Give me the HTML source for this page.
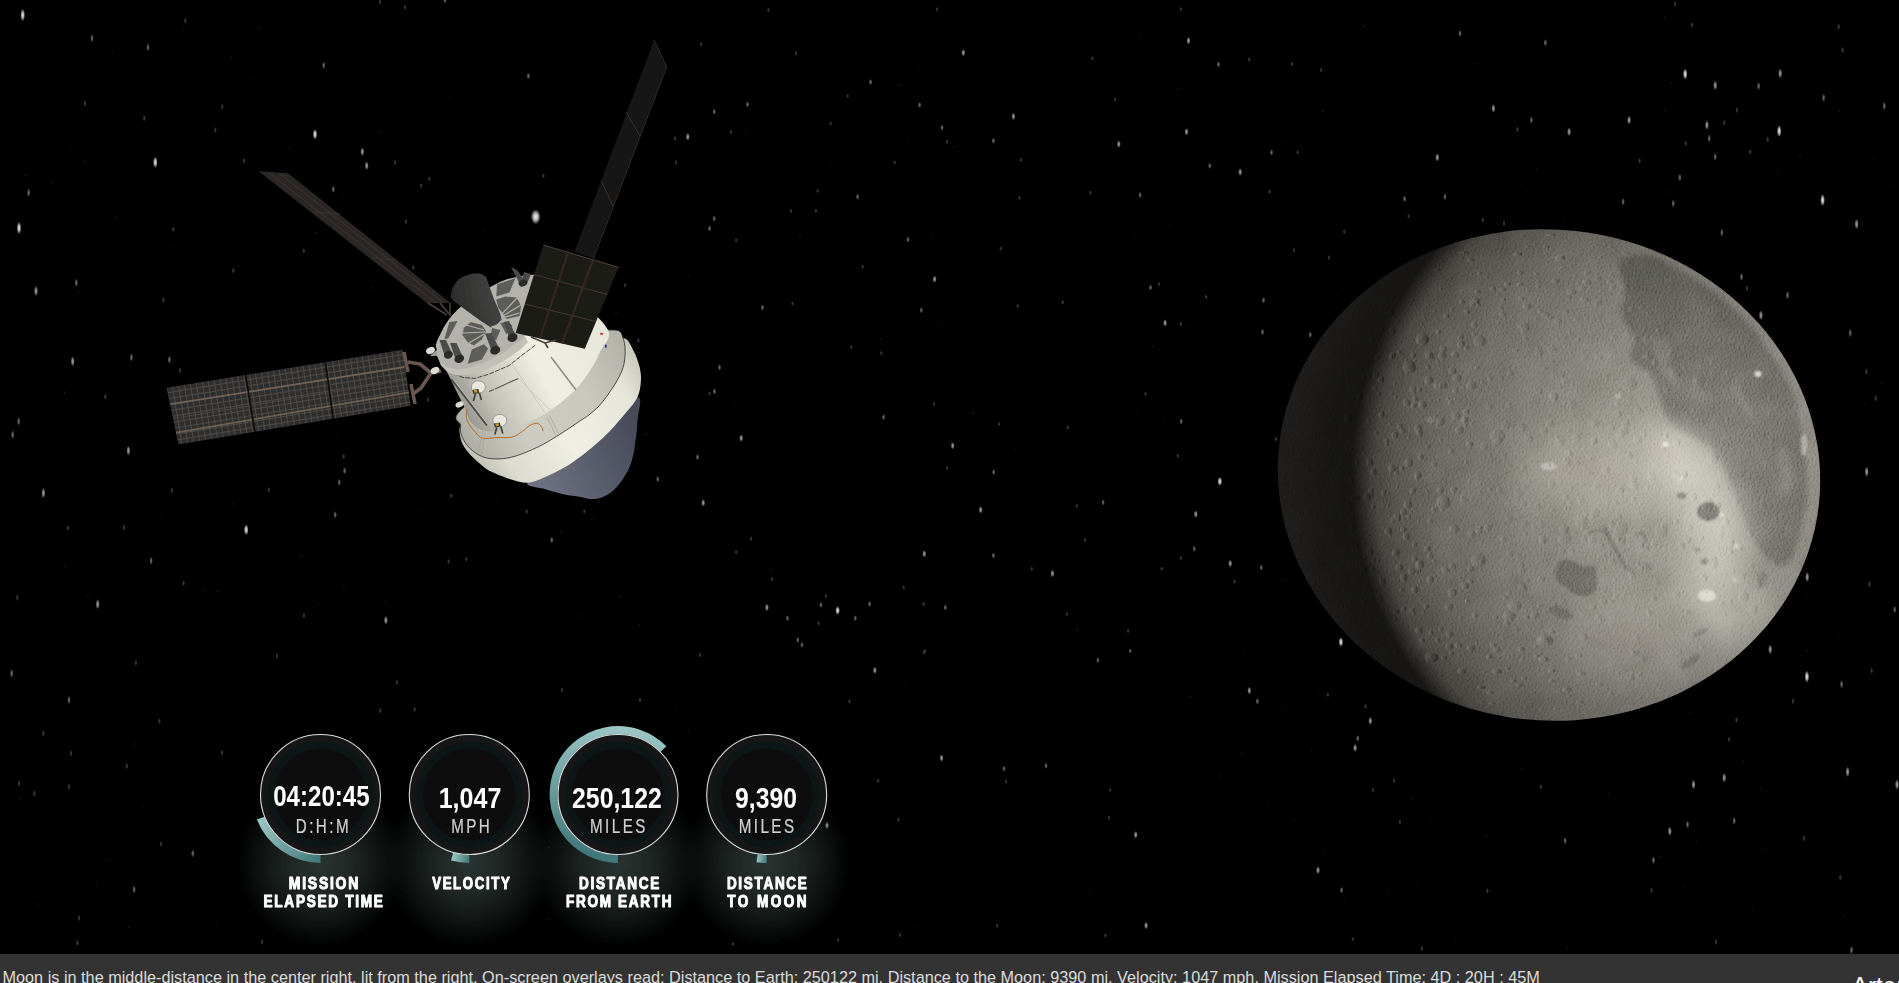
<!DOCTYPE html>
<html lang="en">
<head>
<meta charset="utf-8">
<title>Artemis Real-time Orbit Website</title>
<style>
html,body{margin:0;padding:0;background:#000;overflow:hidden;}
body{width:1899px;height:983px;position:relative;font-family:"Liberation Sans",Arial,sans-serif;}
#scene{position:absolute;left:0;top:0;width:1899px;height:983px;display:block;}
#bar{position:absolute;left:0;top:954px;width:1899px;height:29px;background:#333333;overflow:hidden;}
#desc{position:absolute;left:2.5px;top:14.2px;margin:0;white-space:nowrap;font-size:16.26px;line-height:18px;color:#dcdcdc;}
#title{position:absolute;left:1851.7px;top:17.6px;margin:0;white-space:nowrap;font-size:24.4px;line-height:28px;color:#fff;font-weight:normal;}
.gv{font-family:"Liberation Sans",Arial,sans-serif;font-weight:bold;fill:#fff;}
.gu{font-family:"Liberation Sans",Arial,sans-serif;fill:#d0d0d0;stroke:#d0d0d0;stroke-width:0.25px;}
.gl{font-family:"Liberation Sans",Arial,sans-serif;font-weight:bold;fill:#fff;}
</style>
</head>
<body>
<svg id="scene" width="1899" height="983" viewBox="0 0 1899 983">
<defs>
<radialGradient id="glow" cx="0.5" cy="0.5" r="0.5">
<stop offset="0" stop-color="#3a4844" stop-opacity="0.8"/>
<stop offset="0.35" stop-color="#3a4844" stop-opacity="0.6"/>
<stop offset="0.5" stop-color="#3a4844" stop-opacity="0.47"/>
<stop offset="0.77" stop-color="#3a4844" stop-opacity="0.22"/>
<stop offset="0.92" stop-color="#3a4844" stop-opacity="0.06"/>
<stop offset="1" stop-color="#3a4844" stop-opacity="0"/>
</radialGradient>
<radialGradient id="disc" cx="0.5" cy="0.5" r="0.5">
<stop offset="0" stop-color="#0a0c0c"/>
<stop offset="0.7" stop-color="#0c0f0f"/>
<stop offset="1" stop-color="#151a1a"/>
</radialGradient>
<linearGradient id="arcg" x1="0" y1="1" x2="0" y2="0">
<stop offset="0" stop-color="#3f7477"/>
<stop offset="1" stop-color="#8fc0bf"/>
</linearGradient>
</defs>
<rect width="1899" height="983" fill="#000"/>
<defs><radialGradient id="sg"><stop offset="0" stop-color="#fff" stop-opacity="1"/><stop offset="0.45" stop-color="#fff" stop-opacity="0.75"/><stop offset="1" stop-color="#fff" stop-opacity="0"/></radialGradient></defs>
<g fill="url(#sg)">
<ellipse cx="22.7" cy="15.0" rx="2.38" ry="6.41" opacity="0.9"/>
<ellipse cx="92.0" cy="38.3" rx="1.80" ry="4.40" opacity="0.42"/>
<ellipse cx="148.0" cy="47.3" rx="1.80" ry="4.25" opacity="0.42"/>
<ellipse cx="323.7" cy="65.3" rx="1.80" ry="3.85" opacity="0.42"/>
<ellipse cx="85.0" cy="103.3" rx="1.61" ry="3.61" opacity="0.24"/>
<ellipse cx="144.3" cy="118.3" rx="1.61" ry="3.48" opacity="0.24"/>
<ellipse cx="222.3" cy="106.7" rx="1.61" ry="3.33" opacity="0.24"/>
<ellipse cx="215.3" cy="130.0" rx="1.61" ry="3.34" opacity="0.24"/>
<ellipse cx="315.0" cy="134.3" rx="2.38" ry="5.39" opacity="0.9"/>
<ellipse cx="362.3" cy="151.7" rx="2.09" ry="4.46" opacity="0.62"/>
<ellipse cx="366.7" cy="165.7" rx="2.09" ry="4.45" opacity="0.62"/>
<ellipse cx="155.3" cy="162.3" rx="2.38" ry="5.90" opacity="0.9"/>
<ellipse cx="244.0" cy="160.7" rx="1.61" ry="3.29" opacity="0.24"/>
<ellipse cx="333.3" cy="189.3" rx="1.80" ry="3.83" opacity="0.42"/>
<ellipse cx="28.7" cy="192.7" rx="1.80" ry="4.58" opacity="0.42"/>
<ellipse cx="19.0" cy="228.0" rx="2.38" ry="6.42" opacity="0.9"/>
<ellipse cx="36.0" cy="291.0" rx="2.09" ry="5.39" opacity="0.62"/>
<ellipse cx="76.3" cy="282.7" rx="1.80" ry="4.44" opacity="0.42"/>
<ellipse cx="421.3" cy="185.7" rx="1.61" ry="3.00" opacity="0.24"/>
<ellipse cx="429.3" cy="179.0" rx="1.61" ry="2.99" opacity="0.24"/>
<ellipse cx="395.0" cy="162.3" rx="1.61" ry="3.04" opacity="0.24"/>
<ellipse cx="406.0" cy="221.7" rx="1.61" ry="3.02" opacity="0.24"/>
<ellipse cx="303.7" cy="251.0" rx="1.61" ry="3.18" opacity="0.24"/>
<ellipse cx="173.3" cy="229.3" rx="1.61" ry="3.42" opacity="0.24"/>
<ellipse cx="413.3" cy="267.7" rx="1.61" ry="3.01" opacity="0.24"/>
<ellipse cx="380.0" cy="1.7" rx="1.61" ry="3.06" opacity="0.24"/>
<ellipse cx="405.0" cy="7.3" rx="1.61" ry="3.02" opacity="0.24"/>
<ellipse cx="445.0" cy="0.0" rx="1.80" ry="3.63" opacity="0.42"/>
<ellipse cx="185.3" cy="20.7" rx="1.61" ry="3.40" opacity="0.24"/>
<ellipse cx="233.3" cy="270.7" rx="1.61" ry="3.31" opacity="0.24"/>
<ellipse cx="163.3" cy="300.0" rx="1.61" ry="3.44" opacity="0.24"/>
<ellipse cx="528.4" cy="76.0" rx="1.80" ry="3.50" opacity="0.42"/>
<ellipse cx="687.8" cy="136.8" rx="2.09" ry="3.93" opacity="0.62"/>
<ellipse cx="714.2" cy="111.7" rx="1.80" ry="3.31" opacity="0.42"/>
<ellipse cx="747.5" cy="104.4" rx="1.80" ry="3.28" opacity="0.42"/>
<ellipse cx="730.8" cy="131.8" rx="1.61" ry="2.70" opacity="0.24"/>
<ellipse cx="675.1" cy="138.4" rx="1.61" ry="2.73" opacity="0.24"/>
<ellipse cx="676.1" cy="162.4" rx="1.61" ry="2.73" opacity="0.24"/>
<ellipse cx="714.2" cy="218.5" rx="1.80" ry="3.31" opacity="0.42"/>
<ellipse cx="709.5" cy="228.5" rx="1.80" ry="3.31" opacity="0.42"/>
<ellipse cx="870.6" cy="82.0" rx="1.80" ry="3.23" opacity="0.42"/>
<ellipse cx="847.6" cy="96.0" rx="1.61" ry="2.65" opacity="0.24"/>
<ellipse cx="919.6" cy="105.0" rx="1.80" ry="3.22" opacity="0.42"/>
<ellipse cx="942.0" cy="127.7" rx="1.80" ry="3.22" opacity="0.42"/>
<ellipse cx="947.0" cy="141.7" rx="1.61" ry="2.63" opacity="0.24"/>
<ellipse cx="830.6" cy="123.4" rx="1.61" ry="2.65" opacity="0.24"/>
<ellipse cx="894.6" cy="162.4" rx="1.61" ry="2.64" opacity="0.24"/>
<ellipse cx="857.6" cy="196.8" rx="1.80" ry="3.23" opacity="0.42"/>
<ellipse cx="817.6" cy="190.8" rx="1.61" ry="2.66" opacity="0.24"/>
<ellipse cx="790.9" cy="210.8" rx="1.61" ry="2.67" opacity="0.24"/>
<ellipse cx="815.9" cy="210.8" rx="1.61" ry="2.66" opacity="0.24"/>
<ellipse cx="908.0" cy="239.5" rx="1.80" ry="3.22" opacity="0.42"/>
<ellipse cx="934.6" cy="279.2" rx="2.09" ry="3.80" opacity="0.62"/>
<ellipse cx="862.6" cy="266.8" rx="1.61" ry="2.64" opacity="0.24"/>
<ellipse cx="762.5" cy="307.5" rx="1.80" ry="3.27" opacity="0.42"/>
<ellipse cx="921.3" cy="310.2" rx="1.80" ry="3.22" opacity="0.42"/>
<ellipse cx="792.5" cy="303.5" rx="1.61" ry="2.67" opacity="0.24"/>
<ellipse cx="543.4" cy="175.8" rx="1.61" ry="2.85" opacity="0.24"/>
<ellipse cx="768.5" cy="10.0" rx="1.61" ry="2.68" opacity="0.24"/>
<ellipse cx="701.2" cy="44.4" rx="1.61" ry="2.71" opacity="0.24"/>
<ellipse cx="795.9" cy="53.4" rx="1.61" ry="2.66" opacity="0.24"/>
<ellipse cx="937.0" cy="9.3" rx="1.61" ry="2.63" opacity="0.24"/>
<ellipse cx="625.1" cy="285.2" rx="1.61" ry="2.77" opacity="0.24"/>
<ellipse cx="736.2" cy="240.2" rx="1.61" ry="2.69" opacity="0.24"/>
<ellipse cx="963.3" cy="52.7" rx="2.09" ry="3.80" opacity="0.62"/>
<ellipse cx="1188.5" cy="40.7" rx="2.09" ry="3.91" opacity="0.62"/>
<ellipse cx="1218.5" cy="64.4" rx="1.80" ry="3.33" opacity="0.42"/>
<ellipse cx="1249.2" cy="59.4" rx="1.61" ry="2.75" opacity="0.24"/>
<ellipse cx="1291.9" cy="64.0" rx="1.61" ry="2.79" opacity="0.24"/>
<ellipse cx="1321.2" cy="70.0" rx="1.61" ry="2.81" opacity="0.24"/>
<ellipse cx="1013.4" cy="116.4" rx="2.09" ry="3.81" opacity="0.62"/>
<ellipse cx="993.4" cy="140.8" rx="1.80" ry="3.22" opacity="0.42"/>
<ellipse cx="1021.0" cy="160.1" rx="1.61" ry="2.64" opacity="0.24"/>
<ellipse cx="1118.8" cy="144.1" rx="2.09" ry="3.86" opacity="0.62"/>
<ellipse cx="1186.5" cy="131.8" rx="2.09" ry="3.91" opacity="0.62"/>
<ellipse cx="1209.8" cy="165.8" rx="1.80" ry="3.33" opacity="0.42"/>
<ellipse cx="1240.2" cy="172.1" rx="2.09" ry="3.96" opacity="0.62"/>
<ellipse cx="1271.5" cy="152.4" rx="1.80" ry="3.38" opacity="0.42"/>
<ellipse cx="1297.6" cy="152.4" rx="1.61" ry="2.79" opacity="0.24"/>
<ellipse cx="1090.4" cy="192.8" rx="1.61" ry="2.66" opacity="0.24"/>
<ellipse cx="1140.1" cy="195.1" rx="1.80" ry="3.28" opacity="0.42"/>
<ellipse cx="1019.4" cy="197.8" rx="1.61" ry="2.64" opacity="0.24"/>
<ellipse cx="1269.5" cy="191.8" rx="1.61" ry="2.77" opacity="0.24"/>
<ellipse cx="1404.6" cy="198.8" rx="1.80" ry="3.55" opacity="0.42"/>
<ellipse cx="1408.6" cy="216.1" rx="1.61" ry="2.91" opacity="0.24"/>
<ellipse cx="1344.3" cy="231.8" rx="1.61" ry="2.84" opacity="0.24"/>
<ellipse cx="1293.9" cy="250.2" rx="1.61" ry="2.79" opacity="0.24"/>
<ellipse cx="1328.9" cy="257.5" rx="1.61" ry="2.82" opacity="0.24"/>
<ellipse cx="1000.7" cy="248.5" rx="1.61" ry="2.64" opacity="0.24"/>
<ellipse cx="1150.5" cy="287.5" rx="1.80" ry="3.28" opacity="0.42"/>
<ellipse cx="1159.1" cy="284.2" rx="1.61" ry="2.69" opacity="0.24"/>
<ellipse cx="1263.5" cy="300.2" rx="1.80" ry="3.38" opacity="0.42"/>
<ellipse cx="1017.7" cy="305.9" rx="1.61" ry="2.64" opacity="0.24"/>
<ellipse cx="1062.7" cy="302.2" rx="1.61" ry="2.65" opacity="0.24"/>
<ellipse cx="1165.1" cy="322.9" rx="2.09" ry="3.89" opacity="0.62"/>
<ellipse cx="1180.8" cy="324.2" rx="1.61" ry="2.70" opacity="0.24"/>
<ellipse cx="1206.2" cy="296.9" rx="1.61" ry="2.72" opacity="0.24"/>
<ellipse cx="1092.4" cy="58.4" rx="1.61" ry="2.66" opacity="0.24"/>
<ellipse cx="1115.1" cy="99.4" rx="1.61" ry="2.67" opacity="0.24"/>
<ellipse cx="1180.8" cy="9.3" rx="1.61" ry="2.70" opacity="0.24"/>
<ellipse cx="1460.0" cy="33.4" rx="1.80" ry="3.63" opacity="0.42"/>
<ellipse cx="1545.4" cy="42.7" rx="1.80" ry="3.79" opacity="0.42"/>
<ellipse cx="1493.4" cy="108.4" rx="2.09" ry="4.36" opacity="0.62"/>
<ellipse cx="1531.4" cy="120.1" rx="1.80" ry="3.76" opacity="0.42"/>
<ellipse cx="1569.1" cy="131.8" rx="2.09" ry="4.53" opacity="0.62"/>
<ellipse cx="1629.1" cy="120.1" rx="2.09" ry="4.68" opacity="0.62"/>
<ellipse cx="1437.3" cy="157.4" rx="2.09" ry="4.25" opacity="0.62"/>
<ellipse cx="1445.0" cy="196.8" rx="1.80" ry="3.61" opacity="0.42"/>
<ellipse cx="1623.1" cy="201.8" rx="1.80" ry="3.94" opacity="0.42"/>
<ellipse cx="1673.2" cy="203.5" rx="1.80" ry="4.06" opacity="0.42"/>
<ellipse cx="1679.8" cy="177.5" rx="1.80" ry="4.07" opacity="0.42"/>
<ellipse cx="1685.2" cy="74.0" rx="2.38" ry="5.69" opacity="0.9"/>
<ellipse cx="1715.2" cy="85.4" rx="2.09" ry="4.91" opacity="0.62"/>
<ellipse cx="1758.6" cy="86.1" rx="1.80" ry="4.27" opacity="0.42"/>
<ellipse cx="1780.2" cy="73.4" rx="2.09" ry="5.11" opacity="0.62"/>
<ellipse cx="1779.2" cy="131.1" rx="2.38" ry="6.02" opacity="0.9"/>
<ellipse cx="1706.9" cy="125.1" rx="2.09" ry="4.89" opacity="0.62"/>
<ellipse cx="1709.2" cy="138.4" rx="1.80" ry="4.14" opacity="0.42"/>
<ellipse cx="1715.2" cy="156.8" rx="1.80" ry="4.16" opacity="0.42"/>
<ellipse cx="1685.8" cy="143.4" rx="1.61" ry="3.34" opacity="0.24"/>
<ellipse cx="1750.2" cy="151.8" rx="1.61" ry="3.47" opacity="0.24"/>
<ellipse cx="1767.6" cy="139.4" rx="1.61" ry="3.51" opacity="0.24"/>
<ellipse cx="1823.6" cy="97.7" rx="1.80" ry="4.44" opacity="0.42"/>
<ellipse cx="1884.3" cy="106.1" rx="1.80" ry="4.62" opacity="0.42"/>
<ellipse cx="1822.6" cy="200.1" rx="2.38" ry="6.19" opacity="0.9"/>
<ellipse cx="1856.6" cy="224.1" rx="2.09" ry="5.36" opacity="0.62"/>
<ellipse cx="1721.9" cy="232.5" rx="1.80" ry="4.17" opacity="0.42"/>
<ellipse cx="1741.5" cy="276.9" rx="1.80" ry="4.22" opacity="0.42"/>
<ellipse cx="1787.6" cy="295.2" rx="1.80" ry="4.34" opacity="0.42"/>
<ellipse cx="1760.9" cy="315.2" rx="2.09" ry="5.05" opacity="0.62"/>
<ellipse cx="1674.8" cy="4.0" rx="1.61" ry="3.32" opacity="0.24"/>
<ellipse cx="1691.8" cy="25.0" rx="1.61" ry="3.35" opacity="0.24"/>
<ellipse cx="1838.6" cy="26.7" rx="1.61" ry="3.67" opacity="0.24"/>
<ellipse cx="1842.6" cy="50.0" rx="1.61" ry="3.68" opacity="0.24"/>
<ellipse cx="1736.9" cy="110.1" rx="1.61" ry="3.45" opacity="0.24"/>
<ellipse cx="1724.2" cy="122.7" rx="1.61" ry="3.42" opacity="0.24"/>
<ellipse cx="1639.5" cy="160.8" rx="1.61" ry="3.26" opacity="0.24"/>
<ellipse cx="1517.4" cy="129.4" rx="1.61" ry="3.06" opacity="0.24"/>
<ellipse cx="1504.0" cy="223.5" rx="1.61" ry="3.04" opacity="0.24"/>
<ellipse cx="1482.7" cy="220.1" rx="1.61" ry="3.00" opacity="0.24"/>
<ellipse cx="1746.9" cy="288.5" rx="1.61" ry="3.47" opacity="0.24"/>
<ellipse cx="72.7" cy="361.4" rx="2.09" ry="5.26" opacity="0.62"/>
<ellipse cx="131.4" cy="357.4" rx="1.80" ry="4.29" opacity="0.42"/>
<ellipse cx="169.4" cy="359.7" rx="1.80" ry="4.20" opacity="0.42"/>
<ellipse cx="180.1" cy="370.4" rx="1.61" ry="3.41" opacity="0.24"/>
<ellipse cx="105.4" cy="396.7" rx="1.61" ry="3.57" opacity="0.24"/>
<ellipse cx="18.7" cy="421.4" rx="1.80" ry="4.61" opacity="0.42"/>
<ellipse cx="12.7" cy="434.7" rx="1.80" ry="4.63" opacity="0.42"/>
<ellipse cx="128.4" cy="450.7" rx="2.09" ry="5.08" opacity="0.62"/>
<ellipse cx="43.4" cy="493.1" rx="2.09" ry="5.36" opacity="0.62"/>
<ellipse cx="246.2" cy="529.8" rx="2.38" ry="5.59" opacity="0.9"/>
<ellipse cx="343.6" cy="456.4" rx="1.61" ry="3.12" opacity="0.24"/>
<ellipse cx="344.6" cy="470.8" rx="1.80" ry="3.81" opacity="0.42"/>
<ellipse cx="339.2" cy="482.4" rx="1.80" ry="3.82" opacity="0.42"/>
<ellipse cx="335.2" cy="514.8" rx="1.80" ry="3.82" opacity="0.42"/>
<ellipse cx="171.8" cy="490.4" rx="1.61" ry="3.43" opacity="0.24"/>
<ellipse cx="151.1" cy="560.8" rx="1.80" ry="4.24" opacity="0.42"/>
<ellipse cx="97.7" cy="604.2" rx="2.09" ry="5.18" opacity="0.62"/>
<ellipse cx="183.5" cy="583.2" rx="1.61" ry="3.40" opacity="0.24"/>
<ellipse cx="385.9" cy="620.2" rx="2.09" ry="4.41" opacity="0.62"/>
<ellipse cx="448.6" cy="561.5" rx="1.61" ry="2.96" opacity="0.24"/>
<ellipse cx="466.3" cy="559.1" rx="1.61" ry="2.94" opacity="0.24"/>
<ellipse cx="451.3" cy="495.8" rx="1.61" ry="2.96" opacity="0.24"/>
<ellipse cx="427.9" cy="399.7" rx="1.61" ry="2.99" opacity="0.24"/>
<ellipse cx="67.7" cy="528.1" rx="1.61" ry="3.65" opacity="0.24"/>
<ellipse cx="17.3" cy="597.5" rx="1.61" ry="3.77" opacity="0.24"/>
<ellipse cx="303.9" cy="615.5" rx="1.61" ry="3.18" opacity="0.24"/>
<ellipse cx="268.8" cy="489.8" rx="1.61" ry="3.24" opacity="0.24"/>
<ellipse cx="124.1" cy="527.5" rx="1.61" ry="3.53" opacity="0.24"/>
<ellipse cx="638.4" cy="340.7" rx="1.61" ry="2.76" opacity="0.24"/>
<ellipse cx="719.5" cy="367.4" rx="1.80" ry="3.30" opacity="0.42"/>
<ellipse cx="714.5" cy="391.4" rx="1.80" ry="3.31" opacity="0.42"/>
<ellipse cx="709.5" cy="393.4" rx="1.61" ry="2.71" opacity="0.24"/>
<ellipse cx="741.2" cy="438.1" rx="2.09" ry="3.89" opacity="0.62"/>
<ellipse cx="697.5" cy="457.1" rx="1.80" ry="3.32" opacity="0.42"/>
<ellipse cx="657.8" cy="479.1" rx="1.80" ry="3.35" opacity="0.42"/>
<ellipse cx="703.2" cy="502.8" rx="2.09" ry="3.92" opacity="0.62"/>
<ellipse cx="551.7" cy="540.1" rx="1.80" ry="3.47" opacity="0.42"/>
<ellipse cx="526.7" cy="511.5" rx="1.61" ry="2.87" opacity="0.24"/>
<ellipse cx="584.4" cy="511.5" rx="1.61" ry="2.81" opacity="0.24"/>
<ellipse cx="736.2" cy="552.1" rx="1.61" ry="2.69" opacity="0.24"/>
<ellipse cx="751.2" cy="538.8" rx="1.61" ry="2.68" opacity="0.24"/>
<ellipse cx="851.3" cy="347.3" rx="1.61" ry="2.65" opacity="0.24"/>
<ellipse cx="881.3" cy="353.0" rx="1.61" ry="2.64" opacity="0.24"/>
<ellipse cx="883.6" cy="417.1" rx="1.80" ry="3.22" opacity="0.42"/>
<ellipse cx="934.0" cy="403.7" rx="1.61" ry="2.63" opacity="0.24"/>
<ellipse cx="924.3" cy="553.8" rx="2.09" ry="3.80" opacity="0.62"/>
<ellipse cx="766.9" cy="607.5" rx="2.09" ry="3.87" opacity="0.62"/>
<ellipse cx="787.5" cy="618.2" rx="1.80" ry="3.26" opacity="0.42"/>
<ellipse cx="837.6" cy="610.5" rx="2.38" ry="4.51" opacity="0.9"/>
<ellipse cx="820.9" cy="604.9" rx="1.80" ry="3.24" opacity="0.42"/>
<ellipse cx="869.6" cy="603.9" rx="1.80" ry="3.23" opacity="0.42"/>
<ellipse cx="855.3" cy="618.2" rx="1.80" ry="3.23" opacity="0.42"/>
<ellipse cx="818.6" cy="623.2" rx="1.61" ry="2.66" opacity="0.24"/>
<ellipse cx="797.9" cy="639.9" rx="1.80" ry="3.25" opacity="0.42"/>
<ellipse cx="801.9" cy="644.9" rx="1.80" ry="3.25" opacity="0.42"/>
<ellipse cx="945.3" cy="607.5" rx="1.80" ry="3.22" opacity="0.42"/>
<ellipse cx="923.6" cy="604.2" rx="1.61" ry="2.63" opacity="0.24"/>
<ellipse cx="903.6" cy="587.5" rx="1.61" ry="2.64" opacity="0.24"/>
<ellipse cx="771.9" cy="579.2" rx="1.61" ry="2.67" opacity="0.24"/>
<ellipse cx="825.9" cy="595.9" rx="1.61" ry="2.65" opacity="0.24"/>
<ellipse cx="947.0" cy="468.1" rx="1.61" ry="2.63" opacity="0.24"/>
<ellipse cx="925.3" cy="650.9" rx="1.61" ry="2.63" opacity="0.24"/>
<ellipse cx="952.7" cy="445.7" rx="2.09" ry="3.80" opacity="0.62"/>
<ellipse cx="993.7" cy="472.1" rx="1.80" ry="3.22" opacity="0.42"/>
<ellipse cx="980.7" cy="509.8" rx="2.09" ry="3.80" opacity="0.62"/>
<ellipse cx="993.4" cy="555.5" rx="1.80" ry="3.22" opacity="0.42"/>
<ellipse cx="1052.4" cy="573.5" rx="2.09" ry="3.82" opacity="0.62"/>
<ellipse cx="1076.8" cy="505.8" rx="1.61" ry="2.65" opacity="0.24"/>
<ellipse cx="1103.1" cy="502.4" rx="1.80" ry="3.26" opacity="0.42"/>
<ellipse cx="1145.5" cy="394.0" rx="1.61" ry="2.68" opacity="0.24"/>
<ellipse cx="1181.2" cy="421.4" rx="1.80" ry="3.30" opacity="0.42"/>
<ellipse cx="1177.8" cy="455.7" rx="1.61" ry="2.70" opacity="0.24"/>
<ellipse cx="1219.8" cy="481.4" rx="2.38" ry="4.65" opacity="0.9"/>
<ellipse cx="1195.8" cy="514.1" rx="2.09" ry="3.92" opacity="0.62"/>
<ellipse cx="1194.2" cy="548.8" rx="1.80" ry="3.31" opacity="0.42"/>
<ellipse cx="1180.8" cy="558.1" rx="1.61" ry="2.70" opacity="0.24"/>
<ellipse cx="1230.2" cy="563.5" rx="2.09" ry="3.95" opacity="0.62"/>
<ellipse cx="1261.2" cy="567.5" rx="1.80" ry="3.37" opacity="0.42"/>
<ellipse cx="1234.5" cy="581.5" rx="1.61" ry="2.74" opacity="0.24"/>
<ellipse cx="1161.8" cy="568.8" rx="1.61" ry="2.69" opacity="0.24"/>
<ellipse cx="1262.5" cy="332.0" rx="1.80" ry="3.37" opacity="0.42"/>
<ellipse cx="1310.2" cy="334.7" rx="1.80" ry="3.43" opacity="0.42"/>
<ellipse cx="1275.9" cy="439.1" rx="1.61" ry="2.77" opacity="0.24"/>
<ellipse cx="1340.9" cy="642.0" rx="2.38" ry="4.83" opacity="0.9"/>
<ellipse cx="1128.1" cy="630.9" rx="1.61" ry="2.67" opacity="0.24"/>
<ellipse cx="1130.1" cy="650.9" rx="1.61" ry="2.68" opacity="0.24"/>
<ellipse cx="1066.7" cy="614.2" rx="1.61" ry="2.65" opacity="0.24"/>
<ellipse cx="1031.7" cy="568.8" rx="1.61" ry="2.64" opacity="0.24"/>
<ellipse cx="999.0" cy="424.1" rx="1.61" ry="2.64" opacity="0.24"/>
<ellipse cx="1067.7" cy="427.4" rx="1.61" ry="2.65" opacity="0.24"/>
<ellipse cx="1085.1" cy="539.8" rx="1.61" ry="2.66" opacity="0.24"/>
<ellipse cx="1770.2" cy="649.4" rx="2.09" ry="5.08" opacity="0.62"/>
<ellipse cx="1806.9" cy="676.7" rx="2.38" ry="6.13" opacity="0.9"/>
<ellipse cx="1841.6" cy="684.4" rx="1.80" ry="4.49" opacity="0.42"/>
<ellipse cx="1871.6" cy="670.7" rx="1.61" ry="3.75" opacity="0.24"/>
<ellipse cx="1736.5" cy="720.1" rx="1.61" ry="3.44" opacity="0.24"/>
<ellipse cx="1729.2" cy="739.4" rx="1.61" ry="3.43" opacity="0.24"/>
<ellipse cx="1724.2" cy="777.8" rx="2.09" ry="4.94" opacity="0.62"/>
<ellipse cx="1693.5" cy="784.5" rx="2.09" ry="4.85" opacity="0.62"/>
<ellipse cx="1847.6" cy="771.8" rx="2.09" ry="5.33" opacity="0.62"/>
<ellipse cx="1897.0" cy="784.5" rx="2.09" ry="5.50" opacity="0.62"/>
<ellipse cx="1734.2" cy="820.8" rx="1.80" ry="4.20" opacity="0.42"/>
<ellipse cx="1687.5" cy="824.5" rx="1.80" ry="4.09" opacity="0.42"/>
<ellipse cx="1669.8" cy="831.2" rx="2.09" ry="4.78" opacity="0.62"/>
<ellipse cx="1565.1" cy="840.8" rx="1.80" ry="3.82" opacity="0.42"/>
<ellipse cx="1653.5" cy="860.2" rx="1.80" ry="4.01" opacity="0.42"/>
<ellipse cx="1651.5" cy="890.2" rx="1.61" ry="3.28" opacity="0.24"/>
<ellipse cx="1487.4" cy="890.9" rx="1.61" ry="3.01" opacity="0.24"/>
<ellipse cx="1540.7" cy="786.8" rx="1.61" ry="3.09" opacity="0.24"/>
<ellipse cx="1804.2" cy="838.5" rx="1.61" ry="3.59" opacity="0.24"/>
<ellipse cx="1840.3" cy="877.5" rx="1.61" ry="3.67" opacity="0.24"/>
<ellipse cx="1793.2" cy="701.1" rx="1.61" ry="3.57" opacity="0.24"/>
<ellipse cx="1895.0" cy="609.3" rx="1.61" ry="3.80" opacity="0.24"/>
<ellipse cx="11.7" cy="673.4" rx="1.80" ry="4.63" opacity="0.42"/>
<ellipse cx="135.8" cy="662.7" rx="1.61" ry="3.50" opacity="0.24"/>
<ellipse cx="69.0" cy="700.0" rx="1.80" ry="4.46" opacity="0.42"/>
<ellipse cx="276.9" cy="656.0" rx="1.61" ry="3.23" opacity="0.24"/>
<ellipse cx="396.9" cy="682.4" rx="1.61" ry="3.03" opacity="0.24"/>
<ellipse cx="159.4" cy="721.1" rx="1.61" ry="3.45" opacity="0.24"/>
<ellipse cx="43.4" cy="733.4" rx="1.61" ry="3.71" opacity="0.24"/>
<ellipse cx="71.0" cy="753.4" rx="1.61" ry="3.65" opacity="0.24"/>
<ellipse cx="222.1" cy="752.7" rx="1.61" ry="3.33" opacity="0.24"/>
<ellipse cx="126.8" cy="766.1" rx="1.61" ry="3.52" opacity="0.24"/>
<ellipse cx="69.0" cy="786.8" rx="1.61" ry="3.65" opacity="0.24"/>
<ellipse cx="34.4" cy="793.4" rx="1.61" ry="3.73" opacity="0.24"/>
<ellipse cx="19.0" cy="783.4" rx="1.61" ry="3.77" opacity="0.24"/>
<ellipse cx="161.1" cy="844.1" rx="1.61" ry="3.45" opacity="0.24"/>
<ellipse cx="192.8" cy="853.5" rx="1.80" ry="4.14" opacity="0.42"/>
<ellipse cx="134.1" cy="889.5" rx="1.80" ry="4.29" opacity="0.42"/>
<ellipse cx="79.1" cy="917.9" rx="1.61" ry="3.63" opacity="0.24"/>
<ellipse cx="77.4" cy="942.9" rx="1.61" ry="3.63" opacity="0.24"/>
<ellipse cx="414.6" cy="709.4" rx="1.61" ry="3.01" opacity="0.24"/>
<ellipse cx="380.3" cy="710.7" rx="1.61" ry="3.06" opacity="0.24"/>
<ellipse cx="874.8" cy="670.3" rx="2.09" ry="3.81" opacity="0.62"/>
<ellipse cx="941.6" cy="758.0" rx="2.09" ry="3.80" opacity="0.62"/>
<ellipse cx="1003.9" cy="768.7" rx="1.80" ry="3.22" opacity="0.42"/>
<ellipse cx="1005.9" cy="781.6" rx="1.61" ry="2.64" opacity="0.24"/>
<ellipse cx="1046.0" cy="765.7" rx="1.80" ry="3.23" opacity="0.42"/>
<ellipse cx="1097.9" cy="660.2" rx="1.80" ry="3.25" opacity="0.42"/>
<ellipse cx="1130.3" cy="651.1" rx="1.61" ry="2.68" opacity="0.24"/>
<ellipse cx="1135.7" cy="834.8" rx="2.09" ry="3.87" opacity="0.62"/>
<ellipse cx="1146.1" cy="925.5" rx="2.09" ry="3.88" opacity="0.62"/>
<ellipse cx="1110.1" cy="790.0" rx="1.61" ry="2.67" opacity="0.24"/>
<ellipse cx="1109.1" cy="817.6" rx="1.61" ry="2.67" opacity="0.24"/>
<ellipse cx="1249.3" cy="690.6" rx="2.09" ry="3.97" opacity="0.62"/>
<ellipse cx="1257.4" cy="701.3" rx="1.80" ry="3.37" opacity="0.42"/>
<ellipse cx="1370.3" cy="720.9" rx="2.09" ry="4.14" opacity="0.62"/>
<ellipse cx="1355.1" cy="747.9" rx="2.09" ry="4.11" opacity="0.62"/>
<ellipse cx="1357.8" cy="738.4" rx="1.80" ry="3.48" opacity="0.42"/>
<ellipse cx="1327.8" cy="694.6" rx="1.61" ry="2.82" opacity="0.24"/>
<ellipse cx="1365.6" cy="706.4" rx="1.61" ry="2.86" opacity="0.24"/>
<ellipse cx="1318.0" cy="870.2" rx="2.09" ry="4.06" opacity="0.62"/>
<ellipse cx="1341.6" cy="890.1" rx="1.80" ry="3.46" opacity="0.42"/>
<ellipse cx="1399.9" cy="822.0" rx="1.61" ry="2.90" opacity="0.24"/>
<ellipse cx="1394.2" cy="780.5" rx="1.61" ry="2.89" opacity="0.24"/>
<ellipse cx="1373.0" cy="790.0" rx="1.61" ry="2.87" opacity="0.24"/>
<ellipse cx="827.0" cy="825.4" rx="2.09" ry="3.83" opacity="0.62"/>
<ellipse cx="898.4" cy="819.6" rx="1.61" ry="2.64" opacity="0.24"/>
<ellipse cx="878.2" cy="780.9" rx="1.61" ry="2.64" opacity="0.24"/>
<ellipse cx="900.1" cy="934.9" rx="1.61" ry="2.64" opacity="0.24"/>
<ellipse cx="997.2" cy="925.8" rx="1.61" ry="2.64" opacity="0.24"/>
<ellipse cx="1105.4" cy="935.6" rx="1.61" ry="2.66" opacity="0.24"/>
<ellipse cx="1352.7" cy="939.0" rx="1.61" ry="2.85" opacity="0.24"/>
<ellipse cx="849.5" cy="701.3" rx="1.61" ry="2.65" opacity="0.24"/>
<ellipse cx="923.7" cy="652.5" rx="1.61" ry="2.63" opacity="0.24"/>
<ellipse cx="1421.8" cy="948.4" rx="1.61" ry="2.92" opacity="0.24"/>
<ellipse cx="1850.2" cy="333.0" rx="1.80" ry="4.52" opacity="0.42"/>
<ellipse cx="1866.7" cy="471.8" rx="2.09" ry="5.40" opacity="0.62"/>
<ellipse cx="1807.2" cy="577.0" rx="2.09" ry="5.20" opacity="0.62"/>
<ellipse cx="1869.4" cy="584.2" rx="1.61" ry="3.74" opacity="0.24"/>
<ellipse cx="1875.7" cy="398.4" rx="1.61" ry="3.76" opacity="0.24"/>
<ellipse cx="1866.3" cy="371.5" rx="1.61" ry="3.73" opacity="0.24"/>
<ellipse cx="1894.5" cy="609.8" rx="1.61" ry="3.80" opacity="0.24"/>
<ellipse cx="262.0" cy="942.0" rx="1.61" ry="3.25" opacity="0.24"/>
<ellipse cx="640.0" cy="700.0" rx="1.61" ry="2.76" opacity="0.24"/>
<ellipse cx="700.0" cy="655.0" rx="1.61" ry="2.71" opacity="0.24"/>
<ellipse cx="562.0" cy="690.0" rx="1.61" ry="2.83" opacity="0.24"/>
<ellipse cx="516.0" cy="812.0" rx="1.61" ry="2.88" opacity="0.24"/>
<ellipse cx="608.0" cy="740.0" rx="1.61" ry="2.79" opacity="0.24"/>
<ellipse cx="838.0" cy="940.0" rx="1.61" ry="2.65" opacity="0.24"/>
<ellipse cx="1851.5" cy="950.0" rx="1.80" ry="4.52" opacity="0.42"/>
<ellipse cx="1716.0" cy="942.0" rx="1.61" ry="3.40" opacity="0.24"/>
<ellipse cx="733.0" cy="944.0" rx="1.61" ry="2.69" opacity="0.24"/>
<ellipse cx="448.3" cy="98.2" rx="1.1" ry="1.7" opacity="0.07"/>
<ellipse cx="294.3" cy="63.3" rx="1.1" ry="1.7" opacity="0.07"/>
<ellipse cx="1743.2" cy="762.0" rx="1.1" ry="1.7" opacity="0.10"/>
<ellipse cx="421.4" cy="510.9" rx="1.1" ry="1.7" opacity="0.07"/>
<ellipse cx="327.9" cy="101.1" rx="1.1" ry="1.7" opacity="0.06"/>
<ellipse cx="1761.3" cy="789.1" rx="1.1" ry="1.7" opacity="0.10"/>
<ellipse cx="1520.1" cy="184.2" rx="1.1" ry="1.7" opacity="0.07"/>
<ellipse cx="1190.6" cy="696.8" rx="1.1" ry="1.7" opacity="0.10"/>
<ellipse cx="1671.2" cy="82.6" rx="1.1" ry="1.7" opacity="0.09"/>
<ellipse cx="1275.6" cy="481.7" rx="1.1" ry="1.7" opacity="0.06"/>
<ellipse cx="899.3" cy="85.1" rx="1.1" ry="1.7" opacity="0.11"/>
<ellipse cx="1643.6" cy="521.4" rx="1.1" ry="1.7" opacity="0.07"/>
<ellipse cx="1725.9" cy="544.9" rx="1.1" ry="1.7" opacity="0.10"/>
<ellipse cx="1610.4" cy="484.0" rx="1.1" ry="1.7" opacity="0.07"/>
<ellipse cx="1137.3" cy="410.4" rx="1.1" ry="1.7" opacity="0.06"/>
<ellipse cx="579.4" cy="773.6" rx="1.1" ry="1.7" opacity="0.05"/>
<ellipse cx="88.0" cy="596.3" rx="1.1" ry="1.7" opacity="0.07"/>
<ellipse cx="1015.2" cy="448.6" rx="1.1" ry="1.7" opacity="0.07"/>
<ellipse cx="1893.8" cy="186.2" rx="1.1" ry="1.7" opacity="0.07"/>
<ellipse cx="384.9" cy="602.3" rx="1.1" ry="1.7" opacity="0.07"/>
<ellipse cx="675.7" cy="711.1" rx="1.1" ry="1.7" opacity="0.07"/>
<ellipse cx="1060.6" cy="860.9" rx="1.1" ry="1.7" opacity="0.06"/>
<ellipse cx="117.0" cy="217.9" rx="1.1" ry="1.7" opacity="0.10"/>
<ellipse cx="1168.7" cy="226.0" rx="1.1" ry="1.7" opacity="0.07"/>
<ellipse cx="337.1" cy="437.0" rx="1.1" ry="1.7" opacity="0.05"/>
<ellipse cx="1324.2" cy="852.9" rx="1.1" ry="1.7" opacity="0.11"/>
<ellipse cx="1395.5" cy="913.8" rx="1.1" ry="1.7" opacity="0.05"/>
<ellipse cx="548.8" cy="919.6" rx="1.1" ry="1.7" opacity="0.10"/>
<ellipse cx="779.4" cy="898.0" rx="1.1" ry="1.7" opacity="0.09"/>
<ellipse cx="1553.2" cy="279.3" rx="1.1" ry="1.7" opacity="0.06"/>
<ellipse cx="843.4" cy="129.9" rx="1.1" ry="1.7" opacity="0.07"/>
<ellipse cx="1826.5" cy="315.4" rx="1.1" ry="1.7" opacity="0.05"/>
<ellipse cx="85.1" cy="161.4" rx="1.1" ry="1.7" opacity="0.10"/>
<ellipse cx="688.8" cy="276.4" rx="1.1" ry="1.7" opacity="0.06"/>
<ellipse cx="1864.3" cy="403.6" rx="1.1" ry="1.7" opacity="0.06"/>
<ellipse cx="112.7" cy="52.6" rx="1.1" ry="1.7" opacity="0.06"/>
<ellipse cx="1285.3" cy="142.5" rx="1.1" ry="1.7" opacity="0.05"/>
<ellipse cx="931.8" cy="237.1" rx="1.1" ry="1.7" opacity="0.11"/>
<ellipse cx="232.2" cy="503.8" rx="1.1" ry="1.7" opacity="0.10"/>
<ellipse cx="777.3" cy="940.2" rx="1.1" ry="1.7" opacity="0.08"/>
<ellipse cx="459.3" cy="390.9" rx="1.1" ry="1.7" opacity="0.05"/>
<ellipse cx="799.9" cy="236.7" rx="1.1" ry="1.7" opacity="0.10"/>
<ellipse cx="1578.2" cy="474.6" rx="1.1" ry="1.7" opacity="0.05"/>
<ellipse cx="483.1" cy="230.8" rx="1.1" ry="1.7" opacity="0.06"/>
<ellipse cx="439.6" cy="828.0" rx="1.1" ry="1.7" opacity="0.06"/>
<ellipse cx="97.4" cy="883.5" rx="1.1" ry="1.7" opacity="0.08"/>
<ellipse cx="1881.1" cy="383.6" rx="1.1" ry="1.7" opacity="0.10"/>
<ellipse cx="1241.9" cy="752.9" rx="1.1" ry="1.7" opacity="0.09"/>
<ellipse cx="938.7" cy="88.4" rx="1.1" ry="1.7" opacity="0.06"/>
<ellipse cx="1659.4" cy="856.6" rx="1.1" ry="1.7" opacity="0.11"/>
<ellipse cx="639.2" cy="625.4" rx="1.1" ry="1.7" opacity="0.10"/>
<ellipse cx="1220.1" cy="775.7" rx="1.1" ry="1.7" opacity="0.08"/>
<ellipse cx="1243.3" cy="653.0" rx="1.1" ry="1.7" opacity="0.07"/>
<ellipse cx="1752.4" cy="910.4" rx="1.1" ry="1.7" opacity="0.05"/>
<ellipse cx="1844.1" cy="915.6" rx="1.1" ry="1.7" opacity="0.09"/>
<ellipse cx="84.6" cy="855.8" rx="1.1" ry="1.7" opacity="0.06"/>
<ellipse cx="1839.2" cy="635.2" rx="1.1" ry="1.7" opacity="0.05"/>
<ellipse cx="317.6" cy="604.7" rx="1.1" ry="1.7" opacity="0.08"/>
<ellipse cx="1417.6" cy="883.0" rx="1.1" ry="1.7" opacity="0.06"/>
<ellipse cx="6.2" cy="878.1" rx="1.1" ry="1.7" opacity="0.05"/>
<ellipse cx="1664.3" cy="110.3" rx="1.1" ry="1.7" opacity="0.10"/>
<ellipse cx="1486.9" cy="835.7" rx="1.1" ry="1.7" opacity="0.08"/>
<ellipse cx="1668.7" cy="192.0" rx="1.1" ry="1.7" opacity="0.09"/>
<ellipse cx="627.9" cy="848.9" rx="1.1" ry="1.7" opacity="0.10"/>
<ellipse cx="895.4" cy="501.1" rx="1.1" ry="1.7" opacity="0.05"/>
<ellipse cx="64.9" cy="566.0" rx="1.1" ry="1.7" opacity="0.08"/>
<ellipse cx="1642.1" cy="578.9" rx="1.1" ry="1.7" opacity="0.06"/>
<ellipse cx="688.5" cy="730.7" rx="1.1" ry="1.7" opacity="0.08"/>
<ellipse cx="20.0" cy="797.5" rx="1.1" ry="1.7" opacity="0.10"/>
<ellipse cx="161.7" cy="517.3" rx="1.1" ry="1.7" opacity="0.07"/>
<ellipse cx="1495.2" cy="296.2" rx="1.1" ry="1.7" opacity="0.06"/>
<ellipse cx="924.2" cy="919.9" rx="1.1" ry="1.7" opacity="0.06"/>
<ellipse cx="217.3" cy="591.2" rx="1.1" ry="1.7" opacity="0.10"/>
<ellipse cx="973.2" cy="413.1" rx="1.1" ry="1.7" opacity="0.10"/>
<ellipse cx="1474.7" cy="63.7" rx="1.1" ry="1.7" opacity="0.10"/>
<ellipse cx="371.9" cy="287.8" rx="1.1" ry="1.7" opacity="0.10"/>
<ellipse cx="802.3" cy="760.0" rx="1.1" ry="1.7" opacity="0.06"/>
<ellipse cx="1660.3" cy="167.9" rx="1.1" ry="1.7" opacity="0.06"/>
<ellipse cx="938.6" cy="322.3" rx="1.1" ry="1.7" opacity="0.08"/>
<ellipse cx="1716.8" cy="676.4" rx="1.1" ry="1.7" opacity="0.05"/>
<ellipse cx="592.1" cy="518.8" rx="1.1" ry="1.7" opacity="0.08"/>
<ellipse cx="1358.9" cy="461.0" rx="1.1" ry="1.7" opacity="0.05"/>
<ellipse cx="466.1" cy="806.9" rx="1.1" ry="1.7" opacity="0.07"/>
<ellipse cx="1455.9" cy="938.5" rx="1.1" ry="1.7" opacity="0.09"/>
<ellipse cx="1285.1" cy="580.3" rx="1.1" ry="1.7" opacity="0.07"/>
<ellipse cx="1733.4" cy="444.6" rx="1.1" ry="1.7" opacity="0.10"/>
<ellipse cx="580.4" cy="825.9" rx="1.1" ry="1.7" opacity="0.10"/>
<ellipse cx="1164.1" cy="420.8" rx="1.1" ry="1.7" opacity="0.06"/>
<ellipse cx="1464.2" cy="344.8" rx="1.1" ry="1.7" opacity="0.09"/>
<ellipse cx="253.1" cy="78.6" rx="1.1" ry="1.7" opacity="0.06"/>
<ellipse cx="1536.3" cy="169.1" rx="1.1" ry="1.7" opacity="0.10"/>
<ellipse cx="706.4" cy="548.3" rx="1.1" ry="1.7" opacity="0.07"/>
<ellipse cx="1179.0" cy="89.0" rx="1.1" ry="1.7" opacity="0.07"/>
<ellipse cx="1777.8" cy="171.1" rx="1.1" ry="1.7" opacity="0.09"/>
<ellipse cx="620.4" cy="286.2" rx="1.1" ry="1.7" opacity="0.05"/>
<ellipse cx="38.2" cy="903.8" rx="1.1" ry="1.7" opacity="0.10"/>
<ellipse cx="1521.3" cy="768.5" rx="1.1" ry="1.7" opacity="0.11"/>
<ellipse cx="300.9" cy="556.1" rx="1.1" ry="1.7" opacity="0.08"/>
<ellipse cx="1089.8" cy="892.9" rx="1.1" ry="1.7" opacity="0.10"/>
<ellipse cx="1839.1" cy="111.2" rx="1.1" ry="1.7" opacity="0.09"/>
<ellipse cx="1282.6" cy="709.4" rx="1.1" ry="1.7" opacity="0.09"/>
<ellipse cx="1578.6" cy="288.3" rx="1.1" ry="1.7" opacity="0.11"/>
<ellipse cx="771.2" cy="570.3" rx="1.1" ry="1.7" opacity="0.10"/>
<ellipse cx="1336.1" cy="294.8" rx="1.1" ry="1.7" opacity="0.06"/>
<ellipse cx="620.2" cy="596.7" rx="1.1" ry="1.7" opacity="0.11"/>
<ellipse cx="1707.2" cy="381.0" rx="1.1" ry="1.7" opacity="0.07"/>
<ellipse cx="1552.4" cy="270.2" rx="1.1" ry="1.7" opacity="0.07"/>
<ellipse cx="25.0" cy="175.1" rx="1.1" ry="1.7" opacity="0.08"/>
<ellipse cx="1316.6" cy="585.3" rx="1.1" ry="1.7" opacity="0.07"/>
<ellipse cx="1806.1" cy="593.3" rx="1.1" ry="1.7" opacity="0.06"/>
<ellipse cx="128.6" cy="927.0" rx="1.1" ry="1.7" opacity="0.11"/>
<ellipse cx="1747.0" cy="574.8" rx="1.1" ry="1.7" opacity="0.07"/>
<ellipse cx="173.5" cy="245.5" rx="1.1" ry="1.7" opacity="0.06"/>
<ellipse cx="1762.7" cy="849.7" rx="1.1" ry="1.7" opacity="0.10"/>
<ellipse cx="282.4" cy="226.9" rx="1.1" ry="1.7" opacity="0.07"/>
<ellipse cx="1800.1" cy="155.5" rx="1.1" ry="1.7" opacity="0.10"/>
<ellipse cx="1292.6" cy="520.9" rx="1.1" ry="1.7" opacity="0.11"/>
<ellipse cx="498.2" cy="499.2" rx="1.1" ry="1.7" opacity="0.06"/>
<ellipse cx="183.8" cy="30.2" rx="1.1" ry="1.7" opacity="0.07"/>
<ellipse cx="231.2" cy="58.3" rx="1.1" ry="1.7" opacity="0.11"/>
<ellipse cx="548.9" cy="847.5" rx="1.1" ry="1.7" opacity="0.09"/>
<ellipse cx="1388.8" cy="623.7" rx="1.1" ry="1.7" opacity="0.11"/>
<ellipse cx="1668.2" cy="684.9" rx="1.1" ry="1.7" opacity="0.08"/>
<ellipse cx="1317.5" cy="689.0" rx="1.1" ry="1.7" opacity="0.08"/>
<ellipse cx="954.3" cy="146.8" rx="1.1" ry="1.7" opacity="0.10"/>
<ellipse cx="919.5" cy="64.5" rx="1.1" ry="1.7" opacity="0.06"/>
<ellipse cx="1661.2" cy="243.8" rx="1.1" ry="1.7" opacity="0.07"/>
<ellipse cx="1295.4" cy="820.2" rx="1.1" ry="1.7" opacity="0.07"/>
<ellipse cx="734.5" cy="402.8" rx="1.1" ry="1.7" opacity="0.05"/>
<ellipse cx="1664.8" cy="18.1" rx="1.1" ry="1.7" opacity="0.11"/>
<ellipse cx="289.6" cy="149.2" rx="1.1" ry="1.7" opacity="0.10"/>
<ellipse cx="1563.6" cy="220.9" rx="1.1" ry="1.7" opacity="0.08"/>
<ellipse cx="905.3" cy="684.1" rx="1.1" ry="1.7" opacity="0.06"/>
<ellipse cx="1567.6" cy="948.6" rx="1.1" ry="1.7" opacity="0.09"/>
<ellipse cx="1749.4" cy="892.1" rx="1.1" ry="1.7" opacity="0.07"/>
<ellipse cx="1609.4" cy="793.7" rx="1.1" ry="1.7" opacity="0.09"/>
<ellipse cx="203.5" cy="589.5" rx="1.1" ry="1.7" opacity="0.10"/>
<ellipse cx="579.5" cy="615.8" rx="1.1" ry="1.7" opacity="0.10"/>
<ellipse cx="1139.6" cy="35.4" rx="1.1" ry="1.7" opacity="0.09"/>
<ellipse cx="485.5" cy="816.8" rx="1.1" ry="1.7" opacity="0.09"/>
<ellipse cx="583.7" cy="852.7" rx="1.1" ry="1.7" opacity="0.09"/>
<ellipse cx="644.0" cy="794.1" rx="1.1" ry="1.7" opacity="0.10"/>
<ellipse cx="1696.2" cy="840.9" rx="1.1" ry="1.7" opacity="0.09"/>
<ellipse cx="1326.9" cy="575.7" rx="1.1" ry="1.7" opacity="0.08"/>
<ellipse cx="1875.2" cy="336.1" rx="1.1" ry="1.7" opacity="0.05"/>
<ellipse cx="1355.0" cy="474.2" rx="1.1" ry="1.7" opacity="0.08"/>
<ellipse cx="1135.4" cy="237.9" rx="1.1" ry="1.7" opacity="0.06"/>
<ellipse cx="135.5" cy="744.1" rx="1.1" ry="1.7" opacity="0.10"/>
<ellipse cx="1323.1" cy="111.2" rx="1.1" ry="1.7" opacity="0.11"/>
<ellipse cx="1569.9" cy="484.9" rx="1.1" ry="1.7" opacity="0.05"/>
<ellipse cx="1602.5" cy="593.4" rx="1.1" ry="1.7" opacity="0.09"/>
<ellipse cx="34.7" cy="697.8" rx="1.1" ry="1.7" opacity="0.05"/>
<ellipse cx="907.9" cy="137.9" rx="1.1" ry="1.7" opacity="0.07"/>
<ellipse cx="1690.4" cy="712.5" rx="1.1" ry="1.7" opacity="0.10"/>
<ellipse cx="566.1" cy="369.8" rx="1.1" ry="1.7" opacity="0.09"/>
<ellipse cx="64.6" cy="392.5" rx="1.1" ry="1.7" opacity="0.11"/>
<ellipse cx="1431.9" cy="821.3" rx="1.1" ry="1.7" opacity="0.07"/>
<ellipse cx="1311.7" cy="751.0" rx="1.1" ry="1.7" opacity="0.09"/>
<ellipse cx="830.6" cy="166.5" rx="1.1" ry="1.7" opacity="0.05"/>
<ellipse cx="1684.4" cy="887.1" rx="1.1" ry="1.7" opacity="0.07"/>
<ellipse cx="1435.2" cy="387.6" rx="1.1" ry="1.7" opacity="0.09"/>
<ellipse cx="1598.8" cy="305.8" rx="1.1" ry="1.7" opacity="0.09"/>
<ellipse cx="486.1" cy="486.6" rx="1.1" ry="1.7" opacity="0.05"/>
<ellipse cx="500.5" cy="273.4" rx="1.1" ry="1.7" opacity="0.10"/>
<ellipse cx="251.4" cy="721.9" rx="1.1" ry="1.7" opacity="0.06"/>
<ellipse cx="1873.1" cy="158.0" rx="1.1" ry="1.7" opacity="0.06"/>
<ellipse cx="401.8" cy="888.3" rx="1.1" ry="1.7" opacity="0.09"/>
<ellipse cx="1691.2" cy="475.3" rx="1.1" ry="1.7" opacity="0.06"/>
<ellipse cx="646.6" cy="433.8" rx="1.1" ry="1.7" opacity="0.11"/>
<ellipse cx="316.1" cy="232.4" rx="1.1" ry="1.7" opacity="0.10"/>
<ellipse cx="216.5" cy="924.8" rx="1.1" ry="1.7" opacity="0.07"/>
<ellipse cx="1077.2" cy="628.9" rx="1.1" ry="1.7" opacity="0.10"/>
<ellipse cx="143.8" cy="806.1" rx="1.1" ry="1.7" opacity="0.06"/>
<ellipse cx="1364.0" cy="25.9" rx="1.1" ry="1.7" opacity="0.10"/>
<ellipse cx="343.9" cy="196.3" rx="1.1" ry="1.7" opacity="0.05"/>
<ellipse cx="616.1" cy="312.4" rx="1.1" ry="1.7" opacity="0.11"/>
<ellipse cx="1152.3" cy="346.8" rx="1.1" ry="1.7" opacity="0.11"/>
<ellipse cx="326.4" cy="204.7" rx="1.1" ry="1.7" opacity="0.11"/>
<ellipse cx="1806.8" cy="651.3" rx="1.1" ry="1.7" opacity="0.11"/>
<ellipse cx="109.2" cy="860.2" rx="1.1" ry="1.7" opacity="0.09"/>
<ellipse cx="1268.7" cy="802.7" rx="1.1" ry="1.7" opacity="0.06"/>
<ellipse cx="379.0" cy="131.2" rx="1.1" ry="1.7" opacity="0.08"/>
<ellipse cx="1037.2" cy="514.7" rx="1.1" ry="1.7" opacity="0.07"/>
<ellipse cx="1412.3" cy="798.2" rx="1.1" ry="1.7" opacity="0.10"/>
<ellipse cx="71.9" cy="145.6" rx="1.1" ry="1.7" opacity="0.06"/>
<ellipse cx="452.5" cy="546.3" rx="1.1" ry="1.7" opacity="0.06"/>
<ellipse cx="1186.2" cy="327.6" rx="1.1" ry="1.7" opacity="0.07"/>
<ellipse cx="1344.6" cy="899.0" rx="1.1" ry="1.7" opacity="0.06"/>
<ellipse cx="661.3" cy="934.4" rx="1.1" ry="1.7" opacity="0.06"/>
<ellipse cx="51.2" cy="182.0" rx="1.1" ry="1.7" opacity="0.10"/>
<ellipse cx="1388.7" cy="893.4" rx="1.1" ry="1.7" opacity="0.08"/>
<ellipse cx="78.5" cy="291.5" rx="1.1" ry="1.7" opacity="0.09"/>
<ellipse cx="746.0" cy="132.9" rx="1.1" ry="1.7" opacity="0.07"/>
<ellipse cx="880.7" cy="338.8" rx="1.1" ry="1.7" opacity="0.08"/>
<ellipse cx="258.8" cy="28.3" rx="1.1" ry="1.7" opacity="0.10"/>
<ellipse cx="1390.5" cy="398.3" rx="1.1" ry="1.7" opacity="0.06"/>
<ellipse cx="561.2" cy="531.5" rx="1.1" ry="1.7" opacity="0.10"/>
<ellipse cx="914.6" cy="927.0" rx="1.1" ry="1.7" opacity="0.08"/>
<ellipse cx="343.9" cy="585.5" rx="1.1" ry="1.7" opacity="0.09"/>
<ellipse cx="1137.9" cy="689.9" rx="1.1" ry="1.7" opacity="0.05"/>
<ellipse cx="535.7" cy="216.8" rx="5" ry="7.6" opacity="0.95"/>
</g>
<defs>
<clipPath id="moonclip"><ellipse cx="1549" cy="475" rx="271.5" ry="245.5" transform="rotate(6.3 1549 475)"/></clipPath>
<filter id="mb3" x="-20%" y="-20%" width="140%" height="140%"><feGaussianBlur stdDeviation="2.6"/></filter>
<filter id="mb8" x="-30%" y="-30%" width="160%" height="160%"><feGaussianBlur stdDeviation="8"/></filter>
<filter id="mb16" x="-40%" y="-40%" width="180%" height="180%"><feGaussianBlur stdDeviation="14"/></filter>
<filter id="mb2" x="-20%" y="-20%" width="140%" height="140%"><feGaussianBlur stdDeviation="1.3"/></filter>
<filter id="moontex" x="0" y="0" width="100%" height="100%" color-interpolation-filters="sRGB">
<feTurbulence type="fractalNoise" baseFrequency="0.55" numOctaves="3" seed="11" result="n"/>
<feDiffuseLighting in="n" surfaceScale="1.9" diffuseConstant="0.59" lighting-color="#ffffff" result="l"><feDistantLight azimuth="15" elevation="58"/></feDiffuseLighting>
<feColorMatrix in="l" type="matrix" values="0.33 0.33 0.33 0 0  0.33 0.33 0.33 0 0  0.33 0.33 0.33 0 0  0 0 0 1 0"/>
</filter>
<filter id="moonblotch" x="0" y="0" width="100%" height="100%" color-interpolation-filters="sRGB">
<feTurbulence type="fractalNoise" baseFrequency="0.035" numOctaves="3" seed="5"/>
<feColorMatrix type="matrix" values="0.4 0.4 0.4 0 -0.1  0.4 0.4 0.4 0 -0.1  0.4 0.4 0.4 0 -0.1  0 0 0 0 1"/>
</filter>
<radialGradient id="moonshade" gradientUnits="userSpaceOnUse" cx="1700" cy="475" r="440">
<stop offset="0" stop-color="#000" stop-opacity="0"/>
<stop offset="0.114" stop-color="#000" stop-opacity="0"/>
<stop offset="0.341" stop-color="#000" stop-opacity="0.08"/>
<stop offset="0.591" stop-color="#000" stop-opacity="0.24"/>
<stop offset="0.682" stop-color="#000" stop-opacity="0.35"/>
<stop offset="0.739" stop-color="#000" stop-opacity="0.48"/>
<stop offset="0.791" stop-color="#000" stop-opacity="0.84"/>
<stop offset="0.84" stop-color="#000" stop-opacity="0.835"/>
<stop offset="0.93" stop-color="#000" stop-opacity="0.79"/>
<stop offset="1" stop-color="#000" stop-opacity="0.77"/>
</radialGradient>
<radialGradient id="moonlight" gradientUnits="userSpaceOnUse" cx="1670" cy="490" r="300">
<stop offset="0" stop-color="#fffdf0" stop-opacity="0.24"/>
<stop offset="0.5" stop-color="#fffdf0" stop-opacity="0.12"/>
<stop offset="1" stop-color="#fffdf0" stop-opacity="0"/>
</radialGradient>
</defs>
<g clip-path="url(#moonclip)">
<rect x="1270" y="220" width="560" height="510" fill="#8c8980"/>
<g filter="url(#mb3)"><path d="M1619.7 262.0C1616.1 268.2 1624.8 283.7 1625.2 292.4C1625.7 301.1 1621.0 306.6 1622.4 314.4C1623.8 322.2 1632.0 331.8 1633.4 339.1C1634.8 346.4 1628.0 352.4 1630.7 358.4C1633.5 364.3 1644.9 367.5 1649.9 374.8C1654.9 382.1 1657.2 394.1 1660.9 402.3C1664.6 410.6 1666.4 418.4 1671.9 424.3C1677.4 430.2 1687.1 434.1 1693.8 438.0C1700.5 441.9 1707.0 442.9 1712.0 448.0C1717.0 453.1 1720.4 461.3 1724.0 468.8C1727.6 476.3 1730.5 485.1 1733.8 493.2C1737.1 501.3 1740.7 510.3 1743.6 517.6C1746.5 524.9 1747.3 530.7 1751.0 537.2C1754.7 543.7 1760.7 551.8 1765.6 556.7C1770.5 561.6 1775.8 566.2 1780.2 566.5C1784.6 566.8 1788.5 565.0 1792.1 558.4C1795.7 551.9 1799.4 537.9 1801.9 527.4C1804.3 516.8 1805.9 506.0 1806.7 495.3C1807.4 484.5 1807.4 473.6 1806.5 462.8C1805.6 452.0 1803.2 441.4 1801.2 430.6C1799.3 419.7 1798.5 408.4 1794.9 397.8C1791.3 387.3 1785.6 377.2 1779.8 367.4C1774.0 357.6 1767.2 348.3 1760.3 339.1C1753.3 329.9 1746.3 320.4 1738.0 312.1C1729.7 303.8 1720.2 296.3 1710.5 289.3C1700.8 282.4 1690.5 275.9 1679.8 270.2C1669.2 264.5 1656.6 256.5 1646.6 255.1C1636.6 253.8 1623.3 255.8 1619.7 262.0Z" fill="#656460" opacity="0.88"/></g>
<g filter="url(#mb3)" fill="#a09e96" opacity="0.3"><path d="M1652 340q10 -8 18 4q6 14 -4 22q10 6 16 20q-8 4 -14 -6q-12 -10 -16 -40z"/><ellipse cx="1700" cy="395" rx="10" ry="5" transform="rotate(40 1700 395)"/><ellipse cx="1742" cy="400" rx="22" ry="4" transform="rotate(62 1742 400)"/><ellipse cx="1785" cy="470" rx="7" ry="24" transform="rotate(-8 1785 470)"/></g>
<g filter="url(#mb16)" fill="#dad8cc">
<path d="M1640 420L1690 432L1722 470L1742 520L1748 560L1730 610L1700 625L1680 590L1690 540L1670 480Z" opacity="0.66"/>
<ellipse cx="1600" cy="470" rx="90" ry="45" opacity="0.25"/>
<ellipse cx="1640" cy="640" rx="90" ry="50" opacity="0.2"/>
<ellipse cx="1745" cy="620" rx="40" ry="25" transform="rotate(-40 1745 620)" opacity="0.45"/>
</g>
<g filter="url(#mb2)" fill="#61605c">
<path d="M1555.0 570.0C1555.7 566.3 1558.7 561.3 1562.0 560.0C1565.3 558.7 1571.5 560.8 1575.0 562.0C1578.5 563.2 1579.8 566.3 1583.0 567.0C1586.2 567.7 1591.7 564.2 1594.0 566.0C1596.3 567.8 1596.8 573.8 1597.0 578.0C1597.2 582.2 1597.0 588.0 1595.0 591.0C1593.0 594.0 1588.5 595.5 1585.0 596.0C1581.5 596.5 1577.2 595.5 1574.0 594.0C1570.8 592.5 1568.7 589.0 1566.0 587.0C1563.3 585.0 1559.8 584.8 1558.0 582.0C1556.2 579.2 1554.3 573.7 1555.0 570.0Z" opacity="0.8"/>
<ellipse cx="1708.2" cy="511.5" rx="11" ry="9.5" opacity="0.92"/>
<ellipse cx="1681.4" cy="495.7" rx="5" ry="3" opacity="0.8"/>
<path d="M1604.5 527.4C1605.2 529.2 1607.0 533.9 1609.0 538.0C1611.0 542.1 1614.5 547.8 1616.7 551.8C1618.9 555.8 1620.0 558.8 1622.0 562.0C1624.0 565.2 1627.8 569.8 1628.9 571.3" fill="none" stroke="#61605c" stroke-width="3.2" opacity="0.75"/>
<path d="M1590.0 532.0C1591.3 531.7 1595.3 529.7 1598.0 530.0C1600.7 530.3 1604.7 533.3 1606.0 534.0" fill="none" stroke="#61605c" stroke-width="2" opacity="0.55"/>
<path d="M1636.0 536.0C1637.0 535.5 1640.3 532.3 1642.0 533.0C1643.7 533.7 1645.8 537.8 1646.0 540.0C1646.2 542.2 1642.5 544.5 1643.0 546.0C1643.5 547.5 1648.0 548.5 1649.0 549.0" fill="none" stroke="#61605c" stroke-width="2.2" opacity="0.75"/>
<ellipse cx="1648.4" cy="566.5" rx="2" ry="4.5" transform="rotate(-20 1648.4 566.5)" opacity="0.6"/>
<ellipse cx="1704.6" cy="561.6" rx="3.6" ry="3" opacity="0.65"/><ellipse cx="1697.2" cy="549.4" rx="3" ry="2" opacity="0.5"/>
<ellipse cx="1560.5" cy="612.8" rx="13" ry="5" transform="rotate(20 1560.5 612.8)" opacity="0.45"/>
<ellipse cx="1700" cy="633" rx="8" ry="3" transform="rotate(-30 1700 633)" opacity="0.4"/><ellipse cx="1690" cy="662" rx="12" ry="4" transform="rotate(-35 1690 662)" opacity="0.45"/>
<ellipse cx="1762" cy="580" rx="5" ry="9" transform="rotate(15 1762 580)" opacity="0.4"/>
</g>
<g filter="url(#mb2)" fill="#f4f2e8">
<ellipse cx="1707" cy="595.7" rx="9" ry="6" opacity="0.8"/>
<ellipse cx="1548.3" cy="466.4" rx="8" ry="4" opacity="0.45"/>
<ellipse cx="1758" cy="374" rx="3.5" ry="3" opacity="0.9"/>
<ellipse cx="1804" cy="445" rx="3.5" ry="11" opacity="0.45"/>
<ellipse cx="1665.5" cy="444.4" rx="3" ry="2.6" opacity="0.8"/>
<ellipse cx="1680" cy="478" rx="2.5" ry="2" opacity="0.7"/>
<ellipse cx="1722" cy="515" rx="2.2" ry="2" opacity="0.7"/>
<ellipse cx="1618" cy="396" rx="3" ry="2.5" opacity="0.4"/>
<ellipse cx="1737" cy="546" rx="3" ry="2.5" opacity="0.6"/>
<ellipse cx="1735" cy="580" rx="2" ry="2" opacity="0.6"/>
<ellipse cx="1430" cy="420" rx="4" ry="3" opacity="0.3"/>
</g>
<defs><linearGradient id="cr" x1="0" y1="0.5" x2="1" y2="0.5"><stop offset="0" stop-color="#fff" stop-opacity="0.55"/><stop offset="0.35" stop-color="#fff" stop-opacity="0.08"/><stop offset="0.6" stop-color="#000" stop-opacity="0.10"/><stop offset="1" stop-color="#000" stop-opacity="0.6"/></linearGradient></defs>
<g fill="url(#cr)" stroke="#d8d6cb" stroke-opacity="0.22" stroke-width="0.5">
<ellipse cx="1367.7" cy="568.4" rx="1.20" ry="1.48" opacity="0.70"/>
<ellipse cx="1395.5" cy="619.0" rx="2.07" ry="2.13" opacity="0.88"/>
<ellipse cx="1552.8" cy="345.1" rx="0.80" ry="0.68" opacity="0.31"/>
<ellipse cx="1596.4" cy="263.1" rx="2.56" ry="1.39" opacity="0.47"/>
<ellipse cx="1478.4" cy="305.2" rx="2.74" ry="2.20" opacity="0.64"/>
<ellipse cx="1749.0" cy="344.6" rx="1.37" ry="1.86" opacity="0.28"/>
<ellipse cx="1764.3" cy="600.4" rx="1.17" ry="1.78" opacity="0.28"/>
<ellipse cx="1500.8" cy="408.7" rx="1.07" ry="1.06" opacity="0.37"/>
<ellipse cx="1547.8" cy="470.8" rx="1.40" ry="1.40" opacity="0.28"/>
<ellipse cx="1398.8" cy="528.6" rx="1.16" ry="1.33" opacity="0.75"/>
<ellipse cx="1466.6" cy="522.8" rx="0.83" ry="0.85" opacity="0.48"/>
<ellipse cx="1700.7" cy="413.4" rx="1.65" ry="1.89" opacity="0.28"/>
<ellipse cx="1412.5" cy="660.1" rx="0.52" ry="0.42" opacity="0.70"/>
<ellipse cx="1716.1" cy="609.8" rx="0.80" ry="0.87" opacity="0.28"/>
<ellipse cx="1435.7" cy="435.4" rx="0.73" ry="0.78" opacity="0.60"/>
<ellipse cx="1461.9" cy="671.4" rx="4.10" ry="2.78" opacity="0.76"/>
<ellipse cx="1538.6" cy="353.1" rx="4.73" ry="4.16" opacity="0.34"/>
<ellipse cx="1393.4" cy="641.4" rx="1.80" ry="1.72" opacity="0.70"/>
<ellipse cx="1605.1" cy="438.6" rx="1.48" ry="1.50" opacity="0.28"/>
<ellipse cx="1445.5" cy="491.9" rx="0.79" ry="0.85" opacity="0.55"/>
<ellipse cx="1601.0" cy="545.8" rx="3.34" ry="3.30" opacity="0.28"/>
<ellipse cx="1417.9" cy="428.6" rx="4.14" ry="4.56" opacity="0.67"/>
<ellipse cx="1521.1" cy="298.3" rx="3.46" ry="2.52" opacity="0.53"/>
<ellipse cx="1346.8" cy="494.0" rx="0.60" ry="0.87" opacity="0.70"/>
<ellipse cx="1397.5" cy="310.7" rx="0.54" ry="0.52" opacity="0.70"/>
<ellipse cx="1664.2" cy="499.6" rx="0.72" ry="0.78" opacity="0.28"/>
<ellipse cx="1753.4" cy="609.9" rx="3.83" ry="5.20" opacity="0.28"/>
<ellipse cx="1373.4" cy="579.1" rx="0.57" ry="0.68" opacity="0.70"/>
<ellipse cx="1448.6" cy="249.6" rx="0.67" ry="0.29" opacity="0.88"/>
<ellipse cx="1768.0" cy="374.2" rx="0.57" ry="0.94" opacity="0.28"/>
<ellipse cx="1658.5" cy="487.7" rx="1.32" ry="1.43" opacity="0.28"/>
<ellipse cx="1471.2" cy="385.5" rx="4.91" ry="4.85" opacity="0.51"/>
<ellipse cx="1721.0" cy="602.9" rx="0.73" ry="0.83" opacity="0.28"/>
<ellipse cx="1518.8" cy="483.6" rx="0.98" ry="0.98" opacity="0.28"/>
<ellipse cx="1514.1" cy="350.6" rx="2.11" ry="1.89" opacity="0.42"/>
<ellipse cx="1671.7" cy="453.3" rx="0.74" ry="0.82" opacity="0.28"/>
<ellipse cx="1542.8" cy="539.9" rx="4.83" ry="4.68" opacity="0.28"/>
<ellipse cx="1539.0" cy="471.0" rx="2.28" ry="2.28" opacity="0.28"/>
<ellipse cx="1702.1" cy="537.4" rx="2.09" ry="2.39" opacity="0.28"/>
<ellipse cx="1745.2" cy="572.9" rx="1.27" ry="1.67" opacity="0.28"/>
<ellipse cx="1776.7" cy="418.9" rx="0.84" ry="1.47" opacity="0.28"/>
<ellipse cx="1448.1" cy="382.4" rx="0.88" ry="0.89" opacity="0.60"/>
<ellipse cx="1579.0" cy="268.1" rx="0.82" ry="0.47" opacity="0.49"/>
<ellipse cx="1681.8" cy="456.5" rx="0.70" ry="0.79" opacity="0.28"/>
<ellipse cx="1660.9" cy="330.3" rx="0.74" ry="0.69" opacity="0.28"/>
<ellipse cx="1648.8" cy="357.3" rx="4.05" ry="3.94" opacity="0.28"/>
<ellipse cx="1416.3" cy="644.9" rx="0.57" ry="0.50" opacity="0.85"/>
<ellipse cx="1386.7" cy="523.2" rx="0.67" ry="0.80" opacity="0.80"/>
<ellipse cx="1372.8" cy="418.2" rx="0.63" ry="0.78" opacity="0.86"/>
<ellipse cx="1550.7" cy="248.3" rx="1.64" ry="0.64" opacity="0.61"/>
<ellipse cx="1574.2" cy="275.5" rx="0.84" ry="0.51" opacity="0.47"/>
<ellipse cx="1764.6" cy="411.1" rx="0.45" ry="0.70" opacity="0.28"/>
<ellipse cx="1566.0" cy="253.2" rx="0.78" ry="0.35" opacity="0.56"/>
<ellipse cx="1578.2" cy="339.8" rx="2.87" ry="2.47" opacity="0.28"/>
<ellipse cx="1684.3" cy="602.6" rx="0.64" ry="0.65" opacity="0.28"/>
<ellipse cx="1721.5" cy="527.4" rx="1.29" ry="1.58" opacity="0.28"/>
<ellipse cx="1619.1" cy="667.0" rx="0.68" ry="0.48" opacity="0.36"/>
<ellipse cx="1556.4" cy="562.6" rx="0.81" ry="0.76" opacity="0.28"/>
<ellipse cx="1547.3" cy="563.9" rx="1.88" ry="1.75" opacity="0.28"/>
<ellipse cx="1571.0" cy="429.9" rx="2.09" ry="2.07" opacity="0.28"/>
<ellipse cx="1563.4" cy="267.5" rx="3.11" ry="1.71" opacity="0.52"/>
<ellipse cx="1372.7" cy="578.1" rx="0.82" ry="0.99" opacity="0.70"/>
<ellipse cx="1740.9" cy="625.9" rx="2.08" ry="2.51" opacity="0.28"/>
<ellipse cx="1396.2" cy="611.6" rx="2.84" ry="2.97" opacity="0.86"/>
<ellipse cx="1490.2" cy="692.4" rx="3.79" ry="1.90" opacity="0.74"/>
<ellipse cx="1611.8" cy="527.7" rx="2.48" ry="2.49" opacity="0.28"/>
<ellipse cx="1569.7" cy="662.8" rx="0.79" ry="0.53" opacity="0.44"/>
<ellipse cx="1579.8" cy="610.6" rx="2.36" ry="2.04" opacity="0.28"/>
<ellipse cx="1475.1" cy="269.7" rx="0.84" ry="0.53" opacity="0.75"/>
<ellipse cx="1571.7" cy="630.0" rx="0.91" ry="0.73" opacity="0.33"/>
<ellipse cx="1640.0" cy="332.7" rx="0.69" ry="0.62" opacity="0.28"/>
<ellipse cx="1562.5" cy="669.4" rx="1.24" ry="0.78" opacity="0.48"/>
<ellipse cx="1408.6" cy="437.7" rx="1.54" ry="1.74" opacity="0.70"/>
<ellipse cx="1686.8" cy="549.2" rx="0.70" ry="0.77" opacity="0.28"/>
<ellipse cx="1483.7" cy="469.9" rx="0.83" ry="0.85" opacity="0.39"/>
<ellipse cx="1527.6" cy="246.5" rx="2.98" ry="1.16" opacity="0.67"/>
<ellipse cx="1714.7" cy="591.4" rx="1.69" ry="1.90" opacity="0.28"/>
<ellipse cx="1483.0" cy="422.7" rx="0.77" ry="0.77" opacity="0.42"/>
<ellipse cx="1594.3" cy="512.6" rx="5.26" ry="5.28" opacity="0.28"/>
<ellipse cx="1401.6" cy="590.2" rx="2.32" ry="2.48" opacity="0.81"/>
<ellipse cx="1529.1" cy="420.6" rx="1.73" ry="1.70" opacity="0.28"/>
<ellipse cx="1655.0" cy="654.7" rx="1.99" ry="1.60" opacity="0.28"/>
<ellipse cx="1414.2" cy="613.7" rx="2.18" ry="2.16" opacity="0.80"/>
<ellipse cx="1445.5" cy="540.8" rx="0.73" ry="0.76" opacity="0.58"/>
<ellipse cx="1422.1" cy="564.7" rx="0.73" ry="0.77" opacity="0.70"/>
<ellipse cx="1390.6" cy="473.8" rx="1.83" ry="2.25" opacity="0.77"/>
<ellipse cx="1651.4" cy="393.9" rx="1.66" ry="1.70" opacity="0.28"/>
<ellipse cx="1503.0" cy="289.6" rx="3.46" ry="2.46" opacity="0.61"/>
<ellipse cx="1601.5" cy="447.3" rx="1.21" ry="1.22" opacity="0.28"/>
<ellipse cx="1481.4" cy="542.0" rx="1.69" ry="1.69" opacity="0.44"/>
<ellipse cx="1466.4" cy="600.4" rx="1.59" ry="1.49" opacity="0.59"/>
<ellipse cx="1557.5" cy="339.0" rx="2.83" ry="2.38" opacity="0.32"/>
<ellipse cx="1627.9" cy="452.8" rx="0.79" ry="0.82" opacity="0.28"/>
<ellipse cx="1595.2" cy="271.7" rx="1.08" ry="0.65" opacity="0.44"/>
<ellipse cx="1498.4" cy="603.3" rx="0.77" ry="0.69" opacity="0.48"/>
<ellipse cx="1571.1" cy="270.8" rx="0.80" ry="0.46" opacity="0.49"/>
<ellipse cx="1591.7" cy="631.5" rx="1.22" ry="1.00" opacity="0.29"/>
<ellipse cx="1451.1" cy="678.4" rx="0.70" ry="0.44" opacity="0.81"/>
<ellipse cx="1593.3" cy="318.6" rx="4.05" ry="3.30" opacity="0.29"/>
<ellipse cx="1669.5" cy="490.1" rx="0.72" ry="0.80" opacity="0.28"/>
<ellipse cx="1639.2" cy="551.7" rx="0.91" ry="0.92" opacity="0.28"/>
<ellipse cx="1709.4" cy="599.7" rx="0.58" ry="0.63" opacity="0.28"/>
<ellipse cx="1481.6" cy="654.7" rx="0.91" ry="0.69" opacity="0.66"/>
<ellipse cx="1619.5" cy="462.0" rx="1.38" ry="1.42" opacity="0.28"/>
<ellipse cx="1385.9" cy="472.3" rx="0.70" ry="0.88" opacity="0.78"/>
<ellipse cx="1509.5" cy="327.5" rx="0.76" ry="0.64" opacity="0.49"/>
<ellipse cx="1522.9" cy="591.3" rx="1.29" ry="1.16" opacity="0.38"/>
<ellipse cx="1430.4" cy="521.4" rx="2.89" ry="3.11" opacity="0.62"/>
<ellipse cx="1539.2" cy="390.6" rx="3.88" ry="3.67" opacity="0.28"/>
<ellipse cx="1357.3" cy="563.2" rx="1.73" ry="2.26" opacity="0.70"/>
<ellipse cx="1456.2" cy="415.9" rx="4.66" ry="4.80" opacity="0.53"/>
<ellipse cx="1493.1" cy="537.0" rx="0.82" ry="0.82" opacity="0.39"/>
<ellipse cx="1710.0" cy="530.4" rx="1.96" ry="2.30" opacity="0.28"/>
<ellipse cx="1549.6" cy="574.2" rx="1.28" ry="1.17" opacity="0.28"/>
<ellipse cx="1634.3" cy="440.8" rx="1.83" ry="1.90" opacity="0.28"/>
<ellipse cx="1348.4" cy="419.1" rx="4.16" ry="5.75" opacity="0.70"/>
<ellipse cx="1525.2" cy="604.6" rx="0.78" ry="0.68" opacity="0.40"/>
<ellipse cx="1665.3" cy="432.4" rx="0.88" ry="0.95" opacity="0.28"/>
<ellipse cx="1618.1" cy="382.8" rx="2.03" ry="1.99" opacity="0.28"/>
<ellipse cx="1621.9" cy="631.7" rx="0.76" ry="0.65" opacity="0.28"/>
<ellipse cx="1368.8" cy="399.2" rx="0.59" ry="0.72" opacity="0.70"/>
<ellipse cx="1714.9" cy="314.4" rx="0.88" ry="0.90" opacity="0.28"/>
<ellipse cx="1738.7" cy="534.8" rx="0.56" ry="0.73" opacity="0.28"/>
<ellipse cx="1445.8" cy="353.4" rx="0.71" ry="0.69" opacity="0.66"/>
<ellipse cx="1708.6" cy="649.6" rx="1.50" ry="1.41" opacity="0.28"/>
<ellipse cx="1410.8" cy="387.0" rx="0.72" ry="0.78" opacity="0.74"/>
<ellipse cx="1368.8" cy="499.0" rx="0.60" ry="0.78" opacity="0.86"/>
<ellipse cx="1446.4" cy="298.7" rx="1.42" ry="1.16" opacity="0.76"/>
<ellipse cx="1494.7" cy="445.8" rx="2.47" ry="2.50" opacity="0.36"/>
<ellipse cx="1440.3" cy="604.7" rx="0.69" ry="0.67" opacity="0.69"/>
<ellipse cx="1501.6" cy="383.2" rx="0.81" ry="0.78" opacity="0.40"/>
<ellipse cx="1570.3" cy="286.1" rx="1.29" ry="0.85" opacity="0.44"/>
<ellipse cx="1408.7" cy="397.0" rx="0.72" ry="0.78" opacity="0.73"/>
<ellipse cx="1636.0" cy="461.8" rx="2.56" ry="2.68" opacity="0.28"/>
<ellipse cx="1449.6" cy="532.0" rx="2.28" ry="2.37" opacity="0.56"/>
<ellipse cx="1687.4" cy="540.3" rx="3.66" ry="4.03" opacity="0.28"/>
<ellipse cx="1565.3" cy="674.4" rx="0.77" ry="0.47" opacity="0.49"/>
<ellipse cx="1422.4" cy="598.1" rx="0.84" ry="0.84" opacity="0.74"/>
<ellipse cx="1413.2" cy="355.5" rx="2.86" ry="2.95" opacity="0.77"/>
<ellipse cx="1620.0" cy="285.9" rx="0.74" ry="0.52" opacity="0.35"/>
<ellipse cx="1388.6" cy="493.6" rx="1.72" ry="2.10" opacity="0.78"/>
<ellipse cx="1579.5" cy="706.3" rx="2.54" ry="0.92" opacity="0.57"/>
<ellipse cx="1512.0" cy="435.5" rx="2.03" ry="2.03" opacity="0.30"/>
<ellipse cx="1420.0" cy="569.7" rx="0.88" ry="0.93" opacity="0.71"/>
<ellipse cx="1436.8" cy="414.4" rx="0.73" ry="0.77" opacity="0.61"/>
<ellipse cx="1620.5" cy="650.8" rx="1.05" ry="0.82" opacity="0.30"/>
<ellipse cx="1475.1" cy="413.1" rx="0.87" ry="0.88" opacity="0.46"/>
<ellipse cx="1379.0" cy="393.7" rx="2.16" ry="2.56" opacity="0.85"/>
<ellipse cx="1493.9" cy="632.8" rx="1.04" ry="0.85" opacity="0.57"/>
<ellipse cx="1521.6" cy="427.6" rx="4.79" ry="4.75" opacity="0.28"/>
<ellipse cx="1643.6" cy="329.6" rx="1.08" ry="0.98" opacity="0.28"/>
<ellipse cx="1633.2" cy="499.2" rx="2.76" ry="2.87" opacity="0.28"/>
<ellipse cx="1451.6" cy="278.9" rx="0.78" ry="0.55" opacity="0.79"/>
<ellipse cx="1721.9" cy="603.7" rx="2.53" ry="2.86" opacity="0.28"/>
<ellipse cx="1501.8" cy="546.0" rx="0.77" ry="0.76" opacity="0.37"/>
<ellipse cx="1663.1" cy="359.5" rx="0.97" ry="0.97" opacity="0.28"/>
<ellipse cx="1710.5" cy="438.9" rx="2.21" ry="2.66" opacity="0.28"/>
<ellipse cx="1701.0" cy="416.0" rx="0.74" ry="0.85" opacity="0.28"/>
<ellipse cx="1475.0" cy="616.8" rx="2.30" ry="2.04" opacity="0.59"/>
<ellipse cx="1520.8" cy="702.1" rx="0.74" ry="0.29" opacity="0.69"/>
<ellipse cx="1639.4" cy="675.5" rx="3.64" ry="2.45" opacity="0.37"/>
<ellipse cx="1457.2" cy="340.9" rx="0.74" ry="0.69" opacity="0.64"/>
<ellipse cx="1353.9" cy="498.0" rx="3.02" ry="4.23" opacity="0.70"/>
<ellipse cx="1620.0" cy="489.7" rx="4.72" ry="4.86" opacity="0.28"/>
<ellipse cx="1545.0" cy="673.5" rx="2.53" ry="1.50" opacity="0.54"/>
<ellipse cx="1504.3" cy="340.7" rx="0.81" ry="0.71" opacity="0.48"/>
<ellipse cx="1369.5" cy="588.2" rx="0.52" ry="0.62" opacity="0.70"/>
<ellipse cx="1603.2" cy="590.9" rx="1.38" ry="1.29" opacity="0.28"/>
<ellipse cx="1431.0" cy="274.8" rx="1.07" ry="0.74" opacity="0.87"/>
<ellipse cx="1652.0" cy="639.2" rx="0.68" ry="0.59" opacity="0.28"/>
<ellipse cx="1486.3" cy="398.8" rx="0.92" ry="0.91" opacity="0.44"/>
<ellipse cx="1571.4" cy="291.9" rx="4.73" ry="3.27" opacity="0.42"/>
<ellipse cx="1598.5" cy="384.0" rx="2.11" ry="2.03" opacity="0.28"/>
<ellipse cx="1682.8" cy="379.9" rx="1.88" ry="2.00" opacity="0.28"/>
<ellipse cx="1603.0" cy="312.2" rx="0.73" ry="0.59" opacity="0.29"/>
<ellipse cx="1739.5" cy="420.2" rx="0.89" ry="1.19" opacity="0.28"/>
<ellipse cx="1419.0" cy="570.5" rx="2.30" ry="2.43" opacity="0.72"/>
<ellipse cx="1466.7" cy="462.4" rx="2.68" ry="2.79" opacity="0.46"/>
<ellipse cx="1542.2" cy="540.7" rx="3.45" ry="3.33" opacity="0.28"/>
<ellipse cx="1639.9" cy="335.8" rx="0.70" ry="0.64" opacity="0.28"/>
<ellipse cx="1630.4" cy="544.0" rx="4.33" ry="4.38" opacity="0.28"/>
<ellipse cx="1566.5" cy="465.2" rx="0.84" ry="0.85" opacity="0.28"/>
<ellipse cx="1635.8" cy="339.0" rx="3.74" ry="3.43" opacity="0.28"/>
<ellipse cx="1505.8" cy="698.9" rx="0.77" ry="0.34" opacity="0.71"/>
<ellipse cx="1390.8" cy="632.2" rx="0.52" ry="0.52" opacity="0.70"/>
<ellipse cx="1463.4" cy="499.6" rx="3.53" ry="3.68" opacity="0.48"/>
<ellipse cx="1565.6" cy="541.9" rx="1.50" ry="1.45" opacity="0.28"/>
<ellipse cx="1629.4" cy="383.8" rx="7.74" ry="7.65" opacity="0.28"/>
<ellipse cx="1590.4" cy="622.4" rx="0.76" ry="0.64" opacity="0.28"/>
<ellipse cx="1524.6" cy="487.3" rx="3.24" ry="3.25" opacity="0.28"/>
<ellipse cx="1515.0" cy="546.6" rx="0.79" ry="0.77" opacity="0.32"/>
<ellipse cx="1559.5" cy="249.9" rx="1.15" ry="0.47" opacity="0.59"/>
<ellipse cx="1534.0" cy="560.4" rx="0.79" ry="0.75" opacity="0.28"/>
<ellipse cx="1673.9" cy="398.4" rx="0.69" ry="0.74" opacity="0.28"/>
<ellipse cx="1515.5" cy="571.0" rx="1.16" ry="1.09" opacity="0.36"/>
<ellipse cx="1556.6" cy="708.7" rx="3.01" ry="0.96" opacity="0.62"/>
<ellipse cx="1544.7" cy="528.9" rx="0.96" ry="0.94" opacity="0.28"/>
<ellipse cx="1759.3" cy="626.2" rx="0.99" ry="1.46" opacity="0.28"/>
<ellipse cx="1535.4" cy="711.5" rx="0.77" ry="0.21" opacity="0.68"/>
<ellipse cx="1588.7" cy="631.7" rx="1.22" ry="1.00" opacity="0.30"/>
<ellipse cx="1481.3" cy="562.1" rx="2.74" ry="2.69" opacity="0.47"/>
<ellipse cx="1656.1" cy="683.9" rx="0.57" ry="0.35" opacity="0.38"/>
<ellipse cx="1494.2" cy="535.0" rx="0.77" ry="0.77" opacity="0.39"/>
<ellipse cx="1544.8" cy="530.3" rx="0.80" ry="0.78" opacity="0.28"/>
<ellipse cx="1702.6" cy="646.5" rx="3.37" ry="3.15" opacity="0.28"/>
<ellipse cx="1628.9" cy="398.7" rx="2.59" ry="2.59" opacity="0.28"/>
<ellipse cx="1617.2" cy="537.3" rx="4.99" ry="5.01" opacity="0.28"/>
<ellipse cx="1472.3" cy="424.0" rx="2.16" ry="2.20" opacity="0.46"/>
<ellipse cx="1582.1" cy="451.4" rx="0.87" ry="0.88" opacity="0.28"/>
<ellipse cx="1514.1" cy="711.0" rx="0.71" ry="0.20" opacity="0.73"/>
<ellipse cx="1624.6" cy="454.8" rx="0.77" ry="0.79" opacity="0.28"/>
<ellipse cx="1745.5" cy="382.4" rx="0.72" ry="0.96" opacity="0.28"/>
<ellipse cx="1513.2" cy="655.1" rx="2.17" ry="1.56" opacity="0.57"/>
<ellipse cx="1386.5" cy="588.8" rx="0.57" ry="0.64" opacity="0.86"/>
<ellipse cx="1604.5" cy="448.5" rx="0.78" ry="0.79" opacity="0.28"/>
<ellipse cx="1584.7" cy="299.9" rx="4.73" ry="3.49" opacity="0.37"/>
<ellipse cx="1514.4" cy="369.3" rx="0.93" ry="0.87" opacity="0.38"/>
<ellipse cx="1476.4" cy="523.0" rx="1.12" ry="1.14" opacity="0.44"/>
<ellipse cx="1541.4" cy="259.8" rx="0.87" ry="0.43" opacity="0.60"/>
<ellipse cx="1695.1" cy="440.7" rx="0.86" ry="0.99" opacity="0.28"/>
<ellipse cx="1428.5" cy="499.7" rx="0.73" ry="0.80" opacity="0.62"/>
<ellipse cx="1571.3" cy="550.8" rx="3.66" ry="3.53" opacity="0.28"/>
<ellipse cx="1796.9" cy="447.8" rx="0.37" ry="0.89" opacity="0.28"/>
<ellipse cx="1441.9" cy="287.5" rx="0.63" ry="0.48" opacity="0.80"/>
<ellipse cx="1566.0" cy="530.2" rx="4.32" ry="4.24" opacity="0.28"/>
<ellipse cx="1395.0" cy="616.1" rx="1.13" ry="1.17" opacity="0.87"/>
<ellipse cx="1471.7" cy="533.8" rx="4.32" ry="4.39" opacity="0.47"/>
<ellipse cx="1729.1" cy="350.6" rx="0.81" ry="0.96" opacity="0.28"/>
<ellipse cx="1518.8" cy="295.3" rx="0.78" ry="0.56" opacity="0.55"/>
<ellipse cx="1721.8" cy="297.8" rx="2.25" ry="2.18" opacity="0.28"/>
<ellipse cx="1585.2" cy="651.2" rx="1.13" ry="0.84" opacity="0.37"/>
<ellipse cx="1581.4" cy="647.8" rx="0.97" ry="0.73" opacity="0.37"/>
<ellipse cx="1521.0" cy="405.6" rx="0.93" ry="0.90" opacity="0.30"/>
<ellipse cx="1550.4" cy="701.0" rx="1.56" ry="0.62" opacity="0.61"/>
<ellipse cx="1375.5" cy="410.8" rx="1.13" ry="1.38" opacity="0.85"/>
<ellipse cx="1424.7" cy="392.0" rx="1.18" ry="1.24" opacity="0.68"/>
<ellipse cx="1640.9" cy="584.0" rx="0.71" ry="0.70" opacity="0.28"/>
<ellipse cx="1690.9" cy="680.9" rx="1.19" ry="0.77" opacity="0.35"/>
<ellipse cx="1667.7" cy="453.3" rx="1.39" ry="1.52" opacity="0.28"/>
<ellipse cx="1498.1" cy="441.3" rx="4.14" ry="4.18" opacity="0.35"/>
<ellipse cx="1753.5" cy="533.6" rx="0.93" ry="1.31" opacity="0.28"/>
<ellipse cx="1599.4" cy="273.7" rx="0.75" ry="0.46" opacity="0.43"/>
<ellipse cx="1665.7" cy="436.3" rx="2.20" ry="2.37" opacity="0.28"/>
<ellipse cx="1556.7" cy="437.1" rx="2.87" ry="2.84" opacity="0.28"/>
<ellipse cx="1575.0" cy="452.2" rx="1.72" ry="1.72" opacity="0.28"/>
<ellipse cx="1573.3" cy="713.7" rx="0.74" ry="0.19" opacity="0.61"/>
<ellipse cx="1803.9" cy="449.5" rx="0.26" ry="0.75" opacity="0.28"/>
<ellipse cx="1561.6" cy="375.6" rx="1.89" ry="1.75" opacity="0.28"/>
<ellipse cx="1431.4" cy="671.4" rx="1.13" ry="0.79" opacity="0.86"/>
<ellipse cx="1395.5" cy="650.4" rx="2.11" ry="1.91" opacity="0.70"/>
<ellipse cx="1598.8" cy="684.0" rx="3.49" ry="2.03" opacity="0.46"/>
<ellipse cx="1462.3" cy="526.0" rx="0.86" ry="0.89" opacity="0.50"/>
<ellipse cx="1578.8" cy="655.5" rx="3.71" ry="2.65" opacity="0.40"/>
<ellipse cx="1388.5" cy="393.9" rx="0.62" ry="0.71" opacity="0.82"/>
<ellipse cx="1363.7" cy="376.5" rx="1.93" ry="2.38" opacity="0.70"/>
<ellipse cx="1534.2" cy="527.1" rx="3.17" ry="3.12" opacity="0.28"/>
<ellipse cx="1503.6" cy="455.4" rx="2.81" ry="2.83" opacity="0.32"/>
<ellipse cx="1443.7" cy="657.5" rx="2.92" ry="2.27" opacity="0.79"/>
<ellipse cx="1465.1" cy="397.7" rx="0.74" ry="0.75" opacity="0.52"/>
<ellipse cx="1415.1" cy="361.0" rx="1.75" ry="1.81" opacity="0.76"/>
<ellipse cx="1372.6" cy="569.3" rx="2.77" ry="3.35" opacity="0.70"/>
<ellipse cx="1353.1" cy="546.6" rx="1.68" ry="2.28" opacity="0.70"/>
<ellipse cx="1490.1" cy="619.5" rx="1.34" ry="1.16" opacity="0.55"/>
<ellipse cx="1551.5" cy="235.2" rx="4.80" ry="1.08" opacity="0.66"/>
<ellipse cx="1577.0" cy="660.6" rx="1.00" ry="0.69" opacity="0.42"/>
<ellipse cx="1362.1" cy="447.9" rx="1.70" ry="2.26" opacity="0.70"/>
<ellipse cx="1449.1" cy="636.1" rx="0.66" ry="0.57" opacity="0.72"/>
<ellipse cx="1795.7" cy="537.8" rx="0.37" ry="0.86" opacity="0.28"/>
<ellipse cx="1376.4" cy="579.4" rx="0.55" ry="0.65" opacity="0.70"/>
<ellipse cx="1365.0" cy="513.5" rx="0.69" ry="0.90" opacity="0.88"/>
<ellipse cx="1678.7" cy="336.5" rx="1.77" ry="1.73" opacity="0.28"/>
<ellipse cx="1376.0" cy="432.7" rx="2.17" ry="2.68" opacity="0.83"/>
<ellipse cx="1373.6" cy="561.0" rx="2.04" ry="2.48" opacity="0.88"/>
<ellipse cx="1485.7" cy="294.0" rx="0.89" ry="0.67" opacity="0.65"/>
<ellipse cx="1470.9" cy="698.3" rx="0.72" ry="0.30" opacity="0.81"/>
<ellipse cx="1539.6" cy="716.0" rx="1.92" ry="0.44" opacity="0.69"/>
<ellipse cx="1387.0" cy="444.4" rx="1.74" ry="2.10" opacity="0.79"/>
<ellipse cx="1588.7" cy="536.8" rx="0.78" ry="0.77" opacity="0.28"/>
<ellipse cx="1599.1" cy="327.8" rx="2.22" ry="1.89" opacity="0.28"/>
<ellipse cx="1658.0" cy="540.1" rx="3.20" ry="3.35" opacity="0.28"/>
<ellipse cx="1528.7" cy="647.7" rx="1.46" ry="1.07" opacity="0.50"/>
<ellipse cx="1749.0" cy="588.7" rx="0.47" ry="0.62" opacity="0.28"/>
<ellipse cx="1636.7" cy="637.5" rx="3.58" ry="3.04" opacity="0.28"/>
<ellipse cx="1535.7" cy="258.7" rx="0.78" ry="0.39" opacity="0.61"/>
<ellipse cx="1771.0" cy="611.2" rx="0.38" ry="0.66" opacity="0.28"/>
<ellipse cx="1495.7" cy="255.4" rx="0.77" ry="0.38" opacity="0.73"/>
<ellipse cx="1733.4" cy="449.1" rx="1.60" ry="2.11" opacity="0.28"/>
<ellipse cx="1711.0" cy="475.3" rx="0.64" ry="0.80" opacity="0.28"/>
<ellipse cx="1429.3" cy="394.8" rx="1.39" ry="1.46" opacity="0.66"/>
<ellipse cx="1434.8" cy="311.5" rx="1.92" ry="1.69" opacity="0.77"/>
<ellipse cx="1622.9" cy="653.1" rx="1.01" ry="0.78" opacity="0.30"/>
<ellipse cx="1617.8" cy="634.8" rx="0.97" ry="0.81" opacity="0.28"/>
<ellipse cx="1542.3" cy="414.4" rx="0.80" ry="0.78" opacity="0.28"/>
<ellipse cx="1434.4" cy="464.2" rx="2.93" ry="3.20" opacity="0.59"/>
<ellipse cx="1662.0" cy="369.7" rx="0.70" ry="0.71" opacity="0.28"/>
<ellipse cx="1564.8" cy="337.1" rx="2.60" ry="2.19" opacity="0.30"/>
<ellipse cx="1501.3" cy="290.8" rx="0.74" ry="0.53" opacity="0.61"/>
<ellipse cx="1546.9" cy="495.9" rx="2.47" ry="2.46" opacity="0.28"/>
<ellipse cx="1560.4" cy="406.3" rx="1.24" ry="1.20" opacity="0.28"/>
<ellipse cx="1373.4" cy="583.4" rx="0.73" ry="0.86" opacity="0.70"/>
<ellipse cx="1491.7" cy="387.1" rx="0.76" ry="0.74" opacity="0.43"/>
<ellipse cx="1611.9" cy="625.2" rx="3.02" ry="2.60" opacity="0.28"/>
<ellipse cx="1400.8" cy="542.9" rx="0.69" ry="0.78" opacity="0.76"/>
<ellipse cx="1456.9" cy="295.4" rx="0.66" ry="0.52" opacity="0.74"/>
<ellipse cx="1654.3" cy="594.1" rx="0.69" ry="0.68" opacity="0.28"/>
<ellipse cx="1386.9" cy="478.9" rx="0.89" ry="1.11" opacity="0.78"/>
<ellipse cx="1595.7" cy="487.3" rx="1.83" ry="1.85" opacity="0.28"/>
<ellipse cx="1479.7" cy="579.9" rx="1.46" ry="1.40" opacity="0.50"/>
<ellipse cx="1573.6" cy="253.1" rx="1.28" ry="0.57" opacity="0.55"/>
<ellipse cx="1569.7" cy="522.7" rx="0.83" ry="0.82" opacity="0.28"/>
<ellipse cx="1685.0" cy="369.4" rx="2.56" ry="2.70" opacity="0.28"/>
<ellipse cx="1537.9" cy="670.4" rx="1.90" ry="1.17" opacity="0.54"/>
<ellipse cx="1477.0" cy="367.7" rx="2.35" ry="2.25" opacity="0.52"/>
<ellipse cx="1733.5" cy="571.2" rx="2.18" ry="2.69" opacity="0.28"/>
<ellipse cx="1431.4" cy="567.2" rx="0.92" ry="0.95" opacity="0.66"/>
<ellipse cx="1522.8" cy="320.7" rx="0.77" ry="0.62" opacity="0.47"/>
<ellipse cx="1584.5" cy="357.2" rx="3.36" ry="3.05" opacity="0.28"/>
<ellipse cx="1519.7" cy="502.6" rx="0.95" ry="0.95" opacity="0.28"/>
<ellipse cx="1421.8" cy="505.4" rx="1.44" ry="1.60" opacity="0.65"/>
<ellipse cx="1522.6" cy="287.0" rx="0.76" ry="0.52" opacity="0.56"/>
<ellipse cx="1537.0" cy="274.4" rx="2.07" ry="1.22" opacity="0.56"/>
<ellipse cx="1529.8" cy="600.8" rx="1.48" ry="1.29" opacity="0.37"/>
<ellipse cx="1647.6" cy="357.6" rx="0.70" ry="0.68" opacity="0.28"/>
<ellipse cx="1784.0" cy="594.5" rx="1.32" ry="2.78" opacity="0.28"/>
<ellipse cx="1541.3" cy="630.4" rx="0.84" ry="0.66" opacity="0.42"/>
<ellipse cx="1416.5" cy="630.5" rx="0.59" ry="0.55" opacity="0.82"/>
<ellipse cx="1505.3" cy="674.1" rx="0.89" ry="0.56" opacity="0.64"/>
<ellipse cx="1687.1" cy="413.2" rx="2.31" ry="2.56" opacity="0.28"/>
<ellipse cx="1600.6" cy="438.9" rx="0.79" ry="0.79" opacity="0.28"/>
<ellipse cx="1560.2" cy="441.6" rx="5.12" ry="5.09" opacity="0.28"/>
<ellipse cx="1547.7" cy="465.0" rx="2.71" ry="2.71" opacity="0.28"/>
<ellipse cx="1555.8" cy="331.9" rx="1.60" ry="1.31" opacity="0.34"/>
<ellipse cx="1640.4" cy="536.1" rx="0.74" ry="0.76" opacity="0.28"/>
<ellipse cx="1451.6" cy="434.1" rx="1.04" ry="1.09" opacity="0.53"/>
<ellipse cx="1620.4" cy="293.0" rx="3.01" ry="2.24" opacity="0.32"/>
<ellipse cx="1616.7" cy="501.3" rx="0.77" ry="0.79" opacity="0.28"/>
<ellipse cx="1547.8" cy="421.0" rx="0.81" ry="0.79" opacity="0.28"/>
<ellipse cx="1404.0" cy="629.4" rx="0.56" ry="0.54" opacity="0.86"/>
<ellipse cx="1697.4" cy="662.8" rx="0.60" ry="0.50" opacity="0.28"/>
<ellipse cx="1503.3" cy="539.4" rx="3.13" ry="3.09" opacity="0.36"/>
<ellipse cx="1401.5" cy="336.9" rx="0.89" ry="0.91" opacity="0.84"/>
<ellipse cx="1425.1" cy="328.7" rx="0.63" ry="0.60" opacity="0.77"/>
<ellipse cx="1737.1" cy="589.1" rx="0.68" ry="0.84" opacity="0.28"/>
<ellipse cx="1573.4" cy="501.8" rx="0.79" ry="0.79" opacity="0.28"/>
<ellipse cx="1395.9" cy="552.7" rx="3.80" ry="4.32" opacity="0.78"/>
<ellipse cx="1451.7" cy="638.5" rx="0.66" ry="0.56" opacity="0.72"/>
<ellipse cx="1540.4" cy="552.6" rx="1.00" ry="0.95" opacity="0.28"/>
<ellipse cx="1570.6" cy="453.6" rx="2.97" ry="2.97" opacity="0.28"/>
<ellipse cx="1429.4" cy="355.7" rx="4.41" ry="4.41" opacity="0.71"/>
<ellipse cx="1478.1" cy="498.2" rx="0.84" ry="0.86" opacity="0.42"/>
<ellipse cx="1427.6" cy="446.4" rx="2.62" ry="2.86" opacity="0.62"/>
<ellipse cx="1423.4" cy="612.1" rx="1.66" ry="1.62" opacity="0.76"/>
<ellipse cx="1543.4" cy="681.9" rx="1.44" ry="0.78" opacity="0.57"/>
<ellipse cx="1527.6" cy="386.6" rx="0.90" ry="0.85" opacity="0.30"/>
<ellipse cx="1444.9" cy="471.7" rx="1.59" ry="1.72" opacity="0.55"/>
<ellipse cx="1397.5" cy="487.1" rx="1.60" ry="1.91" opacity="0.74"/>
<ellipse cx="1676.7" cy="442.4" rx="3.64" ry="4.03" opacity="0.28"/>
<ellipse cx="1552.6" cy="509.7" rx="2.99" ry="2.97" opacity="0.28"/>
<ellipse cx="1431.7" cy="474.5" rx="1.13" ry="1.25" opacity="0.60"/>
<ellipse cx="1551.7" cy="681.0" rx="3.59" ry="1.97" opacity="0.54"/>
<ellipse cx="1659.0" cy="411.8" rx="0.71" ry="0.75" opacity="0.28"/>
<ellipse cx="1571.3" cy="529.5" rx="1.65" ry="1.63" opacity="0.28"/>
<ellipse cx="1442.3" cy="509.7" rx="2.20" ry="2.34" opacity="0.57"/>
<ellipse cx="1450.7" cy="402.5" rx="2.69" ry="2.76" opacity="0.57"/>
<ellipse cx="1579.6" cy="502.5" rx="1.93" ry="1.93" opacity="0.28"/>
<ellipse cx="1480.2" cy="451.3" rx="0.77" ry="0.79" opacity="0.41"/>
<ellipse cx="1430.2" cy="292.3" rx="0.60" ry="0.49" opacity="0.83"/>
<ellipse cx="1637.8" cy="647.8" rx="0.75" ry="0.61" opacity="0.28"/>
<ellipse cx="1618.9" cy="516.4" rx="2.89" ry="2.94" opacity="0.28"/>
<ellipse cx="1531.4" cy="705.2" rx="0.83" ry="0.30" opacity="0.67"/>
<ellipse cx="1438.4" cy="413.3" rx="0.95" ry="1.00" opacity="0.60"/>
<ellipse cx="1417.9" cy="475.1" rx="3.84" ry="4.39" opacity="0.66"/>
<ellipse cx="1413.7" cy="680.1" rx="1.28" ry="0.79" opacity="0.70"/>
<ellipse cx="1679.4" cy="554.0" rx="0.83" ry="0.89" opacity="0.28"/>
<ellipse cx="1715.0" cy="509.7" rx="1.31" ry="1.60" opacity="0.28"/>
<ellipse cx="1377.8" cy="373.7" rx="1.68" ry="1.96" opacity="0.88"/>
<ellipse cx="1561.8" cy="551.1" rx="4.44" ry="4.26" opacity="0.28"/>
<ellipse cx="1553.9" cy="558.7" rx="1.80" ry="1.70" opacity="0.28"/>
<ellipse cx="1606.9" cy="688.9" rx="2.87" ry="1.58" opacity="0.46"/>
<ellipse cx="1675.7" cy="371.9" rx="6.81" ry="7.08" opacity="0.28"/>
<ellipse cx="1694.8" cy="677.8" rx="0.75" ry="0.51" opacity="0.34"/>
<ellipse cx="1608.3" cy="601.4" rx="0.89" ry="0.81" opacity="0.28"/>
<ellipse cx="1416.4" cy="267.9" rx="0.48" ry="0.30" opacity="0.70"/>
<ellipse cx="1498.8" cy="293.9" rx="2.53" ry="1.86" opacity="0.61"/>
<ellipse cx="1486.9" cy="317.2" rx="0.93" ry="0.78" opacity="0.59"/>
<ellipse cx="1732.9" cy="568.5" rx="0.66" ry="0.82" opacity="0.28"/>
<ellipse cx="1554.4" cy="396.5" rx="4.00" ry="3.81" opacity="0.28"/>
<ellipse cx="1535.8" cy="610.6" rx="1.06" ry="0.90" opacity="0.38"/>
<ellipse cx="1352.1" cy="526.5" rx="0.67" ry="0.93" opacity="0.70"/>
<ellipse cx="1393.1" cy="520.0" rx="2.59" ry="3.05" opacity="0.77"/>
<ellipse cx="1607.7" cy="502.9" rx="2.17" ry="2.20" opacity="0.28"/>
<ellipse cx="1545.7" cy="253.4" rx="2.31" ry="1.01" opacity="0.61"/>
<ellipse cx="1477.4" cy="524.2" rx="0.76" ry="0.77" opacity="0.44"/>
<ellipse cx="1644.4" cy="625.8" rx="0.99" ry="0.88" opacity="0.28"/>
<ellipse cx="1470.4" cy="474.6" rx="1.26" ry="1.32" opacity="0.45"/>
<ellipse cx="1674.4" cy="441.6" rx="0.70" ry="0.77" opacity="0.28"/>
<ellipse cx="1804.8" cy="510.7" rx="0.67" ry="1.91" opacity="0.28"/>
<ellipse cx="1368.9" cy="510.0" rx="0.67" ry="0.86" opacity="0.86"/>
<ellipse cx="1396.3" cy="613.6" rx="0.63" ry="0.66" opacity="0.86"/>
<ellipse cx="1640.6" cy="328.0" rx="0.69" ry="0.61" opacity="0.28"/>
<ellipse cx="1516.0" cy="490.6" rx="0.79" ry="0.80" opacity="0.28"/>
<ellipse cx="1559.7" cy="546.6" rx="0.85" ry="0.82" opacity="0.28"/>
<ellipse cx="1728.7" cy="531.5" rx="0.78" ry="0.98" opacity="0.28"/>
<ellipse cx="1575.7" cy="685.0" rx="2.43" ry="1.34" opacity="0.50"/>
<ellipse cx="1527.7" cy="315.5" rx="1.35" ry="1.06" opacity="0.47"/>
<ellipse cx="1622.9" cy="523.5" rx="1.06" ry="1.07" opacity="0.28"/>
<ellipse cx="1620.2" cy="369.4" rx="2.44" ry="2.34" opacity="0.28"/>
<ellipse cx="1565.3" cy="508.8" rx="1.53" ry="1.52" opacity="0.28"/>
<ellipse cx="1392.6" cy="330.7" rx="3.52" ry="3.64" opacity="0.70"/>
<ellipse cx="1547.7" cy="522.9" rx="0.83" ry="0.81" opacity="0.28"/>
<ellipse cx="1497.7" cy="614.6" rx="0.76" ry="0.66" opacity="0.51"/>
<ellipse cx="1460.4" cy="337.7" rx="3.20" ry="2.95" opacity="0.63"/>
<ellipse cx="1496.7" cy="242.1" rx="0.75" ry="0.26" opacity="0.76"/>
<ellipse cx="1527.0" cy="329.6" rx="2.34" ry="1.94" opacity="0.43"/>
<ellipse cx="1683.0" cy="350.8" rx="0.76" ry="0.78" opacity="0.28"/>
<ellipse cx="1578.4" cy="529.3" rx="0.90" ry="0.89" opacity="0.28"/>
<ellipse cx="1450.4" cy="473.0" rx="0.81" ry="0.86" opacity="0.53"/>
<ellipse cx="1747.5" cy="511.2" rx="1.88" ry="2.63" opacity="0.28"/>
<ellipse cx="1600.0" cy="283.7" rx="1.35" ry="0.92" opacity="0.39"/>
<ellipse cx="1466.0" cy="412.1" rx="3.49" ry="3.55" opacity="0.50"/>
<ellipse cx="1592.4" cy="249.5" rx="1.76" ry="0.73" opacity="0.53"/>
<ellipse cx="1598.1" cy="596.4" rx="0.76" ry="0.69" opacity="0.28"/>
<ellipse cx="1554.8" cy="400.6" rx="2.79" ry="2.66" opacity="0.28"/>
<ellipse cx="1382.5" cy="432.0" rx="0.74" ry="0.90" opacity="0.81"/>
<ellipse cx="1390.4" cy="424.5" rx="2.21" ry="2.60" opacity="0.78"/>
<ellipse cx="1462.0" cy="301.4" rx="0.78" ry="0.63" opacity="0.71"/>
<ellipse cx="1568.5" cy="474.1" rx="2.59" ry="2.60" opacity="0.28"/>
<ellipse cx="1416.4" cy="572.2" rx="2.66" ry="2.82" opacity="0.73"/>
<ellipse cx="1381.5" cy="414.4" rx="3.12" ry="3.73" opacity="0.82"/>
<ellipse cx="1465.8" cy="348.8" rx="1.02" ry="0.96" opacity="0.59"/>
<ellipse cx="1603.3" cy="668.3" rx="0.71" ry="0.49" opacity="0.39"/>
<ellipse cx="1801.4" cy="527.9" rx="0.73" ry="1.92" opacity="0.28"/>
<ellipse cx="1451.3" cy="451.8" rx="3.12" ry="3.30" opacity="0.53"/>
<ellipse cx="1522.0" cy="704.2" rx="0.92" ry="0.35" opacity="0.69"/>
<ellipse cx="1508.9" cy="465.4" rx="2.65" ry="2.67" opacity="0.29"/>
<ellipse cx="1528.5" cy="438.8" rx="4.78" ry="4.75" opacity="0.28"/>
<ellipse cx="1438.0" cy="385.8" rx="4.61" ry="4.74" opacity="0.64"/>
<ellipse cx="1436.8" cy="546.9" rx="1.78" ry="1.86" opacity="0.62"/>
<ellipse cx="1399.7" cy="426.6" rx="2.88" ry="3.29" opacity="0.74"/>
<ellipse cx="1570.0" cy="503.7" rx="3.51" ry="3.50" opacity="0.28"/>
<ellipse cx="1672.8" cy="456.8" rx="0.87" ry="0.96" opacity="0.28"/>
<ellipse cx="1702.6" cy="529.6" rx="0.79" ry="0.91" opacity="0.28"/>
<ellipse cx="1651.5" cy="564.5" rx="1.51" ry="1.53" opacity="0.28"/>
<ellipse cx="1504.6" cy="480.2" rx="0.79" ry="0.80" opacity="0.31"/>
<ellipse cx="1437.9" cy="361.8" rx="2.42" ry="2.41" opacity="0.67"/>
<ellipse cx="1624.5" cy="539.7" rx="1.52" ry="1.53" opacity="0.28"/>
<ellipse cx="1639.6" cy="698.4" rx="2.76" ry="1.25" opacity="0.45"/>
<ellipse cx="1409.7" cy="304.3" rx="1.41" ry="1.27" opacity="0.88"/>
<ellipse cx="1616.3" cy="353.8" rx="0.76" ry="0.71" opacity="0.28"/>
<ellipse cx="1514.6" cy="557.7" rx="1.39" ry="1.33" opacity="0.34"/>
<ellipse cx="1743.5" cy="537.4" rx="0.55" ry="0.74" opacity="0.28"/>
<ellipse cx="1377.8" cy="561.2" rx="1.96" ry="2.35" opacity="0.86"/>
<ellipse cx="1540.0" cy="393.7" rx="0.97" ry="0.92" opacity="0.28"/>
<ellipse cx="1591.7" cy="540.4" rx="3.99" ry="3.94" opacity="0.28"/>
<ellipse cx="1479.1" cy="706.4" rx="0.90" ry="0.30" opacity="0.81"/>
<ellipse cx="1642.9" cy="501.8" rx="2.20" ry="2.31" opacity="0.28"/>
<ellipse cx="1431.7" cy="413.7" rx="0.71" ry="0.76" opacity="0.63"/>
<ellipse cx="1554.6" cy="293.9" rx="0.79" ry="0.54" opacity="0.46"/>
<ellipse cx="1624.9" cy="609.4" rx="1.03" ry="0.94" opacity="0.28"/>
<ellipse cx="1561.4" cy="374.6" rx="4.04" ry="3.73" opacity="0.28"/>
<ellipse cx="1718.2" cy="545.7" rx="0.66" ry="0.78" opacity="0.28"/>
<ellipse cx="1581.7" cy="674.0" rx="4.52" ry="2.83" opacity="0.45"/>
<ellipse cx="1396.8" cy="392.1" rx="0.76" ry="0.86" opacity="0.79"/>
<ellipse cx="1811.9" cy="457.9" rx="1.17" ry="4.84" opacity="0.28"/>
<ellipse cx="1509.7" cy="553.5" rx="3.76" ry="3.65" opacity="0.35"/>
<ellipse cx="1776.8" cy="603.3" rx="0.31" ry="0.60" opacity="0.28"/>
<ellipse cx="1771.8" cy="443.3" rx="2.64" ry="4.46" opacity="0.28"/>
<ellipse cx="1596.8" cy="327.5" rx="1.11" ry="0.94" opacity="0.28"/>
<ellipse cx="1514.5" cy="367.4" rx="1.27" ry="1.17" opacity="0.39"/>
<ellipse cx="1513.5" cy="680.7" rx="2.99" ry="1.74" opacity="0.64"/>
<ellipse cx="1517.7" cy="501.3" rx="2.93" ry="2.93" opacity="0.28"/>
<ellipse cx="1472.0" cy="296.4" rx="0.95" ry="0.74" opacity="0.69"/>
<ellipse cx="1643.9" cy="407.7" rx="1.71" ry="1.76" opacity="0.28"/>
<ellipse cx="1598.8" cy="440.3" rx="1.01" ry="1.02" opacity="0.28"/>
<ellipse cx="1629.7" cy="387.5" rx="0.80" ry="0.79" opacity="0.28"/>
<ellipse cx="1505.2" cy="282.1" rx="1.57" ry="1.05" opacity="0.62"/>
<ellipse cx="1487.5" cy="526.4" rx="1.20" ry="1.21" opacity="0.40"/>
<ellipse cx="1440.8" cy="629.1" rx="2.73" ry="2.45" opacity="0.73"/>
<ellipse cx="1567.0" cy="655.5" rx="1.11" ry="0.78" opacity="0.42"/>
<ellipse cx="1598.3" cy="617.5" rx="4.04" ry="3.50" opacity="0.28"/>
<ellipse cx="1382.5" cy="502.2" rx="0.97" ry="1.19" opacity="0.80"/>
<ellipse cx="1431.6" cy="657.7" rx="6.99" ry="5.53" opacity="0.83"/>
<ellipse cx="1613.7" cy="597.0" rx="1.44" ry="1.34" opacity="0.28"/>
<ellipse cx="1632.3" cy="283.7" rx="0.65" ry="0.46" opacity="0.34"/>
<ellipse cx="1742.2" cy="574.1" rx="0.54" ry="0.70" opacity="0.28"/>
<ellipse cx="1568.4" cy="659.0" rx="3.34" ry="2.29" opacity="0.43"/>
<ellipse cx="1626.7" cy="419.5" rx="0.77" ry="0.79" opacity="0.28"/>
<ellipse cx="1424.1" cy="461.5" rx="1.19" ry="1.32" opacity="0.63"/>
<ellipse cx="1573.7" cy="362.7" rx="0.78" ry="0.71" opacity="0.28"/>
<ellipse cx="1463.2" cy="582.1" rx="0.72" ry="0.70" opacity="0.57"/>
<ellipse cx="1592.9" cy="645.8" rx="0.75" ry="0.57" opacity="0.33"/>
<ellipse cx="1462.0" cy="291.2" rx="1.64" ry="1.25" opacity="0.73"/>
<ellipse cx="1660.8" cy="691.6" rx="0.88" ry="0.46" opacity="0.41"/>
<ellipse cx="1560.4" cy="482.9" rx="2.53" ry="2.53" opacity="0.28"/>
<ellipse cx="1458.0" cy="280.8" rx="0.64" ry="0.46" opacity="0.77"/>
<ellipse cx="1506.2" cy="572.8" rx="0.77" ry="0.73" opacity="0.40"/>
<ellipse cx="1682.0" cy="647.5" rx="0.61" ry="0.53" opacity="0.28"/>
<ellipse cx="1578.0" cy="354.6" rx="1.19" ry="1.06" opacity="0.28"/>
<ellipse cx="1501.2" cy="311.2" rx="0.80" ry="0.64" opacity="0.56"/>
<ellipse cx="1422.4" cy="404.9" rx="4.42" ry="4.74" opacity="0.67"/>
<ellipse cx="1380.2" cy="344.2" rx="0.56" ry="0.62" opacity="0.70"/>
<ellipse cx="1583.4" cy="448.3" rx="0.86" ry="0.86" opacity="0.28"/>
<ellipse cx="1513.1" cy="533.3" rx="0.78" ry="0.77" opacity="0.31"/>
<ellipse cx="1732.9" cy="533.0" rx="0.94" ry="1.19" opacity="0.28"/>
<ellipse cx="1703.8" cy="431.2" rx="0.65" ry="0.76" opacity="0.28"/>
<ellipse cx="1629.3" cy="691.6" rx="0.63" ry="0.34" opacity="0.44"/>
<ellipse cx="1647.4" cy="546.4" rx="2.91" ry="2.99" opacity="0.28"/>
<ellipse cx="1648.4" cy="616.8" rx="0.70" ry="0.65" opacity="0.28"/>
<ellipse cx="1664.5" cy="309.5" rx="0.62" ry="0.54" opacity="0.28"/>
<ellipse cx="1611.7" cy="364.2" rx="0.74" ry="0.70" opacity="0.28"/>
<ellipse cx="1378.9" cy="369.7" rx="0.67" ry="0.77" opacity="0.88"/>
<ellipse cx="1627.4" cy="268.3" rx="0.72" ry="0.43" opacity="0.40"/>
<ellipse cx="1799.3" cy="443.8" rx="1.10" ry="2.81" opacity="0.28"/>
<ellipse cx="1412.6" cy="300.1" rx="2.01" ry="1.76" opacity="0.87"/>
<ellipse cx="1546.1" cy="435.8" rx="1.65" ry="1.63" opacity="0.28"/>
<ellipse cx="1698.6" cy="340.5" rx="1.03" ry="1.07" opacity="0.28"/>
<ellipse cx="1621.9" cy="631.0" rx="0.83" ry="0.71" opacity="0.28"/>
<ellipse cx="1642.2" cy="320.3" rx="0.67" ry="0.59" opacity="0.28"/>
<ellipse cx="1503.3" cy="268.9" rx="0.72" ry="0.43" opacity="0.67"/>
<ellipse cx="1588.2" cy="583.4" rx="2.63" ry="2.45" opacity="0.28"/>
<ellipse cx="1704.6" cy="657.3" rx="0.70" ry="0.62" opacity="0.28"/>
<ellipse cx="1628.7" cy="584.8" rx="0.99" ry="0.96" opacity="0.28"/>
<ellipse cx="1597.6" cy="622.9" rx="1.19" ry="1.01" opacity="0.28"/>
<ellipse cx="1429.0" cy="404.0" rx="0.75" ry="0.79" opacity="0.65"/>
<ellipse cx="1421.1" cy="430.6" rx="1.29" ry="1.41" opacity="0.66"/>
<ellipse cx="1765.5" cy="588.5" rx="0.38" ry="0.58" opacity="0.28"/>
<ellipse cx="1702.3" cy="466.6" rx="0.66" ry="0.79" opacity="0.28"/>
<ellipse cx="1586.9" cy="282.4" rx="4.98" ry="3.28" opacity="0.42"/>
<ellipse cx="1620.1" cy="271.7" rx="3.13" ry="1.95" opacity="0.40"/>
<ellipse cx="1629.9" cy="415.6" rx="1.00" ry="1.01" opacity="0.28"/>
<ellipse cx="1557.4" cy="565.9" rx="1.80" ry="1.68" opacity="0.28"/>
<ellipse cx="1471.7" cy="274.2" rx="1.87" ry="1.23" opacity="0.74"/>
<ellipse cx="1447.9" cy="428.6" rx="1.37" ry="1.44" opacity="0.55"/>
<ellipse cx="1620.9" cy="387.5" rx="0.75" ry="0.74" opacity="0.28"/>
<ellipse cx="1451.7" cy="309.0" rx="1.99" ry="1.69" opacity="0.72"/>
<ellipse cx="1658.7" cy="356.3" rx="0.94" ry="0.93" opacity="0.28"/>
<ellipse cx="1434.3" cy="291.6" rx="0.92" ry="0.73" opacity="0.82"/>
<ellipse cx="1562.5" cy="601.1" rx="3.47" ry="3.02" opacity="0.28"/>
<ellipse cx="1509.6" cy="543.1" rx="1.59" ry="1.56" opacity="0.34"/>
<ellipse cx="1697.1" cy="641.0" rx="0.76" ry="0.72" opacity="0.28"/>
<ellipse cx="1523.6" cy="645.5" rx="1.05" ry="0.78" opacity="0.51"/>
<ellipse cx="1403.2" cy="312.6" rx="0.90" ry="0.85" opacity="0.70"/>
<ellipse cx="1464.5" cy="259.1" rx="0.62" ry="0.34" opacity="0.81"/>
<ellipse cx="1405.9" cy="669.1" rx="0.46" ry="0.34" opacity="0.70"/>
<ellipse cx="1397.2" cy="424.3" rx="0.79" ry="0.91" opacity="0.76"/>
<ellipse cx="1722.0" cy="518.6" rx="0.61" ry="0.76" opacity="0.28"/>
<ellipse cx="1647.8" cy="447.2" rx="1.14" ry="1.21" opacity="0.28"/>
<ellipse cx="1412.7" cy="678.9" rx="2.75" ry="1.72" opacity="0.70"/>
<ellipse cx="1507.6" cy="668.5" rx="2.64" ry="1.74" opacity="0.62"/>
<ellipse cx="1663.0" cy="372.3" rx="0.69" ry="0.70" opacity="0.28"/>
<ellipse cx="1481.9" cy="702.6" rx="2.93" ry="1.10" opacity="0.79"/>
<ellipse cx="1510.1" cy="296.7" rx="0.89" ry="0.66" opacity="0.57"/>
<ellipse cx="1467.4" cy="601.2" rx="2.53" ry="2.36" opacity="0.59"/>
<ellipse cx="1571.2" cy="714.1" rx="1.15" ry="0.28" opacity="0.61"/>
<ellipse cx="1424.1" cy="327.2" rx="0.99" ry="0.94" opacity="0.78"/>
<ellipse cx="1695.8" cy="605.8" rx="0.85" ry="0.88" opacity="0.28"/>
<ellipse cx="1541.5" cy="415.6" rx="0.80" ry="0.78" opacity="0.28"/>
<ellipse cx="1470.6" cy="581.6" rx="2.94" ry="2.84" opacity="0.54"/>
<ellipse cx="1559.9" cy="489.9" rx="0.99" ry="0.99" opacity="0.28"/>
<ellipse cx="1803.7" cy="423.3" rx="0.27" ry="0.87" opacity="0.28"/>
<ellipse cx="1475.1" cy="615.6" rx="2.84" ry="2.53" opacity="0.59"/>
<ellipse cx="1427.0" cy="491.2" rx="1.65" ry="1.83" opacity="0.62"/>
<ellipse cx="1661.6" cy="588.5" rx="0.72" ry="0.72" opacity="0.28"/>
<ellipse cx="1771.9" cy="589.5" rx="0.55" ry="0.91" opacity="0.28"/>
<ellipse cx="1453.7" cy="628.6" rx="0.70" ry="0.62" opacity="0.69"/>
<ellipse cx="1568.7" cy="297.5" rx="3.50" ry="2.50" opacity="0.41"/>
<ellipse cx="1523.6" cy="556.4" rx="2.99" ry="2.87" opacity="0.31"/>
<ellipse cx="1550.3" cy="289.5" rx="0.83" ry="0.55" opacity="0.48"/>
<ellipse cx="1554.5" cy="374.9" rx="5.11" ry="4.69" opacity="0.28"/>
<ellipse cx="1567.0" cy="689.6" rx="4.75" ry="2.42" opacity="0.54"/>
<ellipse cx="1407.7" cy="331.8" rx="0.59" ry="0.59" opacity="0.83"/>
<ellipse cx="1353.4" cy="478.2" rx="0.55" ry="0.80" opacity="0.70"/>
<ellipse cx="1421.7" cy="323.8" rx="1.67" ry="1.58" opacity="0.79"/>
<ellipse cx="1671.4" cy="411.3" rx="0.71" ry="0.76" opacity="0.28"/>
<ellipse cx="1612.3" cy="561.7" rx="4.30" ry="4.21" opacity="0.28"/>
<ellipse cx="1625.3" cy="474.6" rx="0.77" ry="0.80" opacity="0.28"/>
<ellipse cx="1757.9" cy="493.7" rx="0.51" ry="0.78" opacity="0.28"/>
<ellipse cx="1535.8" cy="318.7" rx="2.45" ry="1.93" opacity="0.43"/>
<ellipse cx="1568.4" cy="430.7" rx="0.94" ry="0.93" opacity="0.28"/>
<ellipse cx="1449.2" cy="581.7" rx="0.74" ry="0.73" opacity="0.62"/>
<ellipse cx="1555.7" cy="445.1" rx="0.80" ry="0.80" opacity="0.28"/>
<ellipse cx="1428.0" cy="367.2" rx="2.49" ry="2.54" opacity="0.70"/>
<ellipse cx="1616.4" cy="647.8" rx="0.70" ry="0.56" opacity="0.30"/>
<ellipse cx="1772.8" cy="580.9" rx="0.38" ry="0.64" opacity="0.28"/>
<ellipse cx="1689.2" cy="649.9" rx="0.67" ry="0.59" opacity="0.28"/>
<ellipse cx="1541.4" cy="709.9" rx="2.99" ry="0.89" opacity="0.66"/>
<ellipse cx="1516.9" cy="323.3" rx="0.77" ry="0.64" opacity="0.48"/>
<ellipse cx="1586.2" cy="713.7" rx="2.77" ry="0.73" opacity="0.59"/>
<ellipse cx="1494.6" cy="433.8" rx="0.83" ry="0.84" opacity="0.37"/>
<ellipse cx="1496.5" cy="426.7" rx="0.83" ry="0.83" opacity="0.36"/>
<ellipse cx="1603.9" cy="566.9" rx="2.26" ry="2.18" opacity="0.28"/>
<ellipse cx="1592.5" cy="607.1" rx="3.67" ry="3.25" opacity="0.28"/>
<ellipse cx="1653.8" cy="458.2" rx="0.74" ry="0.79" opacity="0.28"/>
<ellipse cx="1411.8" cy="648.5" rx="0.59" ry="0.51" opacity="0.87"/>
<ellipse cx="1600.0" cy="569.3" rx="0.79" ry="0.76" opacity="0.28"/>
<ellipse cx="1481.8" cy="695.6" rx="0.65" ry="0.31" opacity="0.77"/>
<ellipse cx="1588.1" cy="624.8" rx="1.71" ry="1.42" opacity="0.28"/>
<ellipse cx="1519.6" cy="661.2" rx="1.17" ry="0.80" opacity="0.57"/>
<ellipse cx="1356.6" cy="538.3" rx="0.53" ry="0.71" opacity="0.70"/>
<ellipse cx="1643.0" cy="675.1" rx="0.65" ry="0.44" opacity="0.36"/>
<ellipse cx="1422.9" cy="364.1" rx="0.68" ry="0.70" opacity="0.72"/>
<ellipse cx="1676.0" cy="577.0" rx="0.67" ry="0.69" opacity="0.28"/>
<ellipse cx="1522.9" cy="503.7" rx="4.14" ry="4.14" opacity="0.28"/>
<ellipse cx="1592.1" cy="537.9" rx="1.50" ry="1.48" opacity="0.28"/>
<ellipse cx="1602.7" cy="486.4" rx="0.85" ry="0.86" opacity="0.28"/>
<ellipse cx="1455.1" cy="676.8" rx="0.63" ry="0.41" opacity="0.80"/>
<ellipse cx="1557.7" cy="424.1" rx="1.52" ry="1.49" opacity="0.28"/>
<ellipse cx="1557.2" cy="678.7" rx="1.56" ry="0.89" opacity="0.52"/>
<ellipse cx="1534.8" cy="546.9" rx="0.90" ry="0.87" opacity="0.28"/>
<ellipse cx="1715.1" cy="300.7" rx="1.73" ry="1.65" opacity="0.28"/>
<ellipse cx="1668.4" cy="457.1" rx="1.18" ry="1.30" opacity="0.28"/>
<ellipse cx="1509.0" cy="593.7" rx="3.10" ry="2.82" opacity="0.43"/>
<ellipse cx="1461.3" cy="258.2" rx="2.38" ry="1.27" opacity="0.82"/>
<ellipse cx="1634.1" cy="634.5" rx="0.69" ry="0.59" opacity="0.28"/>
<ellipse cx="1604.9" cy="417.4" rx="2.19" ry="2.18" opacity="0.28"/>
<ellipse cx="1546.9" cy="604.0" rx="1.02" ry="0.87" opacity="0.33"/>
<ellipse cx="1657.9" cy="465.2" rx="1.81" ry="1.97" opacity="0.28"/>
<ellipse cx="1780.8" cy="422.4" rx="0.40" ry="0.74" opacity="0.28"/>
<ellipse cx="1563.6" cy="248.1" rx="0.80" ry="0.31" opacity="0.59"/>
<ellipse cx="1390.4" cy="419.0" rx="0.68" ry="0.79" opacity="0.79"/>
<ellipse cx="1736.5" cy="435.0" rx="0.58" ry="0.76" opacity="0.28"/>
<ellipse cx="1509.1" cy="616.2" rx="6.54" ry="5.60" opacity="0.48"/>
<ellipse cx="1555.5" cy="640.5" rx="0.84" ry="0.63" opacity="0.41"/>
<ellipse cx="1482.3" cy="382.4" rx="2.35" ry="2.29" opacity="0.47"/>
<ellipse cx="1385.9" cy="501.1" rx="0.73" ry="0.89" opacity="0.79"/>
<ellipse cx="1371.3" cy="356.3" rx="1.09" ry="1.27" opacity="0.70"/>
<ellipse cx="1505.5" cy="517.3" rx="0.84" ry="0.84" opacity="0.32"/>
<ellipse cx="1634.0" cy="295.1" rx="0.85" ry="0.65" opacity="0.29"/>
<ellipse cx="1596.4" cy="708.0" rx="0.78" ry="0.27" opacity="0.55"/>
<ellipse cx="1576.3" cy="677.1" rx="0.75" ry="0.45" opacity="0.48"/>
<ellipse cx="1498.7" cy="658.0" rx="1.89" ry="1.36" opacity="0.62"/>
<ellipse cx="1796.7" cy="481.1" rx="0.98" ry="2.36" opacity="0.28"/>
<ellipse cx="1445.2" cy="579.9" rx="0.70" ry="0.70" opacity="0.63"/>
<ellipse cx="1738.6" cy="564.4" rx="0.56" ry="0.71" opacity="0.28"/>
<ellipse cx="1394.4" cy="356.9" rx="0.71" ry="0.77" opacity="0.84"/>
<ellipse cx="1527.4" cy="626.9" rx="0.78" ry="0.63" opacity="0.45"/>
<ellipse cx="1735.1" cy="551.1" rx="0.66" ry="0.83" opacity="0.28"/>
<ellipse cx="1618.5" cy="672.6" rx="2.77" ry="1.86" opacity="0.38"/>
<ellipse cx="1540.9" cy="468.0" rx="0.82" ry="0.82" opacity="0.28"/>
<ellipse cx="1619.3" cy="412.8" rx="2.12" ry="2.13" opacity="0.28"/>
<ellipse cx="1436.9" cy="311.7" rx="1.19" ry="1.05" opacity="0.77"/>
<ellipse cx="1493.3" cy="645.4" rx="3.59" ry="2.79" opacity="0.60"/>
<ellipse cx="1615.5" cy="599.1" rx="0.84" ry="0.77" opacity="0.28"/>
<ellipse cx="1607.1" cy="509.1" rx="2.21" ry="2.23" opacity="0.28"/>
<ellipse cx="1477.3" cy="336.0" rx="1.42" ry="1.27" opacity="0.58"/>
<ellipse cx="1669.5" cy="362.6" rx="0.67" ry="0.68" opacity="0.28"/>
<ellipse cx="1455.2" cy="398.7" rx="1.44" ry="1.47" opacity="0.55"/>
<ellipse cx="1736.8" cy="545.6" rx="2.50" ry="3.20" opacity="0.28"/>
<ellipse cx="1444.8" cy="619.0" rx="0.78" ry="0.72" opacity="0.70"/>
<ellipse cx="1437.0" cy="253.7" rx="0.75" ry="0.36" opacity="0.70"/>
<ellipse cx="1543.5" cy="461.3" rx="0.83" ry="0.83" opacity="0.28"/>
<ellipse cx="1394.3" cy="561.4" rx="1.37" ry="1.55" opacity="0.80"/>
<ellipse cx="1535.7" cy="273.6" rx="2.56" ry="1.51" opacity="0.57"/>
<ellipse cx="1467.5" cy="588.8" rx="0.99" ry="0.94" opacity="0.56"/>
<ellipse cx="1526.4" cy="616.9" rx="3.08" ry="2.58" opacity="0.42"/>
<ellipse cx="1657.5" cy="573.3" rx="0.93" ry="0.95" opacity="0.28"/>
<ellipse cx="1706.0" cy="592.2" rx="0.80" ry="0.87" opacity="0.28"/>
<ellipse cx="1573.2" cy="386.2" rx="0.89" ry="0.84" opacity="0.28"/>
<ellipse cx="1528.9" cy="482.2" rx="2.98" ry="2.99" opacity="0.28"/>
<ellipse cx="1492.8" cy="666.3" rx="0.76" ry="0.52" opacity="0.66"/>
<ellipse cx="1660.1" cy="434.2" rx="2.07" ry="2.21" opacity="0.28"/>
<ellipse cx="1667.9" cy="439.6" rx="0.71" ry="0.78" opacity="0.28"/>
<ellipse cx="1605.7" cy="491.7" rx="0.78" ry="0.79" opacity="0.28"/>
<ellipse cx="1679.8" cy="504.9" rx="0.76" ry="0.85" opacity="0.28"/>
<ellipse cx="1750.7" cy="502.2" rx="0.92" ry="1.32" opacity="0.28"/>
<ellipse cx="1383.1" cy="382.5" rx="0.59" ry="0.69" opacity="0.85"/>
<ellipse cx="1357.9" cy="415.0" rx="1.05" ry="1.38" opacity="0.70"/>
<ellipse cx="1520.6" cy="462.0" rx="0.80" ry="0.80" opacity="0.28"/>
<ellipse cx="1693.4" cy="496.9" rx="3.83" ry="4.43" opacity="0.28"/>
<ellipse cx="1555.4" cy="359.3" rx="0.80" ry="0.71" opacity="0.28"/>
<ellipse cx="1502.0" cy="534.9" rx="0.78" ry="0.77" opacity="0.36"/>
<ellipse cx="1708.8" cy="586.3" rx="0.81" ry="0.90" opacity="0.28"/>
<ellipse cx="1373.5" cy="388.1" rx="1.29" ry="1.55" opacity="0.88"/>
<ellipse cx="1397.5" cy="652.3" rx="2.48" ry="2.20" opacity="0.70"/>
<ellipse cx="1434.2" cy="561.3" rx="2.36" ry="2.45" opacity="0.65"/>
<ellipse cx="1703.3" cy="441.8" rx="0.69" ry="0.81" opacity="0.28"/>
<ellipse cx="1481.8" cy="625.5" rx="0.72" ry="0.62" opacity="0.59"/>
<ellipse cx="1539.5" cy="513.5" rx="0.94" ry="0.93" opacity="0.28"/>
<ellipse cx="1782.8" cy="443.9" rx="0.70" ry="1.33" opacity="0.28"/>
<ellipse cx="1689.0" cy="540.5" rx="0.72" ry="0.79" opacity="0.28"/>
<ellipse cx="1445.8" cy="569.4" rx="4.57" ry="4.63" opacity="0.61"/>
<ellipse cx="1570.7" cy="676.9" rx="1.49" ry="0.89" opacity="0.49"/>
<ellipse cx="1611.2" cy="428.1" rx="4.09" ry="4.12" opacity="0.28"/>
<ellipse cx="1627.4" cy="513.8" rx="1.10" ry="1.13" opacity="0.28"/>
<ellipse cx="1679.1" cy="581.4" rx="0.71" ry="0.74" opacity="0.28"/>
<ellipse cx="1410.8" cy="367.1" rx="0.67" ry="0.71" opacity="0.76"/>
<ellipse cx="1522.1" cy="379.8" rx="1.13" ry="1.07" opacity="0.34"/>
<ellipse cx="1688.3" cy="571.9" rx="1.20" ry="1.28" opacity="0.28"/>
<ellipse cx="1609.4" cy="689.5" rx="0.68" ry="0.37" opacity="0.46"/>
<ellipse cx="1513.8" cy="594.7" rx="0.78" ry="0.70" opacity="0.41"/>
<ellipse cx="1527.2" cy="475.1" rx="0.81" ry="0.81" opacity="0.28"/>
<ellipse cx="1577.2" cy="322.0" rx="0.78" ry="0.63" opacity="0.31"/>
<ellipse cx="1357.3" cy="513.9" rx="0.67" ry="0.91" opacity="0.70"/>
<ellipse cx="1480.0" cy="269.1" rx="0.72" ry="0.45" opacity="0.73"/>
<ellipse cx="1571.4" cy="630.0" rx="0.79" ry="0.63" opacity="0.33"/>
<ellipse cx="1453.0" cy="663.5" rx="0.65" ry="0.48" opacity="0.77"/>
<ellipse cx="1538.1" cy="282.2" rx="2.87" ry="1.82" opacity="0.53"/>
<ellipse cx="1682.0" cy="616.6" rx="1.81" ry="1.77" opacity="0.28"/>
<ellipse cx="1428.5" cy="304.7" rx="1.17" ry="1.02" opacity="0.81"/>
<ellipse cx="1524.6" cy="426.0" rx="0.87" ry="0.86" opacity="0.28"/>
<ellipse cx="1558.2" cy="321.6" rx="4.07" ry="3.22" opacity="0.36"/>
<ellipse cx="1626.4" cy="253.3" rx="1.23" ry="0.55" opacity="0.46"/>
<ellipse cx="1490.0" cy="664.2" rx="0.96" ry="0.67" opacity="0.66"/>
<ellipse cx="1576.6" cy="295.3" rx="0.88" ry="0.62" opacity="0.40"/>
<ellipse cx="1687.9" cy="335.2" rx="0.61" ry="0.61" opacity="0.28"/>
<ellipse cx="1647.8" cy="575.3" rx="0.95" ry="0.95" opacity="0.28"/>
<ellipse cx="1658.4" cy="410.9" rx="1.00" ry="1.05" opacity="0.28"/>
<ellipse cx="1712.9" cy="458.0" rx="5.97" ry="7.36" opacity="0.28"/>
<ellipse cx="1654.1" cy="429.0" rx="0.77" ry="0.82" opacity="0.28"/>
<ellipse cx="1632.8" cy="591.1" rx="1.40" ry="1.34" opacity="0.28"/>
<ellipse cx="1719.1" cy="596.6" rx="1.87" ry="2.12" opacity="0.28"/>
<ellipse cx="1747.1" cy="559.6" rx="0.51" ry="0.67" opacity="0.28"/>
<ellipse cx="1430.3" cy="555.9" rx="3.31" ry="3.47" opacity="0.65"/>
<ellipse cx="1556.6" cy="363.7" rx="0.79" ry="0.71" opacity="0.28"/>
<ellipse cx="1460.0" cy="577.7" rx="1.50" ry="1.47" opacity="0.57"/>
<ellipse cx="1502.4" cy="241.2" rx="0.72" ry="0.24" opacity="0.75"/>
<ellipse cx="1633.8" cy="364.4" rx="2.21" ry="2.14" opacity="0.28"/>
<ellipse cx="1660.2" cy="674.1" rx="0.82" ry="0.57" opacity="0.34"/>
<ellipse cx="1610.3" cy="600.4" rx="0.97" ry="0.89" opacity="0.28"/>
<ellipse cx="1414.4" cy="544.8" rx="2.62" ry="2.86" opacity="0.70"/>
<ellipse cx="1465.0" cy="425.0" rx="2.76" ry="2.83" opacity="0.49"/>
<ellipse cx="1632.2" cy="273.5" rx="0.76" ry="0.49" opacity="0.38"/>
<ellipse cx="1456.6" cy="445.1" rx="0.86" ry="0.90" opacity="0.51"/>
<ellipse cx="1468.6" cy="677.9" rx="0.64" ry="0.41" opacity="0.76"/>
<ellipse cx="1383.3" cy="551.6" rx="0.60" ry="0.71" opacity="0.83"/>
<ellipse cx="1472.3" cy="533.0" rx="0.76" ry="0.77" opacity="0.47"/>
<ellipse cx="1648.8" cy="349.8" rx="0.69" ry="0.66" opacity="0.28"/>
<ellipse cx="1535.4" cy="389.4" rx="2.70" ry="2.56" opacity="0.28"/>
<ellipse cx="1502.8" cy="283.3" rx="1.01" ry="0.69" opacity="0.63"/>
<ellipse cx="1520.5" cy="507.8" rx="0.79" ry="0.79" opacity="0.28"/>
<ellipse cx="1745.2" cy="549.0" rx="0.52" ry="0.70" opacity="0.28"/>
<ellipse cx="1466.0" cy="280.4" rx="1.30" ry="0.92" opacity="0.75"/>
<ellipse cx="1594.1" cy="377.1" rx="0.77" ry="0.73" opacity="0.28"/>
<ellipse cx="1389.2" cy="485.5" rx="0.72" ry="0.88" opacity="0.77"/>
<ellipse cx="1712.1" cy="562.2" rx="6.37" ry="7.34" opacity="0.28"/>
<ellipse cx="1648.8" cy="611.9" rx="2.51" ry="2.35" opacity="0.28"/>
<ellipse cx="1630.4" cy="309.9" rx="3.42" ry="2.82" opacity="0.28"/>
<ellipse cx="1596.6" cy="245.0" rx="2.92" ry="1.05" opacity="0.54"/>
<ellipse cx="1384.2" cy="578.7" rx="0.67" ry="0.77" opacity="0.86"/>
<ellipse cx="1627.0" cy="331.8" rx="0.74" ry="0.65" opacity="0.28"/>
<ellipse cx="1552.4" cy="544.2" rx="0.80" ry="0.77" opacity="0.28"/>
<ellipse cx="1717.9" cy="536.0" rx="0.90" ry="1.08" opacity="0.28"/>
<ellipse cx="1531.9" cy="359.3" rx="1.00" ry="0.90" opacity="0.34"/>
<ellipse cx="1531.8" cy="609.5" rx="0.79" ry="0.67" opacity="0.39"/>
<ellipse cx="1510.6" cy="364.9" rx="0.79" ry="0.73" opacity="0.40"/>
<ellipse cx="1437.4" cy="504.5" rx="2.45" ry="2.64" opacity="0.59"/>
<ellipse cx="1717.3" cy="505.2" rx="4.00" ry="4.92" opacity="0.28"/>
<ellipse cx="1694.1" cy="440.8" rx="1.12" ry="1.28" opacity="0.28"/>
<ellipse cx="1559.1" cy="275.5" rx="0.80" ry="0.48" opacity="0.50"/>
<ellipse cx="1618.8" cy="413.4" rx="0.76" ry="0.77" opacity="0.28"/>
<ellipse cx="1636.2" cy="387.1" rx="0.78" ry="0.78" opacity="0.28"/>
<ellipse cx="1507.5" cy="259.6" rx="0.97" ry="0.51" opacity="0.68"/>
<ellipse cx="1587.4" cy="532.5" rx="3.46" ry="3.43" opacity="0.28"/>
<ellipse cx="1568.2" cy="592.9" rx="0.79" ry="0.71" opacity="0.28"/>
<ellipse cx="1534.2" cy="395.2" rx="0.80" ry="0.76" opacity="0.28"/>
<ellipse cx="1569.9" cy="302.1" rx="0.77" ry="0.57" opacity="0.39"/>
<ellipse cx="1658.3" cy="330.2" rx="2.78" ry="2.57" opacity="0.28"/>
<ellipse cx="1557.4" cy="339.2" rx="1.21" ry="1.02" opacity="0.32"/>
<ellipse cx="1606.6" cy="397.2" rx="2.09" ry="2.05" opacity="0.28"/>
<ellipse cx="1379.7" cy="338.4" rx="0.53" ry="0.58" opacity="0.70"/>
<ellipse cx="1612.5" cy="696.7" rx="0.66" ry="0.32" opacity="0.48"/>
<ellipse cx="1598.6" cy="357.1" rx="4.42" ry="4.06" opacity="0.28"/>
<ellipse cx="1751.6" cy="565.7" rx="3.00" ry="4.09" opacity="0.28"/>
<ellipse cx="1525.2" cy="648.5" rx="0.90" ry="0.66" opacity="0.51"/>
<ellipse cx="1584.3" cy="539.7" rx="3.43" ry="3.37" opacity="0.28"/>
<ellipse cx="1501.9" cy="379.4" rx="0.77" ry="0.73" opacity="0.41"/>
<ellipse cx="1446.3" cy="347.3" rx="0.75" ry="0.72" opacity="0.66"/>
<ellipse cx="1391.1" cy="356.9" rx="2.35" ry="2.57" opacity="0.85"/>
<ellipse cx="1377.8" cy="338.6" rx="0.52" ry="0.58" opacity="0.70"/>
<ellipse cx="1571.9" cy="599.9" rx="0.79" ry="0.69" opacity="0.28"/>
<ellipse cx="1519.2" cy="525.6" rx="1.70" ry="1.68" opacity="0.28"/>
<ellipse cx="1686.4" cy="431.2" rx="0.68" ry="0.76" opacity="0.28"/>
<ellipse cx="1566.9" cy="273.8" rx="1.22" ry="0.73" opacity="0.49"/>
<ellipse cx="1722.4" cy="549.7" rx="1.44" ry="1.74" opacity="0.28"/>
<ellipse cx="1691.0" cy="483.5" rx="1.23" ry="1.43" opacity="0.28"/>
<ellipse cx="1569.6" cy="302.0" rx="0.82" ry="0.60" opacity="0.39"/>
<ellipse cx="1453.4" cy="283.0" rx="0.73" ry="0.54" opacity="0.78"/>
<ellipse cx="1747.6" cy="636.0" rx="0.97" ry="1.24" opacity="0.28"/>
<ellipse cx="1506.2" cy="395.5" rx="0.83" ry="0.81" opacity="0.37"/>
<ellipse cx="1660.3" cy="605.7" rx="0.67" ry="0.65" opacity="0.28"/>
<ellipse cx="1517.3" cy="514.9" rx="1.91" ry="1.91" opacity="0.28"/>
<ellipse cx="1518.6" cy="601.4" rx="0.77" ry="0.68" opacity="0.41"/>
<ellipse cx="1625.4" cy="312.6" rx="3.33" ry="2.76" opacity="0.28"/>
<ellipse cx="1754.8" cy="345.7" rx="0.92" ry="1.32" opacity="0.28"/>
<ellipse cx="1585.0" cy="287.2" rx="2.58" ry="1.76" opacity="0.41"/>
<ellipse cx="1502.4" cy="390.5" rx="1.06" ry="1.03" opacity="0.39"/>
<ellipse cx="1459.1" cy="396.5" rx="1.24" ry="1.25" opacity="0.54"/>
<ellipse cx="1597.0" cy="486.3" rx="3.19" ry="3.23" opacity="0.28"/>
<ellipse cx="1718.1" cy="549.0" rx="2.09" ry="2.48" opacity="0.28"/>
<ellipse cx="1386.7" cy="440.9" rx="2.49" ry="2.99" opacity="0.79"/>
<ellipse cx="1396.7" cy="441.5" rx="0.66" ry="0.77" opacity="0.75"/>
<ellipse cx="1564.9" cy="347.0" rx="1.81" ry="1.57" opacity="0.28"/>
<ellipse cx="1620.1" cy="608.5" rx="1.07" ry="0.97" opacity="0.28"/>
<ellipse cx="1634.8" cy="351.8" rx="0.71" ry="0.67" opacity="0.28"/>
<ellipse cx="1761.8" cy="574.4" rx="0.52" ry="0.76" opacity="0.28"/>
<ellipse cx="1536.9" cy="673.4" rx="0.92" ry="0.56" opacity="0.56"/>
<ellipse cx="1419.9" cy="592.9" rx="0.64" ry="0.65" opacity="0.74"/>
<ellipse cx="1606.6" cy="375.8" rx="1.45" ry="1.39" opacity="0.28"/>
<ellipse cx="1358.6" cy="402.0" rx="1.04" ry="1.35" opacity="0.70"/>
<ellipse cx="1479.1" cy="530.2" rx="4.11" ry="4.15" opacity="0.44"/>
<ellipse cx="1609.4" cy="392.0" rx="1.46" ry="1.43" opacity="0.28"/>
<ellipse cx="1597.3" cy="691.0" rx="2.15" ry="1.13" opacity="0.48"/>
<ellipse cx="1548.4" cy="535.5" rx="1.25" ry="1.21" opacity="0.28"/>
<ellipse cx="1399.4" cy="567.6" rx="3.68" ry="4.08" opacity="0.79"/>
<ellipse cx="1421.1" cy="527.5" rx="0.69" ry="0.76" opacity="0.66"/>
<ellipse cx="1359.7" cy="397.1" rx="3.20" ry="4.10" opacity="0.70"/>
<ellipse cx="1369.2" cy="469.7" rx="0.85" ry="1.12" opacity="0.85"/>
<ellipse cx="1718.7" cy="454.1" rx="0.66" ry="0.83" opacity="0.28"/>
<ellipse cx="1742.9" cy="575.8" rx="3.03" ry="3.90" opacity="0.28"/>
<ellipse cx="1561.2" cy="305.2" rx="0.79" ry="0.58" opacity="0.41"/>
<ellipse cx="1603.1" cy="651.2" rx="0.73" ry="0.55" opacity="0.33"/>
<ellipse cx="1421.9" cy="629.6" rx="0.87" ry="0.80" opacity="0.80"/>
<ellipse cx="1533.8" cy="479.4" rx="0.89" ry="0.89" opacity="0.28"/>
<ellipse cx="1381.8" cy="454.7" rx="0.69" ry="0.86" opacity="0.80"/>
<ellipse cx="1592.3" cy="242.7" rx="1.19" ry="0.39" opacity="0.55"/>
<ellipse cx="1760.3" cy="583.1" rx="0.60" ry="0.86" opacity="0.28"/>
<ellipse cx="1563.4" cy="366.0" rx="1.15" ry="1.04" opacity="0.28"/>
<ellipse cx="1577.1" cy="462.0" rx="0.80" ry="0.80" opacity="0.28"/>
<ellipse cx="1576.0" cy="302.8" rx="0.77" ry="0.57" opacity="0.38"/>
<ellipse cx="1523.0" cy="409.3" rx="0.84" ry="0.82" opacity="0.28"/>
<ellipse cx="1687.5" cy="612.1" rx="2.49" ry="2.50" opacity="0.28"/>
<ellipse cx="1696.4" cy="630.5" rx="0.56" ry="0.55" opacity="0.28"/>
<ellipse cx="1641.1" cy="672.9" rx="1.66" ry="1.15" opacity="0.35"/>
<ellipse cx="1431.6" cy="463.4" rx="0.84" ry="0.92" opacity="0.60"/>
<ellipse cx="1613.0" cy="666.2" rx="2.41" ry="1.69" opacity="0.37"/>
<ellipse cx="1569.3" cy="482.7" rx="0.81" ry="0.81" opacity="0.28"/>
<ellipse cx="1614.1" cy="337.3" rx="3.59" ry="3.19" opacity="0.28"/>
<ellipse cx="1756.2" cy="608.5" rx="1.47" ry="2.05" opacity="0.28"/>
<ellipse cx="1591.1" cy="356.7" rx="0.93" ry="0.84" opacity="0.28"/>
<ellipse cx="1511.2" cy="372.9" rx="0.77" ry="0.73" opacity="0.39"/>
<ellipse cx="1516.3" cy="629.0" rx="2.98" ry="2.42" opacity="0.49"/>
<ellipse cx="1422.0" cy="558.3" rx="0.67" ry="0.72" opacity="0.69"/>
<ellipse cx="1516.9" cy="306.9" rx="0.76" ry="0.58" opacity="0.52"/>
<ellipse cx="1600.1" cy="650.2" rx="0.73" ry="0.55" opacity="0.33"/>
<ellipse cx="1548.8" cy="491.6" rx="0.82" ry="0.82" opacity="0.28"/>
<ellipse cx="1399.7" cy="300.5" rx="0.52" ry="0.47" opacity="0.70"/>
<ellipse cx="1408.6" cy="462.6" rx="4.19" ry="4.83" opacity="0.69"/>
<ellipse cx="1450.0" cy="502.4" rx="1.31" ry="1.38" opacity="0.53"/>
<ellipse cx="1674.6" cy="341.3" rx="0.68" ry="0.67" opacity="0.28"/>
<ellipse cx="1475.1" cy="613.3" rx="1.64" ry="1.48" opacity="0.58"/>
<ellipse cx="1511.3" cy="444.2" rx="1.43" ry="1.43" opacity="0.29"/>
<ellipse cx="1555.9" cy="585.3" rx="0.80" ry="0.72" opacity="0.28"/>
<ellipse cx="1493.6" cy="644.8" rx="1.85" ry="1.45" opacity="0.60"/>
<ellipse cx="1529.4" cy="349.3" rx="0.79" ry="0.69" opacity="0.38"/>
<ellipse cx="1552.6" cy="276.4" rx="0.82" ry="0.49" opacity="0.52"/>
<ellipse cx="1465.4" cy="252.8" rx="3.72" ry="1.77" opacity="0.82"/>
<ellipse cx="1505.0" cy="316.7" rx="0.75" ry="0.61" opacity="0.53"/>
<ellipse cx="1422.5" cy="385.8" rx="0.75" ry="0.79" opacity="0.69"/>
<ellipse cx="1610.5" cy="247.3" rx="3.14" ry="1.19" opacity="0.51"/>
<ellipse cx="1377.5" cy="357.3" rx="2.73" ry="3.12" opacity="0.70"/>
<ellipse cx="1433.8" cy="509.7" rx="2.66" ry="2.87" opacity="0.60"/>
<ellipse cx="1649.8" cy="313.7" rx="3.84" ry="3.31" opacity="0.28"/>
<ellipse cx="1778.9" cy="587.0" rx="0.81" ry="1.51" opacity="0.28"/>
<ellipse cx="1438.7" cy="399.4" rx="1.71" ry="1.77" opacity="0.62"/>
<ellipse cx="1452.6" cy="371.0" rx="4.00" ry="3.96" opacity="0.60"/>
<ellipse cx="1606.3" cy="379.5" rx="1.32" ry="1.27" opacity="0.28"/>
<ellipse cx="1560.3" cy="268.7" rx="1.15" ry="0.64" opacity="0.52"/>
<ellipse cx="1696.3" cy="601.0" rx="1.41" ry="1.48" opacity="0.28"/>
<ellipse cx="1713.7" cy="656.1" rx="0.52" ry="0.48" opacity="0.28"/>
<ellipse cx="1722.3" cy="585.5" rx="2.27" ry="2.64" opacity="0.28"/>
<ellipse cx="1544.2" cy="431.0" rx="3.87" ry="3.81" opacity="0.28"/>
<ellipse cx="1631.6" cy="651.8" rx="3.19" ry="2.52" opacity="0.29"/>
<ellipse cx="1587.3" cy="255.4" rx="0.72" ry="0.34" opacity="0.52"/>
<ellipse cx="1463.9" cy="253.6" rx="0.63" ry="0.31" opacity="0.82"/>
<ellipse cx="1589.4" cy="255.8" rx="1.06" ry="0.51" opacity="0.51"/>
<ellipse cx="1469.8" cy="291.6" rx="0.68" ry="0.51" opacity="0.71"/>
<ellipse cx="1702.1" cy="575.8" rx="2.10" ry="2.32" opacity="0.28"/>
<ellipse cx="1639.4" cy="631.2" rx="1.98" ry="1.73" opacity="0.28"/>
<ellipse cx="1693.8" cy="590.5" rx="0.67" ry="0.71" opacity="0.28"/>
<ellipse cx="1545.9" cy="659.5" rx="2.10" ry="1.40" opacity="0.49"/>
<ellipse cx="1743.7" cy="539.0" rx="1.73" ry="2.30" opacity="0.28"/>
<ellipse cx="1607.5" cy="437.1" rx="1.31" ry="1.32" opacity="0.28"/>
<ellipse cx="1388.4" cy="505.7" rx="1.53" ry="1.85" opacity="0.78"/>
<ellipse cx="1535.9" cy="646.4" rx="2.17" ry="1.58" opacity="0.48"/>
<ellipse cx="1436.8" cy="682.1" rx="0.58" ry="0.35" opacity="0.87"/>
<ellipse cx="1484.4" cy="446.8" rx="3.92" ry="3.99" opacity="0.40"/>
<ellipse cx="1677.3" cy="637.7" rx="0.60" ry="0.55" opacity="0.28"/>
<ellipse cx="1490.3" cy="380.6" rx="0.77" ry="0.74" opacity="0.45"/>
<ellipse cx="1386.6" cy="593.0" rx="0.70" ry="0.79" opacity="0.87"/>
<ellipse cx="1479.4" cy="293.5" rx="0.69" ry="0.52" opacity="0.67"/>
<ellipse cx="1540.4" cy="401.4" rx="0.89" ry="0.85" opacity="0.28"/>
<ellipse cx="1712.3" cy="603.0" rx="0.81" ry="0.88" opacity="0.28"/>
<ellipse cx="1658.8" cy="364.2" rx="0.82" ry="0.82" opacity="0.28"/>
<ellipse cx="1361.7" cy="460.0" rx="0.69" ry="0.94" opacity="0.70"/>
<ellipse cx="1497.4" cy="288.0" rx="0.91" ry="0.65" opacity="0.63"/>
<ellipse cx="1437.8" cy="665.7" rx="0.74" ry="0.54" opacity="0.82"/>
<ellipse cx="1623.0" cy="543.2" rx="2.64" ry="2.65" opacity="0.28"/>
<ellipse cx="1518.6" cy="556.9" rx="3.75" ry="3.60" opacity="0.32"/>
<ellipse cx="1617.9" cy="480.7" rx="1.35" ry="1.40" opacity="0.28"/>
<ellipse cx="1494.7" cy="589.1" rx="1.56" ry="1.45" opacity="0.47"/>
<ellipse cx="1757.5" cy="340.3" rx="0.38" ry="0.57" opacity="0.28"/>
<ellipse cx="1655.4" cy="408.6" rx="1.43" ry="1.49" opacity="0.28"/>
<ellipse cx="1545.8" cy="685.8" rx="0.80" ry="0.41" opacity="0.57"/>
<ellipse cx="1390.4" cy="514.5" rx="0.69" ry="0.82" opacity="0.78"/>
<ellipse cx="1481.1" cy="255.2" rx="0.65" ry="0.33" opacity="0.77"/>
<ellipse cx="1469.5" cy="623.8" rx="0.85" ry="0.75" opacity="0.63"/>
<ellipse cx="1418.1" cy="475.7" rx="0.75" ry="0.86" opacity="0.66"/>
<ellipse cx="1692.7" cy="396.6" rx="0.66" ry="0.74" opacity="0.28"/>
<ellipse cx="1641.4" cy="659.3" rx="4.36" ry="3.35" opacity="0.30"/>
<ellipse cx="1595.8" cy="304.8" rx="1.37" ry="1.05" opacity="0.33"/>
<ellipse cx="1550.1" cy="424.4" rx="4.88" ry="4.78" opacity="0.28"/>
<ellipse cx="1580.9" cy="480.4" rx="0.79" ry="0.80" opacity="0.28"/>
<ellipse cx="1424.8" cy="516.5" rx="0.71" ry="0.77" opacity="0.64"/>
<ellipse cx="1477.7" cy="484.0" rx="1.49" ry="1.54" opacity="0.42"/>
<ellipse cx="1681.2" cy="659.2" rx="1.87" ry="1.53" opacity="0.28"/>
<ellipse cx="1403.8" cy="424.9" rx="0.67" ry="0.75" opacity="0.73"/>
<ellipse cx="1504.6" cy="570.9" rx="0.91" ry="0.87" opacity="0.40"/>
<ellipse cx="1489.9" cy="378.3" rx="2.93" ry="2.83" opacity="0.45"/>
<ellipse cx="1779.1" cy="366.8" rx="0.68" ry="1.39" opacity="0.28"/>
<ellipse cx="1381.9" cy="506.1" rx="0.68" ry="0.83" opacity="0.81"/>
<ellipse cx="1347.5" cy="453.4" rx="0.53" ry="0.77" opacity="0.70"/>
<ellipse cx="1493.1" cy="629.4" rx="0.73" ry="0.61" opacity="0.56"/>
<ellipse cx="1381.2" cy="405.4" rx="0.72" ry="0.85" opacity="0.83"/>
<ellipse cx="1565.0" cy="403.8" rx="2.22" ry="2.14" opacity="0.28"/>
<ellipse cx="1366.6" cy="396.0" rx="0.57" ry="0.70" opacity="0.70"/>
<ellipse cx="1496.8" cy="671.5" rx="4.63" ry="3.01" opacity="0.66"/>
<ellipse cx="1466.5" cy="339.1" rx="1.69" ry="1.55" opacity="0.61"/>
<ellipse cx="1582.0" cy="488.6" rx="0.79" ry="0.80" opacity="0.28"/>
<ellipse cx="1571.9" cy="414.8" rx="2.98" ry="2.92" opacity="0.28"/>
<ellipse cx="1706.2" cy="430.6" rx="0.95" ry="1.12" opacity="0.28"/>
<ellipse cx="1676.5" cy="547.9" rx="1.61" ry="1.72" opacity="0.28"/>
<ellipse cx="1741.6" cy="505.1" rx="2.23" ry="3.04" opacity="0.28"/>
<ellipse cx="1483.9" cy="383.5" rx="0.81" ry="0.79" opacity="0.47"/>
<ellipse cx="1645.3" cy="687.9" rx="0.60" ry="0.34" opacity="0.41"/>
<ellipse cx="1491.8" cy="461.5" rx="0.87" ry="0.88" opacity="0.36"/>
<ellipse cx="1778.0" cy="402.6" rx="1.59" ry="2.87" opacity="0.28"/>
<ellipse cx="1636.1" cy="284.7" rx="1.20" ry="0.86" opacity="0.33"/>
<ellipse cx="1521.7" cy="632.6" rx="1.19" ry="0.95" opacity="0.48"/>
<ellipse cx="1448.9" cy="546.6" rx="0.75" ry="0.77" opacity="0.57"/>
<ellipse cx="1766.3" cy="616.8" rx="0.34" ry="0.55" opacity="0.28"/>
<ellipse cx="1407.8" cy="504.5" rx="4.22" ry="4.82" opacity="0.70"/>
<ellipse cx="1451.4" cy="531.8" rx="0.73" ry="0.76" opacity="0.55"/>
<ellipse cx="1734.2" cy="570.7" rx="0.58" ry="0.72" opacity="0.28"/>
<ellipse cx="1418.4" cy="584.2" rx="0.70" ry="0.72" opacity="0.74"/>
<ellipse cx="1709.0" cy="662.2" rx="0.49" ry="0.42" opacity="0.28"/>
<ellipse cx="1364.8" cy="571.0" rx="0.56" ry="0.70" opacity="0.70"/>
<ellipse cx="1368.6" cy="535.1" rx="1.36" ry="1.72" opacity="0.88"/>
<ellipse cx="1498.0" cy="236.5" rx="0.67" ry="0.19" opacity="0.78"/>
<ellipse cx="1360.7" cy="458.7" rx="1.09" ry="1.48" opacity="0.70"/>
<ellipse cx="1616.0" cy="596.4" rx="2.81" ry="2.61" opacity="0.28"/>
<ellipse cx="1419.6" cy="433.0" rx="3.41" ry="3.75" opacity="0.66"/>
<ellipse cx="1565.8" cy="272.7" rx="0.83" ry="0.49" opacity="0.50"/>
<ellipse cx="1511.8" cy="674.0" rx="0.74" ry="0.46" opacity="0.62"/>
<ellipse cx="1418.6" cy="522.5" rx="1.23" ry="1.36" opacity="0.67"/>
<ellipse cx="1406.2" cy="536.5" rx="3.56" ry="3.99" opacity="0.73"/>
<ellipse cx="1509.4" cy="486.4" rx="2.15" ry="2.16" opacity="0.29"/>
<ellipse cx="1649.0" cy="426.1" rx="0.74" ry="0.77" opacity="0.28"/>
<ellipse cx="1481.7" cy="453.1" rx="0.78" ry="0.79" opacity="0.41"/>
<ellipse cx="1661.0" cy="531.2" rx="6.55" ry="6.93" opacity="0.28"/>
<ellipse cx="1451.6" cy="653.0" rx="2.68" ry="2.11" opacity="0.75"/>
<ellipse cx="1538.5" cy="687.8" rx="0.78" ry="0.40" opacity="0.60"/>
<ellipse cx="1682.5" cy="418.6" rx="0.89" ry="0.98" opacity="0.28"/>
<ellipse cx="1374.2" cy="456.9" rx="1.29" ry="1.65" opacity="0.83"/>
<ellipse cx="1479.8" cy="492.0" rx="1.74" ry="1.79" opacity="0.41"/>
<ellipse cx="1480.6" cy="483.5" rx="1.24" ry="1.27" opacity="0.41"/>
<ellipse cx="1496.2" cy="280.2" rx="0.71" ry="0.48" opacity="0.66"/>
<ellipse cx="1620.8" cy="453.1" rx="0.84" ry="0.86" opacity="0.28"/>
<ellipse cx="1437.5" cy="601.2" rx="0.67" ry="0.65" opacity="0.69"/>
<ellipse cx="1576.4" cy="353.2" rx="0.81" ry="0.72" opacity="0.28"/>
<ellipse cx="1658.6" cy="330.4" rx="2.32" ry="2.15" opacity="0.28"/>
<ellipse cx="1508.8" cy="657.0" rx="1.83" ry="1.31" opacity="0.58"/>
<ellipse cx="1618.2" cy="414.0" rx="4.05" ry="4.08" opacity="0.28"/>
<ellipse cx="1620.2" cy="245.3" rx="1.71" ry="0.57" opacity="0.50"/>
<ellipse cx="1494.5" cy="575.6" rx="2.00" ry="1.90" opacity="0.44"/>
<ellipse cx="1579.1" cy="257.5" rx="0.77" ry="0.37" opacity="0.52"/>
<ellipse cx="1497.1" cy="447.5" rx="0.78" ry="0.79" opacity="0.35"/>
<ellipse cx="1598.4" cy="376.3" rx="1.48" ry="1.41" opacity="0.28"/>
<ellipse cx="1658.0" cy="430.6" rx="0.84" ry="0.89" opacity="0.28"/>
<ellipse cx="1705.6" cy="613.4" rx="1.57" ry="1.64" opacity="0.28"/>
<ellipse cx="1497.5" cy="634.9" rx="1.47" ry="1.19" opacity="0.56"/>
<ellipse cx="1467.8" cy="523.9" rx="1.11" ry="1.14" opacity="0.48"/>
<ellipse cx="1467.1" cy="311.7" rx="3.02" ry="2.53" opacity="0.67"/>
<ellipse cx="1413.3" cy="389.7" rx="3.75" ry="4.04" opacity="0.72"/>
<ellipse cx="1707.0" cy="360.8" rx="1.21" ry="1.34" opacity="0.28"/>
<ellipse cx="1562.4" cy="245.3" rx="0.84" ry="0.30" opacity="0.60"/>
<ellipse cx="1457.1" cy="378.1" rx="4.66" ry="4.63" opacity="0.57"/>
<ellipse cx="1371.4" cy="511.3" rx="0.59" ry="0.76" opacity="0.85"/>
<ellipse cx="1512.0" cy="635.6" rx="0.92" ry="0.73" opacity="0.52"/>
<ellipse cx="1547.6" cy="415.4" rx="0.94" ry="0.91" opacity="0.28"/>
<ellipse cx="1692.6" cy="583.5" rx="0.77" ry="0.82" opacity="0.28"/>
<ellipse cx="1694.2" cy="410.9" rx="0.74" ry="0.83" opacity="0.28"/>
<ellipse cx="1670.2" cy="362.5" rx="0.97" ry="0.99" opacity="0.28"/>
<ellipse cx="1605.9" cy="576.8" rx="0.76" ry="0.73" opacity="0.28"/>
<ellipse cx="1575.2" cy="248.1" rx="0.77" ry="0.31" opacity="0.56"/>
<ellipse cx="1434.5" cy="510.4" rx="0.74" ry="0.80" opacity="0.60"/>
<ellipse cx="1451.5" cy="273.2" rx="1.05" ry="0.70" opacity="0.81"/>
<ellipse cx="1621.9" cy="383.8" rx="1.61" ry="1.58" opacity="0.28"/>
<ellipse cx="1521.2" cy="703.7" rx="1.44" ry="0.55" opacity="0.69"/>
<ellipse cx="1437.1" cy="320.3" rx="0.76" ry="0.69" opacity="0.75"/>
<ellipse cx="1352.8" cy="506.6" rx="0.58" ry="0.81" opacity="0.70"/>
<ellipse cx="1543.6" cy="502.0" rx="1.82" ry="1.81" opacity="0.28"/>
<ellipse cx="1443.5" cy="502.3" rx="6.93" ry="7.40" opacity="0.56"/>
<ellipse cx="1471.2" cy="292.5" rx="0.71" ry="0.54" opacity="0.70"/>
<ellipse cx="1361.0" cy="407.4" rx="0.62" ry="0.80" opacity="0.70"/>
<ellipse cx="1433.9" cy="426.7" rx="0.72" ry="0.77" opacity="0.61"/>
<ellipse cx="1620.1" cy="528.5" rx="7.89" ry="7.99" opacity="0.28"/>
<ellipse cx="1549.0" cy="609.0" rx="2.45" ry="2.05" opacity="0.34"/>
<ellipse cx="1671.8" cy="648.3" rx="0.60" ry="0.51" opacity="0.28"/>
<ellipse cx="1636.8" cy="595.1" rx="2.21" ry="2.11" opacity="0.28"/>
<ellipse cx="1814.5" cy="487.3" rx="0.28" ry="1.20" opacity="0.28"/>
<ellipse cx="1483.8" cy="413.4" rx="1.04" ry="1.04" opacity="0.43"/>
<ellipse cx="1480.2" cy="602.1" rx="1.06" ry="0.97" opacity="0.54"/>
<ellipse cx="1511.2" cy="538.1" rx="1.15" ry="1.13" opacity="0.32"/>
<ellipse cx="1685.3" cy="595.5" rx="1.59" ry="1.64" opacity="0.28"/>
<ellipse cx="1541.6" cy="312.0" rx="0.86" ry="0.65" opacity="0.44"/>
<ellipse cx="1665.6" cy="666.0" rx="0.88" ry="0.67" opacity="0.30"/>
<ellipse cx="1375.3" cy="387.9" rx="2.15" ry="2.56" opacity="0.87"/>
<ellipse cx="1385.8" cy="635.5" rx="0.50" ry="0.51" opacity="0.70"/>
<ellipse cx="1755.6" cy="353.9" rx="0.45" ry="0.65" opacity="0.28"/>
<ellipse cx="1438.6" cy="275.0" rx="0.59" ry="0.41" opacity="0.84"/>
<ellipse cx="1543.7" cy="368.5" rx="3.20" ry="2.90" opacity="0.28"/>
<ellipse cx="1584.9" cy="499.0" rx="0.94" ry="0.94" opacity="0.28"/>
<ellipse cx="1545.6" cy="316.5" rx="0.85" ry="0.66" opacity="0.41"/>
<ellipse cx="1641.2" cy="504.4" rx="1.98" ry="2.07" opacity="0.28"/>
<ellipse cx="1518.4" cy="249.8" rx="0.94" ry="0.40" opacity="0.69"/>
<ellipse cx="1432.0" cy="423.3" rx="1.17" ry="1.25" opacity="0.62"/>
<ellipse cx="1406.7" cy="358.9" rx="0.70" ry="0.74" opacity="0.79"/>
<ellipse cx="1620.4" cy="442.0" rx="0.95" ry="0.97" opacity="0.28"/>
<ellipse cx="1606.5" cy="421.0" rx="0.85" ry="0.85" opacity="0.28"/>
<ellipse cx="1470.8" cy="260.0" rx="3.79" ry="2.09" opacity="0.78"/>
<ellipse cx="1480.9" cy="580.9" rx="0.77" ry="0.74" opacity="0.50"/>
<ellipse cx="1740.0" cy="548.5" rx="2.65" ry="3.44" opacity="0.28"/>
<ellipse cx="1574.2" cy="327.1" rx="1.20" ry="0.99" opacity="0.30"/>
<ellipse cx="1375.0" cy="382.1" rx="0.61" ry="0.73" opacity="0.70"/>
<ellipse cx="1655.2" cy="362.6" rx="3.31" ry="3.28" opacity="0.28"/>
<ellipse cx="1638.1" cy="683.2" rx="2.17" ry="1.33" opacity="0.40"/>
<ellipse cx="1630.7" cy="678.4" rx="4.01" ry="2.59" opacity="0.39"/>
<ellipse cx="1701.1" cy="595.3" rx="0.61" ry="0.65" opacity="0.28"/>
<ellipse cx="1539.2" cy="605.4" rx="2.63" ry="2.26" opacity="0.36"/>
<ellipse cx="1584.9" cy="527.5" rx="0.94" ry="0.93" opacity="0.28"/>
<ellipse cx="1669.5" cy="442.8" rx="1.53" ry="1.67" opacity="0.28"/>
<ellipse cx="1387.4" cy="361.8" rx="0.58" ry="0.65" opacity="0.86"/>
<ellipse cx="1598.2" cy="311.3" rx="0.87" ry="0.70" opacity="0.30"/>
<ellipse cx="1541.4" cy="503.7" rx="0.80" ry="0.80" opacity="0.28"/>
<ellipse cx="1675.9" cy="392.7" rx="2.14" ry="2.28" opacity="0.28"/>
<ellipse cx="1733.3" cy="568.8" rx="0.67" ry="0.83" opacity="0.28"/>
<ellipse cx="1488.0" cy="527.7" rx="4.06" ry="4.08" opacity="0.40"/>
<ellipse cx="1775.8" cy="573.3" rx="0.86" ry="1.48" opacity="0.28"/>
<ellipse cx="1518.8" cy="468.5" rx="0.94" ry="0.94" opacity="0.28"/>
<ellipse cx="1542.4" cy="268.4" rx="1.02" ry="0.56" opacity="0.57"/>
<ellipse cx="1617.0" cy="289.0" rx="1.10" ry="0.79" opacity="0.34"/>
<ellipse cx="1775.2" cy="601.7" rx="0.69" ry="1.28" opacity="0.28"/>
<ellipse cx="1712.7" cy="395.2" rx="2.46" ry="2.88" opacity="0.28"/>
<ellipse cx="1751.8" cy="436.5" rx="0.54" ry="0.78" opacity="0.28"/>
<ellipse cx="1716.7" cy="486.3" rx="3.26" ry="4.09" opacity="0.28"/>
<ellipse cx="1729.0" cy="610.4" rx="1.16" ry="1.34" opacity="0.28"/>
<ellipse cx="1422.2" cy="339.3" rx="6.71" ry="6.59" opacity="0.76"/>
<ellipse cx="1582.8" cy="484.0" rx="2.59" ry="2.61" opacity="0.28"/>
<ellipse cx="1394.8" cy="435.2" rx="3.34" ry="3.91" opacity="0.76"/>
<ellipse cx="1629.1" cy="455.8" rx="3.81" ry="3.95" opacity="0.28"/>
<ellipse cx="1437.0" cy="631.5" rx="1.26" ry="1.13" opacity="0.75"/>
<ellipse cx="1455.6" cy="391.1" rx="3.31" ry="3.35" opacity="0.56"/>
<ellipse cx="1369.4" cy="464.0" rx="0.61" ry="0.81" opacity="0.85"/>
<ellipse cx="1384.6" cy="590.3" rx="0.56" ry="0.63" opacity="0.87"/>
<ellipse cx="1592.8" cy="516.4" rx="2.60" ry="2.61" opacity="0.28"/>
<ellipse cx="1641.5" cy="460.7" rx="0.81" ry="0.85" opacity="0.28"/>
<ellipse cx="1412.8" cy="657.5" rx="0.73" ry="0.60" opacity="0.70"/>
<ellipse cx="1632.5" cy="475.1" rx="0.96" ry="1.01" opacity="0.28"/>
<ellipse cx="1395.5" cy="392.4" rx="0.69" ry="0.78" opacity="0.79"/>
<ellipse cx="1349.4" cy="509.7" rx="1.31" ry="1.86" opacity="0.70"/>
<ellipse cx="1389.8" cy="317.2" rx="0.52" ry="0.52" opacity="0.70"/>
<ellipse cx="1427.8" cy="616.9" rx="0.63" ry="0.60" opacity="0.76"/>
<ellipse cx="1602.8" cy="496.6" rx="1.40" ry="1.42" opacity="0.28"/>
<ellipse cx="1484.9" cy="347.8" rx="0.74" ry="0.68" opacity="0.53"/>
<ellipse cx="1544.1" cy="343.9" rx="1.47" ry="1.25" opacity="0.34"/>
<ellipse cx="1689.0" cy="545.1" rx="0.78" ry="0.86" opacity="0.28"/>
<ellipse cx="1490.1" cy="456.1" rx="2.70" ry="2.75" opacity="0.37"/>
<ellipse cx="1633.0" cy="305.6" rx="1.00" ry="0.81" opacity="0.28"/>
<ellipse cx="1599.9" cy="374.6" rx="0.93" ry="0.88" opacity="0.28"/>
<ellipse cx="1697.4" cy="600.7" rx="1.15" ry="1.21" opacity="0.28"/>
<ellipse cx="1560.7" cy="394.6" rx="0.80" ry="0.76" opacity="0.28"/>
<ellipse cx="1775.8" cy="517.5" rx="2.16" ry="3.69" opacity="0.28"/>
<ellipse cx="1367.9" cy="576.9" rx="0.53" ry="0.65" opacity="0.70"/>
<ellipse cx="1507.7" cy="357.7" rx="0.78" ry="0.71" opacity="0.43"/>
<ellipse cx="1551.8" cy="380.2" rx="0.80" ry="0.74" opacity="0.28"/>
<ellipse cx="1368.3" cy="459.2" rx="0.66" ry="0.86" opacity="0.86"/>
<ellipse cx="1479.9" cy="297.1" rx="0.76" ry="0.58" opacity="0.66"/>
<ellipse cx="1634.4" cy="605.0" rx="3.44" ry="3.21" opacity="0.28"/>
<ellipse cx="1509.2" cy="404.8" rx="3.09" ry="3.03" opacity="0.34"/>
<ellipse cx="1679.6" cy="686.8" rx="1.70" ry="0.97" opacity="0.38"/>
<ellipse cx="1546.4" cy="246.7" rx="3.53" ry="1.32" opacity="0.63"/>
<ellipse cx="1662.0" cy="414.2" rx="2.30" ry="2.44" opacity="0.28"/>
<ellipse cx="1497.3" cy="436.0" rx="7.79" ry="7.84" opacity="0.35"/>
<ellipse cx="1715.9" cy="509.4" rx="0.64" ry="0.78" opacity="0.28"/>
<ellipse cx="1761.7" cy="576.2" rx="0.54" ry="0.79" opacity="0.28"/>
<ellipse cx="1597.4" cy="406.2" rx="1.06" ry="1.05" opacity="0.28"/>
<ellipse cx="1706.6" cy="624.6" rx="1.48" ry="1.51" opacity="0.28"/>
<ellipse cx="1637.9" cy="439.5" rx="4.85" ry="5.04" opacity="0.28"/>
<ellipse cx="1524.0" cy="524.0" rx="4.81" ry="4.75" opacity="0.28"/>
<ellipse cx="1669.2" cy="564.6" rx="1.62" ry="1.69" opacity="0.28"/>
<ellipse cx="1647.4" cy="487.0" rx="2.86" ry="3.04" opacity="0.28"/>
<ellipse cx="1414.7" cy="541.5" rx="0.77" ry="0.84" opacity="0.70"/>
<ellipse cx="1615.2" cy="250.4" rx="2.17" ry="0.91" opacity="0.49"/>
<ellipse cx="1637.6" cy="410.2" rx="4.10" ry="4.19" opacity="0.28"/>
<ellipse cx="1392.0" cy="394.4" rx="1.86" ry="2.11" opacity="0.80"/>
<ellipse cx="1675.2" cy="486.5" rx="0.92" ry="1.02" opacity="0.28"/>
<ellipse cx="1517.5" cy="688.3" rx="1.39" ry="0.73" opacity="0.65"/>
<ellipse cx="1498.4" cy="249.4" rx="0.69" ry="0.30" opacity="0.74"/>
<ellipse cx="1518.9" cy="404.1" rx="0.79" ry="0.77" opacity="0.31"/>
<ellipse cx="1737.5" cy="551.9" rx="0.72" ry="0.93" opacity="0.28"/>
<ellipse cx="1667.0" cy="623.1" rx="0.64" ry="0.60" opacity="0.28"/>
<ellipse cx="1600.9" cy="291.3" rx="2.50" ry="1.79" opacity="0.36"/>
<ellipse cx="1658.7" cy="625.8" rx="2.90" ry="2.66" opacity="0.28"/>
<ellipse cx="1452.2" cy="592.7" rx="4.67" ry="4.52" opacity="0.63"/>
<ellipse cx="1434.2" cy="512.1" rx="0.73" ry="0.78" opacity="0.60"/>
<ellipse cx="1620.2" cy="328.9" rx="0.71" ry="0.62" opacity="0.28"/>
<ellipse cx="1743.3" cy="636.3" rx="1.47" ry="1.79" opacity="0.28"/>
<ellipse cx="1681.2" cy="545.4" rx="4.15" ry="4.49" opacity="0.28"/>
<ellipse cx="1699.6" cy="525.0" rx="1.68" ry="1.93" opacity="0.28"/>
<ellipse cx="1475.7" cy="300.9" rx="4.63" ry="3.65" opacity="0.66"/>
<ellipse cx="1392.7" cy="537.7" rx="0.63" ry="0.73" opacity="0.78"/>
<ellipse cx="1725.9" cy="548.1" rx="1.23" ry="1.50" opacity="0.28"/>
<ellipse cx="1442.1" cy="554.9" rx="1.32" ry="1.37" opacity="0.61"/>
<ellipse cx="1438.6" cy="264.3" rx="1.58" ry="0.95" opacity="0.87"/>
<ellipse cx="1547.9" cy="641.1" rx="1.98" ry="1.46" opacity="0.43"/>
<ellipse cx="1639.4" cy="392.4" rx="1.13" ry="1.13" opacity="0.28"/>
<ellipse cx="1452.2" cy="566.5" rx="4.32" ry="4.35" opacity="0.58"/>
<ellipse cx="1437.5" cy="339.9" rx="0.84" ry="0.81" opacity="0.71"/>
<ellipse cx="1419.9" cy="581.1" rx="1.64" ry="1.71" opacity="0.73"/>
<ellipse cx="1461.0" cy="344.4" rx="4.07" ry="3.81" opacity="0.62"/>
<ellipse cx="1698.8" cy="381.5" rx="6.70" ry="7.43" opacity="0.28"/>
<ellipse cx="1572.0" cy="251.8" rx="2.25" ry="0.98" opacity="0.56"/>
<ellipse cx="1737.5" cy="527.8" rx="0.60" ry="0.79" opacity="0.28"/>
<ellipse cx="1595.8" cy="347.9" rx="0.76" ry="0.68" opacity="0.28"/>
<ellipse cx="1641.5" cy="671.4" rx="0.64" ry="0.45" opacity="0.35"/>
<ellipse cx="1414.6" cy="668.7" rx="0.50" ry="0.37" opacity="0.70"/>
<ellipse cx="1389.8" cy="327.8" rx="0.72" ry="0.74" opacity="0.70"/>
<ellipse cx="1387.8" cy="480.8" rx="1.37" ry="1.69" opacity="0.78"/>
<ellipse cx="1723.9" cy="648.6" rx="0.42" ry="0.42" opacity="0.28"/>
<ellipse cx="1535.3" cy="324.6" rx="1.45" ry="1.17" opacity="0.42"/>
<ellipse cx="1479.9" cy="284.8" rx="0.69" ry="0.49" opacity="0.69"/>
<ellipse cx="1575.5" cy="457.6" rx="1.31" ry="1.32" opacity="0.28"/>
<ellipse cx="1532.6" cy="429.5" rx="1.04" ry="1.03" opacity="0.28"/>
<ellipse cx="1678.8" cy="651.3" rx="3.23" ry="2.77" opacity="0.28"/>
<ellipse cx="1470.1" cy="244.5" rx="2.57" ry="0.91" opacity="0.83"/>
<ellipse cx="1488.0" cy="496.7" rx="0.80" ry="0.81" opacity="0.38"/>
<ellipse cx="1446.5" cy="316.0" rx="2.97" ry="2.61" opacity="0.72"/>
<ellipse cx="1666.6" cy="392.7" rx="1.19" ry="1.25" opacity="0.28"/>
<ellipse cx="1489.2" cy="243.5" rx="0.73" ry="0.26" opacity="0.78"/>
<ellipse cx="1593.3" cy="456.9" rx="2.00" ry="2.02" opacity="0.28"/>
<ellipse cx="1598.6" cy="422.1" rx="1.42" ry="1.41" opacity="0.28"/>
<ellipse cx="1480.6" cy="527.1" rx="2.07" ry="2.09" opacity="0.43"/>
<ellipse cx="1738.0" cy="413.0" rx="0.55" ry="0.72" opacity="0.28"/>
<ellipse cx="1403.7" cy="577.5" rx="3.92" ry="4.25" opacity="0.78"/>
<ellipse cx="1718.4" cy="441.6" rx="0.79" ry="0.98" opacity="0.28"/>
<ellipse cx="1678.7" cy="441.8" rx="0.95" ry="1.06" opacity="0.28"/>
<ellipse cx="1520.2" cy="272.4" rx="3.50" ry="2.10" opacity="0.61"/>
<ellipse cx="1615.1" cy="677.6" rx="0.77" ry="0.49" opacity="0.41"/>
<ellipse cx="1704.1" cy="427.6" rx="0.64" ry="0.75" opacity="0.28"/>
<ellipse cx="1514.2" cy="443.2" rx="1.74" ry="1.75" opacity="0.28"/>
<ellipse cx="1515.7" cy="548.3" rx="0.79" ry="0.77" opacity="0.32"/>
<ellipse cx="1549.7" cy="601.5" rx="1.01" ry="0.87" opacity="0.31"/>
<ellipse cx="1592.4" cy="443.4" rx="1.78" ry="1.79" opacity="0.28"/>
<ellipse cx="1406.3" cy="517.3" rx="0.92" ry="1.04" opacity="0.72"/>
<ellipse cx="1453.8" cy="489.7" rx="3.58" ry="3.79" opacity="0.51"/>
<ellipse cx="1410.6" cy="587.8" rx="1.06" ry="1.11" opacity="0.77"/>
<ellipse cx="1534.5" cy="276.1" rx="0.92" ry="0.56" opacity="0.56"/>
<ellipse cx="1615.7" cy="502.8" rx="2.95" ry="3.01" opacity="0.28"/>
<ellipse cx="1546.2" cy="276.0" rx="0.81" ry="0.48" opacity="0.53"/>
<ellipse cx="1519.7" cy="627.6" rx="0.90" ry="0.73" opacity="0.47"/>
<ellipse cx="1436.8" cy="618.8" rx="0.72" ry="0.68" opacity="0.73"/>
<ellipse cx="1730.9" cy="621.6" rx="0.51" ry="0.58" opacity="0.28"/>
<ellipse cx="1791.6" cy="536.6" rx="1.10" ry="2.32" opacity="0.28"/>
<ellipse cx="1556.3" cy="317.3" rx="0.93" ry="0.72" opacity="0.38"/>
<ellipse cx="1669.7" cy="355.7" rx="2.48" ry="2.49" opacity="0.28"/>
<ellipse cx="1489.6" cy="685.7" rx="0.69" ry="0.38" opacity="0.72"/>
<ellipse cx="1639.8" cy="409.3" rx="1.32" ry="1.35" opacity="0.28"/>
<ellipse cx="1578.8" cy="712.1" rx="0.87" ry="0.24" opacity="0.59"/>
<ellipse cx="1589.4" cy="436.2" rx="0.99" ry="0.99" opacity="0.28"/>
<ellipse cx="1477.8" cy="568.5" rx="0.83" ry="0.81" opacity="0.49"/>
<ellipse cx="1520.5" cy="661.6" rx="0.76" ry="0.52" opacity="0.56"/>
<ellipse cx="1633.8" cy="287.7" rx="2.71" ry="1.98" opacity="0.32"/>
<ellipse cx="1759.6" cy="593.3" rx="0.43" ry="0.62" opacity="0.28"/>
<ellipse cx="1713.9" cy="309.4" rx="1.22" ry="1.22" opacity="0.28"/>
<ellipse cx="1784.2" cy="513.0" rx="1.11" ry="2.09" opacity="0.28"/>
<ellipse cx="1508.4" cy="576.0" rx="1.17" ry="1.10" opacity="0.39"/>
<ellipse cx="1373.3" cy="507.0" rx="2.34" ry="2.97" opacity="0.84"/>
<ellipse cx="1576.6" cy="594.5" rx="1.23" ry="1.11" opacity="0.28"/>
<ellipse cx="1498.2" cy="322.2" rx="1.32" ry="1.11" opacity="0.54"/>
<ellipse cx="1474.5" cy="324.8" rx="3.39" ry="2.95" opacity="0.61"/>
<ellipse cx="1604.2" cy="305.7" rx="0.72" ry="0.57" opacity="0.31"/>
<ellipse cx="1633.2" cy="284.0" rx="1.08" ry="0.77" opacity="0.34"/>
<ellipse cx="1625.4" cy="424.5" rx="4.35" ry="4.43" opacity="0.28"/>
<ellipse cx="1437.7" cy="640.6" rx="2.81" ry="2.42" opacity="0.77"/>
<ellipse cx="1503.6" cy="298.5" rx="0.99" ry="0.74" opacity="0.58"/>
<ellipse cx="1411.6" cy="517.3" rx="0.94" ry="1.05" opacity="0.69"/>
<ellipse cx="1678.6" cy="652.4" rx="0.62" ry="0.53" opacity="0.28"/>
<ellipse cx="1636.2" cy="412.4" rx="0.74" ry="0.76" opacity="0.28"/>
<ellipse cx="1592.4" cy="705.7" rx="0.70" ry="0.26" opacity="0.55"/>
<ellipse cx="1777.6" cy="492.1" rx="0.44" ry="0.79" opacity="0.28"/>
<ellipse cx="1585.9" cy="514.7" rx="2.61" ry="2.60" opacity="0.28"/>
<ellipse cx="1664.0" cy="526.5" rx="4.20" ry="4.48" opacity="0.28"/>
<ellipse cx="1652.3" cy="664.2" rx="2.12" ry="1.60" opacity="0.31"/>
<ellipse cx="1565.3" cy="496.8" rx="3.61" ry="3.61" opacity="0.28"/>
<ellipse cx="1683.9" cy="537.7" rx="0.68" ry="0.74" opacity="0.28"/>
<ellipse cx="1464.8" cy="570.9" rx="0.75" ry="0.74" opacity="0.54"/>
<ellipse cx="1492.5" cy="547.3" rx="1.15" ry="1.14" opacity="0.41"/>
<ellipse cx="1634.7" cy="609.9" rx="1.83" ry="1.69" opacity="0.28"/>
<ellipse cx="1516.9" cy="585.4" rx="0.91" ry="0.83" opacity="0.38"/>
<ellipse cx="1584.2" cy="314.4" rx="1.48" ry="1.17" opacity="0.32"/>
<ellipse cx="1568.8" cy="503.0" rx="0.87" ry="0.86" opacity="0.28"/>
<ellipse cx="1491.1" cy="555.1" rx="0.89" ry="0.87" opacity="0.42"/>
<ellipse cx="1671.6" cy="522.7" rx="1.70" ry="1.84" opacity="0.28"/>
<ellipse cx="1382.6" cy="581.2" rx="3.34" ry="3.84" opacity="0.87"/>
<ellipse cx="1547.2" cy="647.9" rx="0.86" ry="0.61" opacity="0.45"/>
<ellipse cx="1612.3" cy="363.2" rx="0.93" ry="0.87" opacity="0.28"/>
<ellipse cx="1462.2" cy="252.6" rx="3.36" ry="1.57" opacity="0.83"/>
<ellipse cx="1702.4" cy="488.2" rx="0.84" ry="1.00" opacity="0.28"/>
<ellipse cx="1374.2" cy="436.2" rx="0.70" ry="0.87" opacity="0.84"/>
<ellipse cx="1541.0" cy="348.1" rx="1.43" ry="1.24" opacity="0.34"/>
<ellipse cx="1603.8" cy="569.8" rx="0.98" ry="0.94" opacity="0.28"/>
<ellipse cx="1519.5" cy="510.0" rx="1.09" ry="1.09" opacity="0.28"/>
<ellipse cx="1765.2" cy="368.9" rx="0.53" ry="0.84" opacity="0.28"/>
<ellipse cx="1481.1" cy="634.5" rx="0.71" ry="0.59" opacity="0.61"/>
<ellipse cx="1648.4" cy="375.0" rx="3.16" ry="3.15" opacity="0.28"/>
<ellipse cx="1449.1" cy="646.6" rx="4.00" ry="3.28" opacity="0.74"/>
<ellipse cx="1750.6" cy="474.7" rx="1.32" ry="1.97" opacity="0.28"/>
<ellipse cx="1382.4" cy="377.7" rx="0.95" ry="1.09" opacity="0.86"/>
<ellipse cx="1665.2" cy="369.2" rx="0.68" ry="0.69" opacity="0.28"/>
<ellipse cx="1732.0" cy="388.7" rx="1.58" ry="1.98" opacity="0.28"/>
<ellipse cx="1565.1" cy="380.9" rx="3.88" ry="3.63" opacity="0.28"/>
<ellipse cx="1740.9" cy="598.7" rx="0.47" ry="0.59" opacity="0.28"/>
<ellipse cx="1436.9" cy="611.2" rx="0.67" ry="0.64" opacity="0.71"/>
<ellipse cx="1603.2" cy="601.5" rx="3.98" ry="3.62" opacity="0.28"/>
<ellipse cx="1413.7" cy="405.9" rx="3.00" ry="3.27" opacity="0.71"/>
<ellipse cx="1679.0" cy="688.6" rx="2.26" ry="1.27" opacity="0.39"/>
<ellipse cx="1658.0" cy="532.9" rx="0.72" ry="0.76" opacity="0.28"/>
<ellipse cx="1596.6" cy="705.4" rx="2.50" ry="0.95" opacity="0.54"/>
<ellipse cx="1812.9" cy="506.0" rx="0.38" ry="1.51" opacity="0.28"/>
<ellipse cx="1681.0" cy="317.1" rx="0.86" ry="0.80" opacity="0.28"/>
<ellipse cx="1526.9" cy="580.5" rx="3.19" ry="2.94" opacity="0.34"/>
<ellipse cx="1514.9" cy="605.9" rx="6.81" ry="5.97" opacity="0.43"/>
<ellipse cx="1579.4" cy="463.4" rx="1.54" ry="1.54" opacity="0.28"/>
<ellipse cx="1489.9" cy="489.6" rx="2.29" ry="2.33" opacity="0.37"/>
<ellipse cx="1647.9" cy="537.3" rx="0.81" ry="0.84" opacity="0.28"/>
<ellipse cx="1659.2" cy="422.4" rx="1.39" ry="1.47" opacity="0.28"/>
<ellipse cx="1454.4" cy="365.1" rx="1.02" ry="1.00" opacity="0.60"/>
<ellipse cx="1728.7" cy="477.3" rx="2.33" ry="3.11" opacity="0.28"/>
<ellipse cx="1418.3" cy="584.5" rx="1.21" ry="1.26" opacity="0.74"/>
<ellipse cx="1582.6" cy="657.8" rx="0.89" ry="0.63" opacity="0.40"/>
<ellipse cx="1519.4" cy="376.4" rx="1.27" ry="1.20" opacity="0.35"/>
<ellipse cx="1600.4" cy="257.5" rx="2.88" ry="1.44" opacity="0.48"/>
<ellipse cx="1522.4" cy="659.9" rx="2.14" ry="1.47" opacity="0.55"/>
<ellipse cx="1344.8" cy="475.7" rx="0.53" ry="0.80" opacity="0.70"/>
<ellipse cx="1605.0" cy="534.2" rx="1.64" ry="1.64" opacity="0.28"/>
<ellipse cx="1555.9" cy="582.4" rx="0.79" ry="0.72" opacity="0.28"/>
<ellipse cx="1503.2" cy="435.5" rx="2.20" ry="2.21" opacity="0.33"/>
<ellipse cx="1642.8" cy="668.3" rx="0.68" ry="0.49" opacity="0.33"/>
<ellipse cx="1626.0" cy="374.1" rx="0.76" ry="0.74" opacity="0.28"/>
<ellipse cx="1776.1" cy="531.5" rx="0.92" ry="1.57" opacity="0.28"/>
<ellipse cx="1572.5" cy="384.1" rx="1.66" ry="1.57" opacity="0.28"/>
<ellipse cx="1546.3" cy="477.1" rx="1.28" ry="1.28" opacity="0.28"/>
<ellipse cx="1364.9" cy="543.9" rx="0.57" ry="0.73" opacity="0.70"/>
<ellipse cx="1590.1" cy="459.4" rx="0.81" ry="0.82" opacity="0.28"/>
<ellipse cx="1670.4" cy="601.4" rx="0.77" ry="0.77" opacity="0.28"/>
<ellipse cx="1650.4" cy="671.4" rx="1.28" ry="0.91" opacity="0.34"/>
<ellipse cx="1418.5" cy="341.9" rx="1.24" ry="1.24" opacity="0.77"/>
<ellipse cx="1644.7" cy="564.6" rx="1.72" ry="1.73" opacity="0.28"/>
<ellipse cx="1611.3" cy="354.9" rx="0.81" ry="0.75" opacity="0.28"/>
<ellipse cx="1675.7" cy="520.4" rx="2.20" ry="2.40" opacity="0.28"/>
<ellipse cx="1502.7" cy="314.6" rx="3.80" ry="3.08" opacity="0.55"/>
<ellipse cx="1451.7" cy="677.6" rx="0.62" ry="0.39" opacity="0.81"/>
<ellipse cx="1590.9" cy="351.5" rx="0.78" ry="0.70" opacity="0.28"/>
<ellipse cx="1437.5" cy="293.5" rx="0.87" ry="0.70" opacity="0.80"/>
<ellipse cx="1407.6" cy="465.7" rx="1.26" ry="1.46" opacity="0.70"/>
<ellipse cx="1633.0" cy="374.4" rx="0.73" ry="0.71" opacity="0.28"/>
<ellipse cx="1743.2" cy="596.6" rx="5.52" ry="7.00" opacity="0.28"/>
<ellipse cx="1500.6" cy="308.1" rx="3.22" ry="2.55" opacity="0.57"/>
<ellipse cx="1470.7" cy="384.3" rx="1.02" ry="1.01" opacity="0.51"/>
<ellipse cx="1552.7" cy="345.7" rx="1.94" ry="1.66" opacity="0.31"/>
<ellipse cx="1544.1" cy="239.4" rx="1.50" ry="0.43" opacity="0.66"/>
<ellipse cx="1633.6" cy="427.5" rx="2.35" ry="2.42" opacity="0.28"/>
<ellipse cx="1461.6" cy="496.2" rx="0.93" ry="0.97" opacity="0.49"/>
<ellipse cx="1372.5" cy="588.7" rx="0.53" ry="0.62" opacity="0.70"/>
<ellipse cx="1536.1" cy="680.3" rx="1.01" ry="0.57" opacity="0.58"/>
<ellipse cx="1444.0" cy="552.3" rx="0.75" ry="0.78" opacity="0.60"/>
<ellipse cx="1650.7" cy="366.3" rx="0.71" ry="0.71" opacity="0.28"/>
<ellipse cx="1559.2" cy="497.2" rx="1.04" ry="1.04" opacity="0.28"/>
<ellipse cx="1455.6" cy="441.8" rx="0.76" ry="0.79" opacity="0.51"/>
<ellipse cx="1648.8" cy="299.7" rx="1.87" ry="1.51" opacity="0.28"/>
<ellipse cx="1510.3" cy="373.4" rx="3.52" ry="3.31" opacity="0.39"/>
<ellipse cx="1449.4" cy="634.2" rx="3.56" ry="3.09" opacity="0.72"/>
<ellipse cx="1535.1" cy="458.6" rx="0.80" ry="0.80" opacity="0.28"/>
<ellipse cx="1441.0" cy="288.8" rx="1.81" ry="1.40" opacity="0.80"/>
<ellipse cx="1670.3" cy="407.6" rx="1.09" ry="1.16" opacity="0.28"/>
<ellipse cx="1394.3" cy="302.8" rx="0.53" ry="0.50" opacity="0.70"/>
<ellipse cx="1344.9" cy="455.5" rx="0.53" ry="0.77" opacity="0.70"/>
<ellipse cx="1745.6" cy="524.5" rx="3.04" ry="4.14" opacity="0.28"/>
<ellipse cx="1577.7" cy="493.2" rx="0.81" ry="0.81" opacity="0.28"/>
<ellipse cx="1649.8" cy="612.9" rx="3.30" ry="3.09" opacity="0.28"/>
<ellipse cx="1569.5" cy="695.8" rx="2.39" ry="1.10" opacity="0.55"/>
<ellipse cx="1526.2" cy="610.7" rx="2.31" ry="1.97" opacity="0.41"/>
<ellipse cx="1665.4" cy="549.1" rx="2.18" ry="2.29" opacity="0.28"/>
<ellipse cx="1600.8" cy="630.6" rx="0.91" ry="0.75" opacity="0.28"/>
<ellipse cx="1682.1" cy="593.3" rx="1.41" ry="1.45" opacity="0.28"/>
<ellipse cx="1596.1" cy="582.1" rx="0.77" ry="0.72" opacity="0.28"/>
<ellipse cx="1445.1" cy="436.5" rx="0.89" ry="0.94" opacity="0.56"/>
<ellipse cx="1681.7" cy="371.3" rx="2.33" ry="2.45" opacity="0.28"/>
<ellipse cx="1718.9" cy="470.7" rx="0.64" ry="0.82" opacity="0.28"/>
<ellipse cx="1404.8" cy="529.6" rx="1.70" ry="1.92" opacity="0.73"/>
<ellipse cx="1472.4" cy="636.6" rx="1.11" ry="0.92" opacity="0.64"/>
<ellipse cx="1616.4" cy="263.3" rx="1.04" ry="0.58" opacity="0.44"/>
<ellipse cx="1623.9" cy="431.1" rx="5.05" ry="5.15" opacity="0.28"/>
<ellipse cx="1351.8" cy="499.2" rx="1.79" ry="2.52" opacity="0.70"/>
<ellipse cx="1703.8" cy="578.7" rx="3.63" ry="4.00" opacity="0.28"/>
<ellipse cx="1471.0" cy="648.4" rx="3.92" ry="3.09" opacity="0.68"/>
<ellipse cx="1610.6" cy="310.3" rx="0.73" ry="0.58" opacity="0.28"/>
<ellipse cx="1401.9" cy="306.3" rx="0.69" ry="0.64" opacity="0.70"/>
<ellipse cx="1639.3" cy="422.9" rx="1.01" ry="1.05" opacity="0.28"/>
<ellipse cx="1556.8" cy="493.7" rx="1.50" ry="1.50" opacity="0.28"/>
<ellipse cx="1641.1" cy="537.3" rx="0.74" ry="0.76" opacity="0.28"/>
<ellipse cx="1612.2" cy="386.0" rx="1.20" ry="1.17" opacity="0.28"/>
<ellipse cx="1564.8" cy="346.2" rx="0.81" ry="0.70" opacity="0.28"/>
<ellipse cx="1558.4" cy="375.5" rx="2.59" ry="2.38" opacity="0.28"/>
<ellipse cx="1513.2" cy="237.4" rx="1.44" ry="0.39" opacity="0.74"/>
<ellipse cx="1425.6" cy="644.1" rx="0.63" ry="0.55" opacity="0.82"/>
<ellipse cx="1596.5" cy="632.2" rx="1.98" ry="1.63" opacity="0.28"/>
<ellipse cx="1758.6" cy="582.4" rx="2.81" ry="4.01" opacity="0.28"/>
<ellipse cx="1750.2" cy="533.6" rx="3.22" ry="4.46" opacity="0.28"/>
<ellipse cx="1479.6" cy="641.9" rx="0.73" ry="0.59" opacity="0.63"/>
<ellipse cx="1589.8" cy="288.1" rx="2.39" ry="1.65" opacity="0.40"/>
<ellipse cx="1752.9" cy="377.2" rx="0.49" ry="0.68" opacity="0.28"/>
<ellipse cx="1476.4" cy="475.3" rx="0.79" ry="0.82" opacity="0.42"/>
<ellipse cx="1755.1" cy="592.6" rx="0.42" ry="0.59" opacity="0.28"/>
<ellipse cx="1727.1" cy="488.6" rx="2.08" ry="2.71" opacity="0.28"/>
<ellipse cx="1437.3" cy="328.6" rx="0.70" ry="0.65" opacity="0.73"/>
<ellipse cx="1458.3" cy="529.7" rx="1.05" ry="1.08" opacity="0.52"/>
<ellipse cx="1737.2" cy="586.5" rx="0.51" ry="0.63" opacity="0.28"/>
<ellipse cx="1380.4" cy="580.5" rx="1.27" ry="1.48" opacity="0.87"/>
<ellipse cx="1453.8" cy="529.1" rx="4.77" ry="4.95" opacity="0.54"/>
<ellipse cx="1777.7" cy="592.5" rx="0.47" ry="0.89" opacity="0.28"/>
<ellipse cx="1420.8" cy="289.6" rx="0.60" ry="0.48" opacity="0.87"/>
<ellipse cx="1556.7" cy="365.1" rx="1.76" ry="1.59" opacity="0.28"/>
<ellipse cx="1623.4" cy="655.2" rx="0.94" ry="0.72" opacity="0.31"/>
<ellipse cx="1653.5" cy="444.8" rx="1.91" ry="2.03" opacity="0.28"/>
<ellipse cx="1727.6" cy="372.9" rx="1.83" ry="2.22" opacity="0.28"/>
<ellipse cx="1663.0" cy="448.5" rx="2.74" ry="2.97" opacity="0.28"/>
<ellipse cx="1433.4" cy="440.2" rx="1.12" ry="1.21" opacity="0.60"/>
<ellipse cx="1515.9" cy="382.1" rx="0.78" ry="0.74" opacity="0.35"/>
<ellipse cx="1593.8" cy="699.2" rx="1.46" ry="0.66" opacity="0.52"/>
<ellipse cx="1409.4" cy="367.0" rx="6.57" ry="6.95" opacity="0.77"/>
<ellipse cx="1368.6" cy="420.6" rx="2.16" ry="2.72" opacity="0.87"/>
<ellipse cx="1590.6" cy="604.0" rx="0.81" ry="0.72" opacity="0.28"/>
<ellipse cx="1469.4" cy="444.7" rx="3.84" ry="3.96" opacity="0.46"/>
<ellipse cx="1420.9" cy="600.0" rx="1.56" ry="1.57" opacity="0.75"/>
<ellipse cx="1524.7" cy="394.1" rx="0.80" ry="0.76" opacity="0.30"/>
<ellipse cx="1476.9" cy="258.0" rx="0.70" ry="0.37" opacity="0.77"/>
<ellipse cx="1711.4" cy="446.5" rx="2.67" ry="3.24" opacity="0.28"/>
<ellipse cx="1518.8" cy="300.4" rx="0.92" ry="0.68" opacity="0.53"/>
<ellipse cx="1665.8" cy="627.5" rx="0.64" ry="0.59" opacity="0.28"/>
<ellipse cx="1363.7" cy="569.1" rx="3.40" ry="4.29" opacity="0.70"/>
<ellipse cx="1674.6" cy="503.5" rx="0.71" ry="0.78" opacity="0.28"/>
<ellipse cx="1590.7" cy="579.9" rx="1.51" ry="1.41" opacity="0.28"/>
<ellipse cx="1568.5" cy="453.1" rx="3.77" ry="3.77" opacity="0.28"/>
<ellipse cx="1527.3" cy="641.6" rx="0.83" ry="0.63" opacity="0.49"/>
<ellipse cx="1511.6" cy="284.0" rx="0.92" ry="0.62" opacity="0.60"/>
<ellipse cx="1374.6" cy="530.8" rx="0.92" ry="1.14" opacity="0.85"/>
<ellipse cx="1758.5" cy="386.7" rx="0.89" ry="1.31" opacity="0.28"/>
<ellipse cx="1507.1" cy="622.9" rx="3.52" ry="2.96" opacity="0.50"/>
<ellipse cx="1418.5" cy="401.6" rx="0.83" ry="0.90" opacity="0.69"/>
<ellipse cx="1477.0" cy="302.4" rx="2.42" ry="1.92" opacity="0.66"/>
<ellipse cx="1532.1" cy="711.5" rx="0.89" ry="0.24" opacity="0.69"/>
<ellipse cx="1790.2" cy="516.5" rx="0.40" ry="0.81" opacity="0.28"/>
<ellipse cx="1577.4" cy="281.7" rx="1.11" ry="0.72" opacity="0.44"/>
<ellipse cx="1720.3" cy="339.9" rx="2.19" ry="2.46" opacity="0.28"/>
<ellipse cx="1592.6" cy="341.0" rx="0.76" ry="0.66" opacity="0.28"/>
<ellipse cx="1656.6" cy="583.1" rx="4.26" ry="4.26" opacity="0.28"/>
<ellipse cx="1544.2" cy="639.4" rx="5.14" ry="3.84" opacity="0.43"/>
<ellipse cx="1374.8" cy="372.3" rx="0.56" ry="0.66" opacity="0.70"/>
<ellipse cx="1649.2" cy="473.5" rx="1.57" ry="1.69" opacity="0.28"/>
<ellipse cx="1398.8" cy="298.4" rx="1.12" ry="1.01" opacity="0.70"/>
<ellipse cx="1495.8" cy="568.1" rx="0.95" ry="0.91" opacity="0.43"/>
<ellipse cx="1713.5" cy="374.5" rx="3.31" ry="3.81" opacity="0.28"/>
<ellipse cx="1638.5" cy="513.0" rx="2.10" ry="2.18" opacity="0.28"/>
<ellipse cx="1739.4" cy="584.5" rx="0.87" ry="1.09" opacity="0.28"/>
<ellipse cx="1469.2" cy="481.6" rx="1.80" ry="1.87" opacity="0.45"/>
<ellipse cx="1538.1" cy="258.6" rx="0.79" ry="0.38" opacity="0.61"/>
<ellipse cx="1689.5" cy="659.1" rx="2.12" ry="1.77" opacity="0.28"/>
<ellipse cx="1390.0" cy="463.2" rx="0.65" ry="0.79" opacity="0.77"/>
<ellipse cx="1552.2" cy="501.6" rx="0.87" ry="0.87" opacity="0.28"/>
<ellipse cx="1777.2" cy="595.8" rx="0.40" ry="0.75" opacity="0.28"/>
<ellipse cx="1516.1" cy="403.2" rx="1.09" ry="1.07" opacity="0.32"/>
<ellipse cx="1445.9" cy="681.1" rx="0.60" ry="0.36" opacity="0.84"/>
<ellipse cx="1528.0" cy="502.1" rx="0.83" ry="0.83" opacity="0.28"/>
<ellipse cx="1426.2" cy="606.3" rx="2.97" ry="2.92" opacity="0.74"/>
<ellipse cx="1551.7" cy="632.1" rx="4.08" ry="3.15" opacity="0.39"/>
<ellipse cx="1489.4" cy="406.7" rx="3.55" ry="3.53" opacity="0.41"/>
<ellipse cx="1586.2" cy="546.6" rx="1.06" ry="1.03" opacity="0.28"/>
<ellipse cx="1388.3" cy="384.6" rx="0.61" ry="0.69" opacity="0.83"/>
<ellipse cx="1564.7" cy="610.8" rx="1.87" ry="1.59" opacity="0.29"/>
<ellipse cx="1415.5" cy="314.7" rx="1.25" ry="1.16" opacity="0.83"/>
<ellipse cx="1619.9" cy="689.5" rx="1.38" ry="0.76" opacity="0.44"/>
<ellipse cx="1464.8" cy="585.4" rx="4.32" ry="4.16" opacity="0.57"/>
<ellipse cx="1573.1" cy="244.2" rx="1.30" ry="0.46" opacity="0.58"/>
<ellipse cx="1422.9" cy="513.8" rx="1.29" ry="1.42" opacity="0.65"/>
<ellipse cx="1518.4" cy="488.2" rx="0.83" ry="0.83" opacity="0.28"/>
<ellipse cx="1701.4" cy="327.7" rx="1.36" ry="1.38" opacity="0.28"/>
<ellipse cx="1687.7" cy="335.3" rx="1.43" ry="1.43" opacity="0.28"/>
<ellipse cx="1440.4" cy="421.3" rx="4.57" ry="4.82" opacity="0.59"/>
<ellipse cx="1641.4" cy="567.9" rx="3.03" ry="3.02" opacity="0.28"/>
<ellipse cx="1615.0" cy="651.1" rx="1.39" ry="1.08" opacity="0.31"/>
<ellipse cx="1421.9" cy="667.6" rx="0.54" ry="0.40" opacity="0.70"/>
<ellipse cx="1779.8" cy="576.6" rx="0.54" ry="0.98" opacity="0.28"/>
<ellipse cx="1572.1" cy="480.6" rx="1.14" ry="1.15" opacity="0.28"/>
<ellipse cx="1627.9" cy="262.7" rx="3.31" ry="1.82" opacity="0.42"/>
<ellipse cx="1413.8" cy="606.0" rx="0.64" ry="0.65" opacity="0.79"/>
<ellipse cx="1751.5" cy="569.4" rx="0.49" ry="0.66" opacity="0.28"/>
<ellipse cx="1386.9" cy="567.7" rx="0.97" ry="1.11" opacity="0.83"/>
<ellipse cx="1722.8" cy="597.3" rx="1.35" ry="1.54" opacity="0.28"/>
<ellipse cx="1478.1" cy="475.7" rx="2.29" ry="2.37" opacity="0.42"/>
<ellipse cx="1368.6" cy="401.5" rx="1.51" ry="1.88" opacity="0.70"/>
<ellipse cx="1793.6" cy="489.8" rx="0.34" ry="0.77" opacity="0.28"/>
<ellipse cx="1536.4" cy="490.1" rx="0.81" ry="0.81" opacity="0.28"/>
<ellipse cx="1625.1" cy="664.4" rx="0.76" ry="0.55" opacity="0.34"/>
<ellipse cx="1492.1" cy="570.7" rx="0.76" ry="0.73" opacity="0.44"/>
<ellipse cx="1638.6" cy="693.2" rx="0.61" ry="0.32" opacity="0.43"/>
<ellipse cx="1659.2" cy="338.6" rx="3.44" ry="3.26" opacity="0.28"/>
<ellipse cx="1395.9" cy="396.8" rx="1.98" ry="2.23" opacity="0.78"/>
<ellipse cx="1459.4" cy="430.1" rx="4.42" ry="4.57" opacity="0.51"/>
<ellipse cx="1673.2" cy="394.9" rx="0.74" ry="0.78" opacity="0.28"/>
<ellipse cx="1556.2" cy="450.4" rx="0.80" ry="0.80" opacity="0.28"/>
<ellipse cx="1506.4" cy="271.3" rx="0.89" ry="0.54" opacity="0.65"/>
<ellipse cx="1470.5" cy="569.1" rx="3.60" ry="3.54" opacity="0.52"/>
<ellipse cx="1428.3" cy="441.3" rx="0.71" ry="0.78" opacity="0.62"/>
<ellipse cx="1636.4" cy="638.4" rx="0.68" ry="0.58" opacity="0.28"/>
<ellipse cx="1530.4" cy="671.8" rx="1.38" ry="0.86" opacity="0.57"/>
<ellipse cx="1392.8" cy="355.6" rx="3.19" ry="3.46" opacity="0.85"/>
<ellipse cx="1572.2" cy="298.1" rx="0.89" ry="0.64" opacity="0.40"/>
<ellipse cx="1658.7" cy="688.7" rx="2.31" ry="1.30" opacity="0.40"/>
<ellipse cx="1749.8" cy="507.1" rx="1.67" ry="2.37" opacity="0.28"/>
<ellipse cx="1379.2" cy="597.7" rx="3.53" ry="4.02" opacity="0.70"/>
<ellipse cx="1433.2" cy="301.4" rx="0.65" ry="0.55" opacity="0.80"/>
<ellipse cx="1619.7" cy="384.4" rx="0.90" ry="0.88" opacity="0.28"/>
<ellipse cx="1476.7" cy="431.3" rx="1.25" ry="1.27" opacity="0.44"/>
<ellipse cx="1466.2" cy="347.2" rx="2.88" ry="2.69" opacity="0.59"/>
<ellipse cx="1753.7" cy="380.9" rx="0.65" ry="0.92" opacity="0.28"/>
<ellipse cx="1657.8" cy="458.4" rx="1.67" ry="1.81" opacity="0.28"/>
<ellipse cx="1620.2" cy="434.2" rx="4.97" ry="5.07" opacity="0.28"/>
<ellipse cx="1442.5" cy="261.3" rx="3.04" ry="1.72" opacity="0.87"/>
<ellipse cx="1778.5" cy="374.5" rx="1.47" ry="2.84" opacity="0.28"/>
<ellipse cx="1581.3" cy="273.8" rx="0.81" ry="0.49" opacity="0.46"/>
<ellipse cx="1626.4" cy="364.2" rx="1.13" ry="1.08" opacity="0.28"/>
<ellipse cx="1455.0" cy="593.8" rx="0.71" ry="0.68" opacity="0.62"/>
<ellipse cx="1429.8" cy="465.0" rx="1.00" ry="1.10" opacity="0.61"/>
<ellipse cx="1390.5" cy="409.9" rx="1.26" ry="1.46" opacity="0.79"/>
<ellipse cx="1670.6" cy="481.2" rx="1.15" ry="1.28" opacity="0.28"/>
<ellipse cx="1499.9" cy="648.1" rx="0.86" ry="0.65" opacity="0.59"/>
<ellipse cx="1692.3" cy="612.2" rx="0.93" ry="0.95" opacity="0.28"/>
<ellipse cx="1363.7" cy="542.9" rx="1.69" ry="2.17" opacity="0.70"/>
<ellipse cx="1386.6" cy="401.8" rx="0.64" ry="0.74" opacity="0.82"/>
<ellipse cx="1681.9" cy="648.4" rx="0.60" ry="0.53" opacity="0.28"/>
<ellipse cx="1549.1" cy="377.0" rx="1.83" ry="1.68" opacity="0.28"/>
<ellipse cx="1414.6" cy="559.2" rx="2.91" ry="3.14" opacity="0.72"/>
<ellipse cx="1397.1" cy="365.6" rx="1.14" ry="1.24" opacity="0.82"/>
<ellipse cx="1484.9" cy="573.8" rx="1.45" ry="1.40" opacity="0.47"/>
<ellipse cx="1474.1" cy="334.2" rx="2.35" ry="2.11" opacity="0.59"/>
<ellipse cx="1641.0" cy="308.1" rx="2.09" ry="1.73" opacity="0.28"/>
<ellipse cx="1560.7" cy="269.5" rx="2.44" ry="1.37" opacity="0.52"/>
<ellipse cx="1419.0" cy="389.9" rx="2.76" ry="2.94" opacity="0.70"/>
<ellipse cx="1592.1" cy="473.7" rx="1.50" ry="1.52" opacity="0.28"/>
<ellipse cx="1710.0" cy="535.4" rx="0.63" ry="0.74" opacity="0.28"/>
<ellipse cx="1761.4" cy="348.3" rx="0.45" ry="0.70" opacity="0.28"/>
<ellipse cx="1567.2" cy="241.1" rx="2.51" ry="0.79" opacity="0.60"/>
<ellipse cx="1638.9" cy="429.2" rx="0.81" ry="0.84" opacity="0.28"/>
<ellipse cx="1777.1" cy="602.1" rx="0.94" ry="1.82" opacity="0.28"/>
<ellipse cx="1627.7" cy="333.9" rx="2.69" ry="2.41" opacity="0.28"/>
<ellipse cx="1554.4" cy="615.9" rx="2.54" ry="2.09" opacity="0.34"/>
<ellipse cx="1484.3" cy="672.0" rx="2.43" ry="1.60" opacity="0.70"/>
<ellipse cx="1471.9" cy="438.8" rx="1.19" ry="1.23" opacity="0.45"/>
<ellipse cx="1394.8" cy="383.9" rx="1.86" ry="2.08" opacity="0.80"/>
<ellipse cx="1540.2" cy="653.5" rx="1.77" ry="1.24" opacity="0.49"/>
<ellipse cx="1511.4" cy="620.8" rx="2.01" ry="1.69" opacity="0.48"/>
<ellipse cx="1461.1" cy="371.9" rx="1.55" ry="1.52" opacity="0.57"/>
<ellipse cx="1430.0" cy="633.9" rx="0.67" ry="0.60" opacity="0.78"/>
<ellipse cx="1537.5" cy="506.2" rx="2.98" ry="2.96" opacity="0.28"/>
<ellipse cx="1546.4" cy="668.6" rx="0.81" ry="0.50" opacity="0.52"/>
<ellipse cx="1477.4" cy="271.1" rx="0.96" ry="0.61" opacity="0.74"/>
<ellipse cx="1517.5" cy="453.7" rx="1.29" ry="1.29" opacity="0.28"/>
<ellipse cx="1470.5" cy="295.7" rx="0.87" ry="0.68" opacity="0.69"/>
<ellipse cx="1504.4" cy="460.9" rx="0.80" ry="0.80" opacity="0.31"/>
<ellipse cx="1487.3" cy="374.7" rx="0.84" ry="0.81" opacity="0.47"/>
<ellipse cx="1748.9" cy="585.0" rx="2.04" ry="2.71" opacity="0.28"/>
<ellipse cx="1647.1" cy="436.5" rx="0.74" ry="0.78" opacity="0.28"/>
<ellipse cx="1588.9" cy="473.4" rx="2.44" ry="2.46" opacity="0.28"/>
<ellipse cx="1594.0" cy="441.9" rx="3.54" ry="3.56" opacity="0.28"/>
<ellipse cx="1345.2" cy="458.0" rx="0.79" ry="1.16" opacity="0.70"/>
<ellipse cx="1535.0" cy="350.0" rx="0.79" ry="0.69" opacity="0.36"/>
<ellipse cx="1545.4" cy="314.3" rx="4.30" ry="3.28" opacity="0.42"/>
<ellipse cx="1409.8" cy="511.9" rx="0.68" ry="0.77" opacity="0.70"/>
<ellipse cx="1614.9" cy="592.8" rx="0.74" ry="0.69" opacity="0.28"/>
<ellipse cx="1751.8" cy="333.1" rx="1.94" ry="2.73" opacity="0.28"/>
<ellipse cx="1521.0" cy="256.4" rx="1.08" ry="0.53" opacity="0.66"/>
<ellipse cx="1547.7" cy="580.8" rx="1.57" ry="1.42" opacity="0.28"/>
<ellipse cx="1474.0" cy="385.1" rx="0.96" ry="0.95" opacity="0.50"/>
<ellipse cx="1593.7" cy="587.9" rx="0.84" ry="0.78" opacity="0.28"/>
<ellipse cx="1549.0" cy="715.8" rx="1.21" ry="0.27" opacity="0.66"/>
<ellipse cx="1541.5" cy="527.6" rx="1.92" ry="1.88" opacity="0.28"/>
<ellipse cx="1676.5" cy="595.1" rx="4.27" ry="4.32" opacity="0.28"/>
<ellipse cx="1541.6" cy="282.0" rx="0.80" ry="0.51" opacity="0.53"/>
<ellipse cx="1430.9" cy="293.8" rx="0.61" ry="0.50" opacity="0.83"/>
<ellipse cx="1478.6" cy="703.3" rx="0.63" ry="0.22" opacity="0.80"/>
<ellipse cx="1599.5" cy="393.6" rx="0.97" ry="0.94" opacity="0.28"/>
<ellipse cx="1730.9" cy="542.4" rx="3.59" ry="4.49" opacity="0.28"/>
<ellipse cx="1406.9" cy="586.6" rx="0.62" ry="0.66" opacity="0.78"/>
<ellipse cx="1781.7" cy="570.8" rx="0.32" ry="0.60" opacity="0.28"/>
<ellipse cx="1480.7" cy="604.2" rx="0.82" ry="0.75" opacity="0.55"/>
<ellipse cx="1564.3" cy="538.7" rx="7.29" ry="7.10" opacity="0.28"/>
<ellipse cx="1677.9" cy="534.1" rx="0.69" ry="0.75" opacity="0.28"/>
<ellipse cx="1554.8" cy="262.5" rx="1.03" ry="0.52" opacity="0.56"/>
<ellipse cx="1472.5" cy="303.9" rx="3.34" ry="2.69" opacity="0.67"/>
<ellipse cx="1371.1" cy="491.4" rx="2.87" ry="3.73" opacity="0.85"/>
<ellipse cx="1577.4" cy="481.6" rx="0.90" ry="0.91" opacity="0.28"/>
<ellipse cx="1459.8" cy="600.5" rx="0.74" ry="0.70" opacity="0.61"/>
<ellipse cx="1420.8" cy="457.0" rx="3.24" ry="3.62" opacity="0.65"/>
<ellipse cx="1518.5" cy="493.9" rx="4.21" ry="4.22" opacity="0.28"/>
<ellipse cx="1568.6" cy="293.0" rx="0.78" ry="0.54" opacity="0.43"/>
<ellipse cx="1447.6" cy="676.1" rx="0.72" ry="0.47" opacity="0.82"/>
<ellipse cx="1664.1" cy="384.3" rx="2.43" ry="2.51" opacity="0.28"/>
<ellipse cx="1401.0" cy="342.2" rx="1.37" ry="1.42" opacity="0.84"/>
<ellipse cx="1362.4" cy="517.9" rx="0.57" ry="0.75" opacity="0.70"/>
<ellipse cx="1598.6" cy="524.9" rx="1.42" ry="1.42" opacity="0.28"/>
<ellipse cx="1403.3" cy="512.2" rx="3.12" ry="3.58" opacity="0.72"/>
<ellipse cx="1355.5" cy="452.0" rx="1.27" ry="1.75" opacity="0.70"/>
<ellipse cx="1556.8" cy="244.3" rx="0.89" ry="0.31" opacity="0.61"/>
<ellipse cx="1414.8" cy="342.3" rx="0.62" ry="0.63" opacity="0.79"/>
<ellipse cx="1471.9" cy="497.7" rx="0.84" ry="0.87" opacity="0.45"/>
<ellipse cx="1427.4" cy="548.9" rx="3.35" ry="3.56" opacity="0.66"/>
<ellipse cx="1566.1" cy="621.2" rx="1.97" ry="1.62" opacity="0.32"/>
<ellipse cx="1567.2" cy="703.1" rx="0.79" ry="0.31" opacity="0.58"/>
<ellipse cx="1718.7" cy="511.7" rx="1.39" ry="1.71" opacity="0.28"/>
<ellipse cx="1604.0" cy="555.1" rx="3.95" ry="3.87" opacity="0.28"/>
<ellipse cx="1380.9" cy="379.7" rx="3.27" ry="3.79" opacity="0.86"/>
<ellipse cx="1568.6" cy="442.7" rx="0.80" ry="0.79" opacity="0.28"/>
<ellipse cx="1432.5" cy="298.9" rx="0.73" ry="0.61" opacity="0.81"/>
<ellipse cx="1412.2" cy="610.6" rx="2.88" ry="2.89" opacity="0.80"/>
<ellipse cx="1730.7" cy="552.1" rx="2.46" ry="3.05" opacity="0.28"/>
<ellipse cx="1519.7" cy="649.7" rx="0.78" ry="0.57" opacity="0.53"/>
<ellipse cx="1535.5" cy="667.4" rx="0.78" ry="0.50" opacity="0.54"/>
<ellipse cx="1461.8" cy="288.1" rx="0.66" ry="0.50" opacity="0.74"/>
<ellipse cx="1617.8" cy="339.3" rx="0.79" ry="0.71" opacity="0.28"/>
<ellipse cx="1587.8" cy="479.7" rx="0.80" ry="0.80" opacity="0.28"/>
<ellipse cx="1538.9" cy="299.3" rx="1.00" ry="0.72" opacity="0.48"/>
<ellipse cx="1570.6" cy="544.4" rx="0.85" ry="0.83" opacity="0.28"/>
<ellipse cx="1498.6" cy="434.0" rx="0.88" ry="0.89" opacity="0.35"/>
<ellipse cx="1636.0" cy="342.9" rx="1.58" ry="1.46" opacity="0.28"/>
<ellipse cx="1600.8" cy="438.5" rx="0.93" ry="0.94" opacity="0.28"/>
<ellipse cx="1712.6" cy="590.6" rx="0.57" ry="0.64" opacity="0.28"/>
<ellipse cx="1735.6" cy="602.6" rx="0.56" ry="0.68" opacity="0.28"/>
<ellipse cx="1564.7" cy="270.6" rx="0.78" ry="0.45" opacity="0.51"/>
<ellipse cx="1485.8" cy="671.1" rx="1.58" ry="1.05" opacity="0.69"/>
<ellipse cx="1398.6" cy="355.1" rx="0.61" ry="0.65" opacity="0.83"/>
<ellipse cx="1609.9" cy="281.4" rx="3.40" ry="2.29" opacity="0.38"/>
<ellipse cx="1792.0" cy="509.6" rx="0.58" ry="1.22" opacity="0.28"/>
<ellipse cx="1461.5" cy="460.9" rx="0.76" ry="0.80" opacity="0.48"/>
<ellipse cx="1651.1" cy="494.9" rx="1.90" ry="2.03" opacity="0.28"/>
<ellipse cx="1350.8" cy="532.0" rx="0.95" ry="1.32" opacity="0.70"/>
<ellipse cx="1541.0" cy="242.0" rx="0.94" ry="0.31" opacity="0.66"/>
<ellipse cx="1354.4" cy="492.9" rx="0.56" ry="0.78" opacity="0.70"/>
<ellipse cx="1520.9" cy="564.7" rx="3.36" ry="3.19" opacity="0.33"/>
<ellipse cx="1398.9" cy="334.3" rx="0.80" ry="0.82" opacity="0.86"/>
<ellipse cx="1587.7" cy="506.9" rx="1.06" ry="1.06" opacity="0.28"/>
<ellipse cx="1411.2" cy="304.1" rx="1.50" ry="1.34" opacity="0.87"/>
<ellipse cx="1545.9" cy="398.2" rx="0.93" ry="0.88" opacity="0.28"/>
<ellipse cx="1393.7" cy="377.6" rx="0.61" ry="0.68" opacity="0.81"/>
<ellipse cx="1605.5" cy="528.7" rx="0.82" ry="0.82" opacity="0.28"/>
<ellipse cx="1540.5" cy="311.7" rx="3.48" ry="2.64" opacity="0.44"/>
<ellipse cx="1590.1" cy="646.1" rx="1.94" ry="1.49" opacity="0.34"/>
<ellipse cx="1697.1" cy="312.1" rx="0.53" ry="0.50" opacity="0.28"/>
<ellipse cx="1635.1" cy="653.0" rx="4.43" ry="3.49" opacity="0.29"/>
<ellipse cx="1590.1" cy="458.7" rx="2.37" ry="2.39" opacity="0.28"/>
<ellipse cx="1411.8" cy="571.4" rx="3.72" ry="3.99" opacity="0.74"/>
<ellipse cx="1639.2" cy="683.4" rx="0.62" ry="0.38" opacity="0.40"/>
<ellipse cx="1505.9" cy="425.1" rx="4.80" ry="4.78" opacity="0.33"/>
<ellipse cx="1730.2" cy="602.1" rx="2.73" ry="3.20" opacity="0.28"/>
<ellipse cx="1511.5" cy="269.8" rx="1.22" ry="0.73" opacity="0.64"/>
<ellipse cx="1460.6" cy="617.4" rx="2.27" ry="2.05" opacity="0.64"/>
<ellipse cx="1559.3" cy="384.7" rx="2.22" ry="2.08" opacity="0.28"/>
<ellipse cx="1604.0" cy="588.7" rx="0.77" ry="0.72" opacity="0.28"/>
<ellipse cx="1478.5" cy="560.3" rx="7.74" ry="7.63" opacity="0.48"/>
<ellipse cx="1617.5" cy="599.1" rx="0.85" ry="0.78" opacity="0.28"/>
<ellipse cx="1762.9" cy="505.3" rx="3.14" ry="4.86" opacity="0.28"/>
<ellipse cx="1689.3" cy="528.1" rx="3.37" ry="3.77" opacity="0.28"/>
<ellipse cx="1524.7" cy="513.5" rx="0.81" ry="0.81" opacity="0.28"/>
<ellipse cx="1560.8" cy="616.6" rx="0.79" ry="0.65" opacity="0.32"/>
<ellipse cx="1521.1" cy="649.2" rx="3.89" ry="2.86" opacity="0.53"/>
<ellipse cx="1629.9" cy="570.6" rx="4.10" ry="4.03" opacity="0.28"/>
<ellipse cx="1612.6" cy="444.5" rx="4.97" ry="5.05" opacity="0.28"/>
<ellipse cx="1773.8" cy="606.6" rx="1.01" ry="1.85" opacity="0.28"/>
<ellipse cx="1660.0" cy="323.9" rx="0.70" ry="0.64" opacity="0.28"/>
<ellipse cx="1526.1" cy="478.1" rx="2.21" ry="2.21" opacity="0.28"/>
<ellipse cx="1502.3" cy="595.6" rx="1.05" ry="0.95" opacity="0.45"/>
<ellipse cx="1566.5" cy="461.1" rx="4.34" ry="4.34" opacity="0.28"/>
<ellipse cx="1501.1" cy="362.4" rx="1.06" ry="0.98" opacity="0.44"/>
<ellipse cx="1553.0" cy="700.1" rx="0.83" ry="0.34" opacity="0.60"/>
<ellipse cx="1431.0" cy="632.5" rx="2.39" ry="2.15" opacity="0.78"/>
<ellipse cx="1663.0" cy="411.6" rx="0.80" ry="0.84" opacity="0.28"/>
<ellipse cx="1520.5" cy="460.2" rx="0.80" ry="0.81" opacity="0.28"/>
<ellipse cx="1380.2" cy="342.4" rx="1.09" ry="1.20" opacity="0.70"/>
<ellipse cx="1403.8" cy="518.6" rx="1.93" ry="2.20" opacity="0.73"/>
<ellipse cx="1527.9" cy="291.0" rx="2.60" ry="1.79" opacity="0.54"/>
<ellipse cx="1351.0" cy="448.5" rx="1.49" ry="2.09" opacity="0.70"/>
<ellipse cx="1617.3" cy="291.4" rx="1.11" ry="0.81" opacity="0.33"/>
<ellipse cx="1414.8" cy="589.7" rx="3.86" ry="4.01" opacity="0.76"/>
<ellipse cx="1486.4" cy="390.3" rx="0.84" ry="0.82" opacity="0.45"/>
<ellipse cx="1686.5" cy="613.4" rx="1.11" ry="1.10" opacity="0.28"/>
<ellipse cx="1532.5" cy="400.0" rx="0.96" ry="0.92" opacity="0.28"/>
<ellipse cx="1711.7" cy="354.4" rx="0.69" ry="0.76" opacity="0.28"/>
<ellipse cx="1720.5" cy="534.5" rx="3.21" ry="3.89" opacity="0.28"/>
<ellipse cx="1377.0" cy="407.1" rx="0.60" ry="0.72" opacity="0.85"/>
<ellipse cx="1520.1" cy="325.8" rx="2.98" ry="2.46" opacity="0.46"/>
<ellipse cx="1638.0" cy="549.9" rx="1.32" ry="1.34" opacity="0.28"/>
<ellipse cx="1605.6" cy="470.3" rx="4.61" ry="4.71" opacity="0.28"/>
<ellipse cx="1689.5" cy="360.1" rx="0.63" ry="0.66" opacity="0.28"/>
<ellipse cx="1470.3" cy="462.7" rx="1.38" ry="1.44" opacity="0.45"/>
<ellipse cx="1392.2" cy="468.4" rx="4.11" ry="5.00" opacity="0.76"/>
<ellipse cx="1542.0" cy="424.2" rx="0.80" ry="0.78" opacity="0.28"/>
<ellipse cx="1676.6" cy="584.4" rx="1.23" ry="1.27" opacity="0.28"/>
<ellipse cx="1351.3" cy="480.4" rx="2.17" ry="3.14" opacity="0.70"/>
<ellipse cx="1731.3" cy="442.4" rx="1.00" ry="1.30" opacity="0.28"/>
<ellipse cx="1553.5" cy="464.4" rx="1.31" ry="1.31" opacity="0.28"/>
<ellipse cx="1630.2" cy="403.3" rx="0.88" ry="0.88" opacity="0.28"/>
<ellipse cx="1473.2" cy="295.1" rx="0.88" ry="0.68" opacity="0.69"/>
<ellipse cx="1659.1" cy="331.3" rx="0.65" ry="0.61" opacity="0.28"/>
<ellipse cx="1511.4" cy="705.1" rx="0.71" ry="0.26" opacity="0.72"/>
<ellipse cx="1651.0" cy="458.9" rx="0.77" ry="0.82" opacity="0.28"/>
<ellipse cx="1627.7" cy="511.0" rx="0.80" ry="0.82" opacity="0.28"/>
<ellipse cx="1518.4" cy="336.5" rx="0.77" ry="0.66" opacity="0.44"/>
<ellipse cx="1732.2" cy="589.0" rx="0.52" ry="0.62" opacity="0.28"/>
<ellipse cx="1647.7" cy="385.5" rx="0.80" ry="0.81" opacity="0.28"/>
<ellipse cx="1388.2" cy="531.0" rx="3.80" ry="4.50" opacity="0.80"/>
<ellipse cx="1515.0" cy="270.9" rx="0.74" ry="0.44" opacity="0.63"/>
<ellipse cx="1549.3" cy="466.2" rx="1.87" ry="1.87" opacity="0.28"/>
<ellipse cx="1697.9" cy="380.2" rx="2.69" ry="2.97" opacity="0.28"/>
<ellipse cx="1403.0" cy="529.6" rx="2.70" ry="3.06" opacity="0.74"/>
<ellipse cx="1391.0" cy="312.5" rx="3.42" ry="3.36" opacity="0.70"/>
<ellipse cx="1692.7" cy="470.2" rx="0.89" ry="1.05" opacity="0.28"/>
<ellipse cx="1518.5" cy="492.9" rx="0.93" ry="0.94" opacity="0.28"/>
<ellipse cx="1601.5" cy="620.5" rx="2.99" ry="2.58" opacity="0.28"/>
<ellipse cx="1576.6" cy="318.9" rx="3.17" ry="2.53" opacity="0.32"/>
<ellipse cx="1580.1" cy="702.0" rx="4.05" ry="1.67" opacity="0.55"/>
<ellipse cx="1643.6" cy="433.5" rx="3.82" ry="3.99" opacity="0.28"/>
<ellipse cx="1599.4" cy="556.2" rx="2.83" ry="2.76" opacity="0.28"/>
<ellipse cx="1479.0" cy="390.1" rx="0.75" ry="0.74" opacity="0.47"/>
<ellipse cx="1570.2" cy="333.2" rx="2.21" ry="1.85" opacity="0.30"/>
<ellipse cx="1554.0" cy="236.6" rx="1.35" ry="0.33" opacity="0.65"/>
<ellipse cx="1361.1" cy="562.6" rx="1.29" ry="1.65" opacity="0.70"/>
<ellipse cx="1805.1" cy="436.7" rx="0.23" ry="0.71" opacity="0.28"/>
<ellipse cx="1405.1" cy="511.0" rx="1.25" ry="1.43" opacity="0.72"/>
<ellipse cx="1648.7" cy="694.7" rx="2.28" ry="1.12" opacity="0.43"/>
<ellipse cx="1613.0" cy="567.0" rx="0.77" ry="0.75" opacity="0.28"/>
<ellipse cx="1666.2" cy="436.2" rx="2.72" ry="2.94" opacity="0.28"/>
<ellipse cx="1644.2" cy="436.3" rx="2.01" ry="2.11" opacity="0.28"/>
<ellipse cx="1697.9" cy="411.2" rx="1.52" ry="1.73" opacity="0.28"/>
<ellipse cx="1665.9" cy="523.9" rx="1.08" ry="1.15" opacity="0.28"/>
<ellipse cx="1465.7" cy="419.6" rx="3.16" ry="3.23" opacity="0.49"/>
<ellipse cx="1491.8" cy="703.4" rx="3.44" ry="1.29" opacity="0.76"/>
<ellipse cx="1371.5" cy="496.1" rx="2.07" ry="2.68" opacity="0.84"/>
<ellipse cx="1609.2" cy="553.4" rx="2.70" ry="2.66" opacity="0.28"/>
<ellipse cx="1384.2" cy="583.8" rx="0.59" ry="0.67" opacity="0.86"/>
<ellipse cx="1580.6" cy="499.3" rx="3.76" ry="3.77" opacity="0.28"/>
<ellipse cx="1625.5" cy="286.8" rx="4.50" ry="3.23" opacity="0.34"/>
<ellipse cx="1597.7" cy="303.0" rx="4.93" ry="3.77" opacity="0.33"/>
<ellipse cx="1795.9" cy="407.1" rx="1.57" ry="4.05" opacity="0.28"/>
<ellipse cx="1647.9" cy="340.3" rx="4.21" ry="3.95" opacity="0.28"/>
<ellipse cx="1630.1" cy="379.0" rx="1.52" ry="1.49" opacity="0.28"/>
<ellipse cx="1498.4" cy="363.7" rx="2.00" ry="1.87" opacity="0.45"/>
<ellipse cx="1479.2" cy="470.3" rx="0.84" ry="0.87" opacity="0.41"/>
<ellipse cx="1513.7" cy="279.2" rx="0.74" ry="0.48" opacity="0.61"/>
<ellipse cx="1428.7" cy="380.2" rx="4.57" ry="4.74" opacity="0.68"/>
<ellipse cx="1548.8" cy="317.3" rx="3.59" ry="2.75" opacity="0.40"/>
<ellipse cx="1491.1" cy="513.1" rx="0.79" ry="0.80" opacity="0.38"/>
<ellipse cx="1538.7" cy="565.5" rx="0.85" ry="0.80" opacity="0.28"/>
<ellipse cx="1783.8" cy="541.8" rx="1.15" ry="2.14" opacity="0.28"/>
<ellipse cx="1519.4" cy="684.9" rx="3.25" ry="1.78" opacity="0.64"/>
<ellipse cx="1522.1" cy="586.2" rx="4.23" ry="3.86" opacity="0.37"/>
<ellipse cx="1357.4" cy="462.2" rx="2.23" ry="3.10" opacity="0.70"/>
<ellipse cx="1695.0" cy="553.4" rx="2.10" ry="2.33" opacity="0.28"/>
<ellipse cx="1364.0" cy="408.1" rx="0.92" ry="1.17" opacity="0.70"/>
<ellipse cx="1508.4" cy="519.4" rx="2.82" ry="2.82" opacity="0.31"/>
<ellipse cx="1416.7" cy="477.9" rx="2.09" ry="2.39" opacity="0.66"/>
<ellipse cx="1440.5" cy="490.0" rx="3.70" ry="4.00" opacity="0.57"/>
<ellipse cx="1526.7" cy="442.8" rx="0.79" ry="0.79" opacity="0.28"/>
<ellipse cx="1506.8" cy="330.4" rx="0.89" ry="0.76" opacity="0.49"/>
<ellipse cx="1730.6" cy="350.1" rx="1.34" ry="1.60" opacity="0.28"/>
<ellipse cx="1657.7" cy="402.9" rx="1.66" ry="1.74" opacity="0.28"/>
<ellipse cx="1486.9" cy="277.9" rx="2.34" ry="1.56" opacity="0.69"/>
<ellipse cx="1640.3" cy="619.7" rx="1.52" ry="1.37" opacity="0.28"/>
<ellipse cx="1533.4" cy="692.7" rx="2.81" ry="1.34" opacity="0.62"/>
<ellipse cx="1598.0" cy="300.7" rx="0.84" ry="0.64" opacity="0.34"/>
<ellipse cx="1600.2" cy="492.2" rx="0.78" ry="0.79" opacity="0.28"/>
<ellipse cx="1398.0" cy="320.9" rx="2.27" ry="2.25" opacity="0.70"/>
<ellipse cx="1454.0" cy="420.4" rx="0.74" ry="0.77" opacity="0.54"/>
<ellipse cx="1513.7" cy="548.1" rx="0.85" ry="0.83" opacity="0.33"/>
<ellipse cx="1419.4" cy="503.1" rx="0.70" ry="0.78" opacity="0.66"/>
<ellipse cx="1558.6" cy="375.9" rx="0.86" ry="0.80" opacity="0.28"/>
<ellipse cx="1581.9" cy="288.4" rx="4.03" ry="2.76" opacity="0.41"/>
<ellipse cx="1676.9" cy="522.1" rx="3.08" ry="3.37" opacity="0.28"/>
<ellipse cx="1580.6" cy="326.8" rx="2.16" ry="1.79" opacity="0.29"/>
<ellipse cx="1712.3" cy="456.7" rx="0.93" ry="1.14" opacity="0.28"/>
<ellipse cx="1665.9" cy="629.8" rx="0.63" ry="0.58" opacity="0.28"/>
<ellipse cx="1469.4" cy="309.9" rx="0.73" ry="0.61" opacity="0.66"/>
<ellipse cx="1585.0" cy="452.7" rx="1.45" ry="1.46" opacity="0.28"/>
<ellipse cx="1460.1" cy="563.7" rx="0.73" ry="0.73" opacity="0.55"/>
<ellipse cx="1783.6" cy="545.8" rx="0.56" ry="1.04" opacity="0.28"/>
<ellipse cx="1524.0" cy="678.0" rx="3.45" ry="2.03" opacity="0.60"/>
<ellipse cx="1615.6" cy="528.9" rx="0.92" ry="0.93" opacity="0.28"/>
<ellipse cx="1409.9" cy="430.0" rx="0.94" ry="1.05" opacity="0.70"/>
<ellipse cx="1525.0" cy="512.9" rx="0.92" ry="0.92" opacity="0.28"/>
<ellipse cx="1390.2" cy="535.6" rx="1.46" ry="1.71" opacity="0.79"/>
<ellipse cx="1615.5" cy="579.6" rx="2.78" ry="2.67" opacity="0.28"/>
<ellipse cx="1442.4" cy="553.2" rx="1.26" ry="1.30" opacity="0.60"/>
<ellipse cx="1559.8" cy="459.5" rx="1.94" ry="1.93" opacity="0.28"/>
<ellipse cx="1749.6" cy="524.1" rx="2.01" ry="2.80" opacity="0.28"/>
<ellipse cx="1467.6" cy="369.4" rx="0.73" ry="0.71" opacity="0.55"/>
<ellipse cx="1518.9" cy="523.3" rx="0.97" ry="0.96" opacity="0.28"/>
<ellipse cx="1737.4" cy="400.9" rx="0.54" ry="0.70" opacity="0.28"/>
<ellipse cx="1524.3" cy="552.0" rx="0.88" ry="0.85" opacity="0.30"/>
<ellipse cx="1581.5" cy="521.9" rx="6.86" ry="6.81" opacity="0.28"/>
<ellipse cx="1594.1" cy="440.1" rx="3.57" ry="3.58" opacity="0.28"/>
<ellipse cx="1440.9" cy="675.7" rx="2.69" ry="1.77" opacity="0.84"/>
<ellipse cx="1477.8" cy="563.8" rx="1.42" ry="1.39" opacity="0.49"/>
<ellipse cx="1494.6" cy="705.4" rx="1.25" ry="0.43" opacity="0.76"/>
<ellipse cx="1726.0" cy="518.9" rx="1.56" ry="1.95" opacity="0.28"/>
<ellipse cx="1382.5" cy="342.8" rx="0.54" ry="0.60" opacity="0.70"/>
<ellipse cx="1713.2" cy="361.5" rx="3.77" ry="4.26" opacity="0.28"/>
<ellipse cx="1487.9" cy="706.6" rx="1.68" ry="0.53" opacity="0.78"/>
<ellipse cx="1415.0" cy="661.1" rx="2.88" ry="2.28" opacity="0.70"/>
<ellipse cx="1565.6" cy="311.6" rx="3.78" ry="2.89" opacity="0.37"/>
<ellipse cx="1479.4" cy="525.1" rx="0.79" ry="0.80" opacity="0.43"/>
<ellipse cx="1378.5" cy="482.8" rx="0.62" ry="0.79" opacity="0.81"/>
<ellipse cx="1660.0" cy="678.7" rx="1.10" ry="0.73" opacity="0.36"/>
<ellipse cx="1633.3" cy="479.3" rx="3.88" ry="4.07" opacity="0.28"/>
<ellipse cx="1525.1" cy="522.7" rx="1.61" ry="1.60" opacity="0.28"/>
<ellipse cx="1397.2" cy="386.7" rx="0.99" ry="1.10" opacity="0.79"/>
<ellipse cx="1549.4" cy="505.0" rx="1.03" ry="1.02" opacity="0.28"/>
<ellipse cx="1630.3" cy="661.0" rx="1.13" ry="0.85" opacity="0.32"/>
<ellipse cx="1700.5" cy="539.6" rx="1.73" ry="1.97" opacity="0.28"/>
<ellipse cx="1715.4" cy="385.3" rx="0.86" ry="1.00" opacity="0.28"/>
<ellipse cx="1392.9" cy="298.2" rx="2.00" ry="1.83" opacity="0.70"/>
<ellipse cx="1617.2" cy="457.9" rx="0.90" ry="0.93" opacity="0.28"/>
<ellipse cx="1573.7" cy="470.2" rx="0.80" ry="0.80" opacity="0.28"/>
<ellipse cx="1553.6" cy="605.3" rx="3.40" ry="2.90" opacity="0.31"/>
<ellipse cx="1503.1" cy="538.6" rx="2.06" ry="2.04" opacity="0.36"/>
<ellipse cx="1495.3" cy="617.0" rx="2.65" ry="2.30" opacity="0.52"/>
<ellipse cx="1677.6" cy="367.3" rx="1.13" ry="1.17" opacity="0.28"/>
<ellipse cx="1502.1" cy="390.0" rx="0.77" ry="0.75" opacity="0.39"/>
<ellipse cx="1454.9" cy="386.6" rx="0.75" ry="0.75" opacity="0.57"/>
<ellipse cx="1577.3" cy="463.0" rx="2.78" ry="2.79" opacity="0.28"/>
<ellipse cx="1478.7" cy="625.7" rx="0.73" ry="0.62" opacity="0.60"/>
<ellipse cx="1447.6" cy="439.1" rx="0.74" ry="0.78" opacity="0.55"/>
<ellipse cx="1403.4" cy="609.1" rx="2.72" ry="2.80" opacity="0.83"/>
<ellipse cx="1579.5" cy="695.5" rx="0.86" ry="0.41" opacity="0.53"/>
<ellipse cx="1617.8" cy="555.6" rx="2.97" ry="2.94" opacity="0.28"/>
<ellipse cx="1402.0" cy="453.3" rx="0.68" ry="0.79" opacity="0.72"/>
<ellipse cx="1652.3" cy="359.0" rx="1.80" ry="1.76" opacity="0.28"/>
<ellipse cx="1645.9" cy="356.1" rx="3.40" ry="3.28" opacity="0.28"/>
<ellipse cx="1591.6" cy="383.1" rx="0.81" ry="0.77" opacity="0.28"/>
<ellipse cx="1635.0" cy="286.2" rx="0.66" ry="0.48" opacity="0.33"/>
<ellipse cx="1418.5" cy="563.3" rx="1.23" ry="1.31" opacity="0.71"/>
<ellipse cx="1769.8" cy="396.9" rx="2.55" ry="4.17" opacity="0.28"/>
<ellipse cx="1575.0" cy="558.2" rx="1.32" ry="1.26" opacity="0.28"/>
<ellipse cx="1660.6" cy="348.8" rx="1.08" ry="1.05" opacity="0.28"/>
<ellipse cx="1557.7" cy="367.5" rx="0.81" ry="0.74" opacity="0.28"/>
<ellipse cx="1615.6" cy="589.4" rx="2.16" ry="2.04" opacity="0.28"/>
<ellipse cx="1587.4" cy="356.6" rx="1.35" ry="1.22" opacity="0.28"/>
<ellipse cx="1492.8" cy="288.5" rx="3.10" ry="2.23" opacity="0.64"/>
<ellipse cx="1743.6" cy="617.1" rx="0.43" ry="0.54" opacity="0.28"/>
<ellipse cx="1421.4" cy="645.9" rx="0.77" ry="0.66" opacity="0.84"/>
<ellipse cx="1544.0" cy="294.1" rx="0.81" ry="0.56" opacity="0.48"/>
<ellipse cx="1726.0" cy="522.4" rx="3.77" ry="4.71" opacity="0.28"/>
<ellipse cx="1502.9" cy="638.8" rx="2.25" ry="1.78" opacity="0.55"/>
<ellipse cx="1537.1" cy="562.7" rx="1.25" ry="1.17" opacity="0.28"/>
<ellipse cx="1516.4" cy="540.6" rx="0.79" ry="0.77" opacity="0.31"/>
<ellipse cx="1654.6" cy="338.5" rx="4.34" ry="4.09" opacity="0.28"/>
<ellipse cx="1631.6" cy="674.4" rx="2.60" ry="1.75" opacity="0.37"/>
<ellipse cx="1437.6" cy="269.6" rx="2.96" ry="1.92" opacity="0.86"/>
<ellipse cx="1654.6" cy="549.6" rx="0.72" ry="0.75" opacity="0.28"/>
<ellipse cx="1606.0" cy="691.4" rx="0.69" ry="0.37" opacity="0.47"/>
<ellipse cx="1476.2" cy="366.8" rx="0.74" ry="0.71" opacity="0.52"/>
<ellipse cx="1782.0" cy="420.0" rx="0.95" ry="1.79" opacity="0.28"/>
<ellipse cx="1600.5" cy="672.8" rx="1.12" ry="0.73" opacity="0.41"/>
<ellipse cx="1739.0" cy="563.5" rx="0.64" ry="0.81" opacity="0.28"/>
<ellipse cx="1654.4" cy="543.6" rx="3.68" ry="3.82" opacity="0.28"/>
<ellipse cx="1505.1" cy="322.9" rx="0.77" ry="0.64" opacity="0.52"/>
<ellipse cx="1495.0" cy="701.5" rx="0.85" ry="0.34" opacity="0.75"/>
<ellipse cx="1587.3" cy="272.6" rx="3.26" ry="1.96" opacity="0.45"/>
<ellipse cx="1601.5" cy="239.4" rx="0.68" ry="0.20" opacity="0.55"/>
<ellipse cx="1603.2" cy="497.5" rx="0.82" ry="0.83" opacity="0.28"/>
<ellipse cx="1714.7" cy="533.2" rx="0.75" ry="0.89" opacity="0.28"/>
<ellipse cx="1526.5" cy="266.9" rx="0.76" ry="0.42" opacity="0.61"/>
<ellipse cx="1421.7" cy="525.1" rx="0.69" ry="0.76" opacity="0.66"/>
<ellipse cx="1611.7" cy="625.0" rx="1.59" ry="1.36" opacity="0.28"/>
<ellipse cx="1640.2" cy="265.1" rx="0.60" ry="0.35" opacity="0.40"/>
<ellipse cx="1430.3" cy="579.5" rx="3.79" ry="3.87" opacity="0.68"/>
<ellipse cx="1577.0" cy="405.1" rx="0.84" ry="0.81" opacity="0.28"/>
<ellipse cx="1705.6" cy="519.0" rx="4.03" ry="4.72" opacity="0.28"/>
<ellipse cx="1550.2" cy="323.3" rx="0.80" ry="0.63" opacity="0.38"/>
<ellipse cx="1660.1" cy="507.5" rx="0.87" ry="0.93" opacity="0.28"/>
<ellipse cx="1504.5" cy="655.0" rx="0.76" ry="0.55" opacity="0.59"/>
<ellipse cx="1666.5" cy="611.3" rx="0.73" ry="0.71" opacity="0.28"/>
<ellipse cx="1778.8" cy="567.8" rx="0.36" ry="0.63" opacity="0.28"/>
<ellipse cx="1612.8" cy="304.0" rx="1.67" ry="1.31" opacity="0.30"/>
<ellipse cx="1443.4" cy="602.3" rx="0.85" ry="0.82" opacity="0.67"/>
<ellipse cx="1730.4" cy="623.7" rx="0.47" ry="0.54" opacity="0.28"/>
<ellipse cx="1656.7" cy="302.6" rx="1.01" ry="0.84" opacity="0.28"/>
<ellipse cx="1457.5" cy="290.8" rx="0.65" ry="0.50" opacity="0.75"/>
<ellipse cx="1389.4" cy="630.3" rx="0.64" ry="0.65" opacity="0.70"/>
<ellipse cx="1554.5" cy="678.5" rx="0.80" ry="0.45" opacity="0.53"/>
<ellipse cx="1736.6" cy="518.0" rx="0.59" ry="0.78" opacity="0.28"/>
<ellipse cx="1383.2" cy="544.6" rx="1.41" ry="1.68" opacity="0.83"/>
<ellipse cx="1566.7" cy="688.2" rx="2.01" ry="1.04" opacity="0.53"/>
<ellipse cx="1693.5" cy="546.0" rx="0.66" ry="0.73" opacity="0.28"/>
<ellipse cx="1435.8" cy="689.3" rx="0.52" ry="0.25" opacity="0.70"/>
<ellipse cx="1584.3" cy="517.8" rx="1.51" ry="1.51" opacity="0.28"/>
<ellipse cx="1529.9" cy="628.9" rx="2.03" ry="1.62" opacity="0.45"/>
<ellipse cx="1449.9" cy="404.4" rx="0.74" ry="0.76" opacity="0.57"/>
<ellipse cx="1454.1" cy="491.9" rx="1.44" ry="1.52" opacity="0.51"/>
<ellipse cx="1541.4" cy="579.1" rx="4.13" ry="3.76" opacity="0.29"/>
<ellipse cx="1542.6" cy="592.7" rx="1.58" ry="1.40" opacity="0.31"/>
<ellipse cx="1522.9" cy="700.8" rx="0.95" ry="0.39" opacity="0.68"/>
<ellipse cx="1736.4" cy="590.6" rx="0.51" ry="0.62" opacity="0.28"/>
<ellipse cx="1369.2" cy="374.6" rx="2.64" ry="3.18" opacity="0.70"/>
<ellipse cx="1579.2" cy="672.1" rx="3.72" ry="2.36" opacity="0.45"/>
<ellipse cx="1579.6" cy="270.0" rx="1.19" ry="0.69" opacity="0.48"/>
<ellipse cx="1646.6" cy="694.3" rx="1.07" ry="0.54" opacity="0.43"/>
<ellipse cx="1621.8" cy="384.1" rx="3.06" ry="3.00" opacity="0.28"/>
<ellipse cx="1463.3" cy="388.0" rx="0.76" ry="0.76" opacity="0.54"/>
<ellipse cx="1766.9" cy="461.6" rx="2.59" ry="4.26" opacity="0.28"/>
<ellipse cx="1640.1" cy="530.4" rx="1.66" ry="1.71" opacity="0.28"/>
<ellipse cx="1540.3" cy="524.1" rx="3.93" ry="3.86" opacity="0.28"/>
<ellipse cx="1356.5" cy="545.9" rx="2.72" ry="3.62" opacity="0.70"/>
<ellipse cx="1367.1" cy="365.8" rx="0.53" ry="0.64" opacity="0.70"/>
<ellipse cx="1508.3" cy="268.9" rx="0.73" ry="0.43" opacity="0.65"/>
<ellipse cx="1519.8" cy="284.6" rx="3.47" ry="2.32" opacity="0.58"/>
<ellipse cx="1575.0" cy="274.9" rx="2.20" ry="1.34" opacity="0.47"/>
<ellipse cx="1726.8" cy="629.0" rx="0.46" ry="0.51" opacity="0.28"/>
<ellipse cx="1367.4" cy="496.8" rx="3.80" ry="5.00" opacity="0.86"/>
<ellipse cx="1558.9" cy="691.2" rx="2.69" ry="1.31" opacity="0.56"/>
<ellipse cx="1555.3" cy="281.0" rx="3.84" ry="2.38" opacity="0.50"/>
<ellipse cx="1523.8" cy="332.3" rx="3.32" ry="2.79" opacity="0.43"/>
<ellipse cx="1364.4" cy="453.8" rx="1.13" ry="1.49" opacity="0.87"/>
<ellipse cx="1563.8" cy="529.5" rx="5.05" ry="4.95" opacity="0.28"/>
<ellipse cx="1530.6" cy="396.5" rx="2.02" ry="1.93" opacity="0.28"/>
<ellipse cx="1525.1" cy="642.7" rx="0.78" ry="0.59" opacity="0.50"/>
<ellipse cx="1432.5" cy="618.8" rx="0.87" ry="0.82" opacity="0.74"/>
<ellipse cx="1624.4" cy="613.6" rx="0.72" ry="0.65" opacity="0.28"/>
<ellipse cx="1383.9" cy="492.6" rx="2.78" ry="3.44" opacity="0.79"/>
<ellipse cx="1559.6" cy="569.3" rx="3.00" ry="2.79" opacity="0.28"/>
<ellipse cx="1571.6" cy="660.1" rx="1.26" ry="0.87" opacity="0.43"/>
<ellipse cx="1530.9" cy="707.3" rx="0.81" ry="0.27" opacity="0.68"/>
<ellipse cx="1634.9" cy="342.1" rx="1.64" ry="1.52" opacity="0.28"/>
<ellipse cx="1649.0" cy="624.3" rx="2.31" ry="2.09" opacity="0.28"/>
<ellipse cx="1416.0" cy="671.1" rx="0.54" ry="0.39" opacity="0.70"/>
<ellipse cx="1405.4" cy="375.9" rx="0.64" ry="0.69" opacity="0.77"/>
<ellipse cx="1623.0" cy="557.0" rx="1.00" ry="1.00" opacity="0.28"/>
<ellipse cx="1524.5" cy="588.4" rx="2.90" ry="2.63" opacity="0.36"/>
<ellipse cx="1544.0" cy="440.9" rx="0.80" ry="0.79" opacity="0.28"/>
<ellipse cx="1659.7" cy="546.6" rx="1.82" ry="1.90" opacity="0.28"/>
<ellipse cx="1706.2" cy="602.8" rx="0.58" ry="0.62" opacity="0.28"/>
<ellipse cx="1525.9" cy="534.3" rx="2.67" ry="2.62" opacity="0.28"/>
<ellipse cx="1650.0" cy="400.8" rx="0.72" ry="0.74" opacity="0.28"/>
<ellipse cx="1629.1" cy="495.1" rx="1.20" ry="1.24" opacity="0.28"/>
<ellipse cx="1402.4" cy="430.5" rx="3.07" ry="3.50" opacity="0.73"/>
<ellipse cx="1758.6" cy="544.6" rx="0.56" ry="0.82" opacity="0.28"/>
<ellipse cx="1493.1" cy="296.9" rx="0.89" ry="0.67" opacity="0.62"/>
<ellipse cx="1783.5" cy="578.9" rx="0.61" ry="1.23" opacity="0.28"/>
<ellipse cx="1552.3" cy="560.2" rx="0.94" ry="0.89" opacity="0.28"/>
<ellipse cx="1686.6" cy="379.2" rx="1.65" ry="1.77" opacity="0.28"/>
<ellipse cx="1585.5" cy="273.5" rx="0.74" ry="0.45" opacity="0.46"/>
<ellipse cx="1736.1" cy="598.4" rx="0.55" ry="0.67" opacity="0.28"/>
<ellipse cx="1631.9" cy="574.9" rx="3.94" ry="3.86" opacity="0.28"/>
<ellipse cx="1398.4" cy="639.3" rx="0.62" ry="0.59" opacity="0.70"/>
<ellipse cx="1709.6" cy="500.7" rx="0.77" ry="0.93" opacity="0.28"/>
<ellipse cx="1396.8" cy="650.0" rx="0.89" ry="0.81" opacity="0.70"/>
<ellipse cx="1436.6" cy="288.6" rx="0.69" ry="0.54" opacity="0.82"/>
<ellipse cx="1365.3" cy="557.2" rx="0.98" ry="1.23" opacity="0.70"/>
<ellipse cx="1535.9" cy="541.2" rx="2.16" ry="2.09" opacity="0.28"/>
<ellipse cx="1595.9" cy="241.7" rx="0.70" ry="0.22" opacity="0.55"/>
<ellipse cx="1725.3" cy="576.3" rx="1.10" ry="1.31" opacity="0.28"/>
<ellipse cx="1435.5" cy="415.8" rx="1.88" ry="1.99" opacity="0.61"/>
<ellipse cx="1699.7" cy="316.5" rx="0.54" ry="0.52" opacity="0.28"/>
<ellipse cx="1678.4" cy="477.5" rx="0.70" ry="0.80" opacity="0.28"/>
<ellipse cx="1395.4" cy="300.3" rx="0.51" ry="0.47" opacity="0.70"/>
<ellipse cx="1623.2" cy="670.1" rx="2.00" ry="1.38" opacity="0.37"/>
<ellipse cx="1675.7" cy="398.3" rx="0.75" ry="0.80" opacity="0.28"/>
<ellipse cx="1729.0" cy="537.1" rx="0.84" ry="1.05" opacity="0.28"/>
<ellipse cx="1682.4" cy="591.4" rx="1.55" ry="1.60" opacity="0.28"/>
<ellipse cx="1615.9" cy="495.3" rx="0.77" ry="0.79" opacity="0.28"/>
<ellipse cx="1612.0" cy="524.2" rx="3.55" ry="3.58" opacity="0.28"/>
<ellipse cx="1524.7" cy="326.9" rx="5.20" ry="4.29" opacity="0.45"/>
<ellipse cx="1658.8" cy="410.6" rx="0.71" ry="0.75" opacity="0.28"/>
<ellipse cx="1486.0" cy="602.7" rx="1.04" ry="0.94" opacity="0.52"/>
<ellipse cx="1615.7" cy="580.7" rx="0.93" ry="0.89" opacity="0.28"/>
<ellipse cx="1587.2" cy="318.7" rx="3.21" ry="2.60" opacity="0.30"/>
<ellipse cx="1543.1" cy="596.1" rx="1.12" ry="0.98" opacity="0.32"/>
<ellipse cx="1442.6" cy="361.0" rx="2.08" ry="2.06" opacity="0.65"/>
<ellipse cx="1640.2" cy="695.0" rx="0.59" ry="0.29" opacity="0.44"/>
<ellipse cx="1731.6" cy="306.5" rx="0.42" ry="0.46" opacity="0.28"/>
<ellipse cx="1507.8" cy="284.2" rx="3.55" ry="2.41" opacity="0.61"/>
<ellipse cx="1804.5" cy="539.2" rx="1.05" ry="3.33" opacity="0.28"/>
<ellipse cx="1494.4" cy="451.9" rx="0.78" ry="0.79" opacity="0.36"/>
<ellipse cx="1509.5" cy="656.9" rx="0.98" ry="0.70" opacity="0.58"/>
<ellipse cx="1493.5" cy="349.3" rx="1.24" ry="1.13" opacity="0.50"/>
<ellipse cx="1477.1" cy="643.4" rx="1.73" ry="1.38" opacity="0.65"/>
<ellipse cx="1419.7" cy="564.2" rx="4.43" ry="4.71" opacity="0.70"/>
<ellipse cx="1402.2" cy="660.6" rx="0.53" ry="0.43" opacity="0.70"/>
<ellipse cx="1505.4" cy="597.8" rx="2.99" ry="2.70" opacity="0.45"/>
<ellipse cx="1501.0" cy="377.7" rx="2.67" ry="2.55" opacity="0.41"/>
<ellipse cx="1524.4" cy="573.6" rx="0.79" ry="0.73" opacity="0.33"/>
<ellipse cx="1493.3" cy="691.0" rx="1.24" ry="0.64" opacity="0.72"/>
<ellipse cx="1407.5" cy="583.3" rx="0.63" ry="0.67" opacity="0.78"/>
<ellipse cx="1616.4" cy="330.6" rx="1.45" ry="1.27" opacity="0.28"/>
<ellipse cx="1390.9" cy="367.7" rx="0.79" ry="0.87" opacity="0.84"/>
<ellipse cx="1657.9" cy="630.5" rx="0.70" ry="0.63" opacity="0.28"/>
<ellipse cx="1612.8" cy="337.7" rx="1.07" ry="0.96" opacity="0.28"/>
<ellipse cx="1491.3" cy="615.7" rx="0.75" ry="0.66" opacity="0.53"/>
<ellipse cx="1396.6" cy="467.3" rx="1.15" ry="1.38" opacity="0.74"/>
<ellipse cx="1539.5" cy="459.3" rx="0.94" ry="0.94" opacity="0.28"/>
<ellipse cx="1450.5" cy="402.1" rx="0.81" ry="0.83" opacity="0.57"/>
<ellipse cx="1442.7" cy="369.1" rx="1.08" ry="1.08" opacity="0.64"/>
<ellipse cx="1643.9" cy="359.9" rx="1.83" ry="1.77" opacity="0.28"/>
<ellipse cx="1624.0" cy="362.1" rx="1.14" ry="1.09" opacity="0.28"/>
<ellipse cx="1601.5" cy="252.1" rx="0.69" ry="0.31" opacity="0.50"/>
<ellipse cx="1523.8" cy="462.4" rx="0.82" ry="0.82" opacity="0.28"/>
<ellipse cx="1349.6" cy="487.1" rx="0.54" ry="0.79" opacity="0.70"/>
<ellipse cx="1556.2" cy="677.3" rx="0.79" ry="0.45" opacity="0.52"/>
<ellipse cx="1474.1" cy="323.8" rx="0.76" ry="0.66" opacity="0.62"/>
<ellipse cx="1414.8" cy="657.9" rx="1.49" ry="1.22" opacity="0.70"/>
<ellipse cx="1593.0" cy="671.3" rx="0.73" ry="0.48" opacity="0.42"/>
<ellipse cx="1653.4" cy="422.1" rx="0.85" ry="0.89" opacity="0.28"/>
<ellipse cx="1564.9" cy="459.5" rx="1.94" ry="1.94" opacity="0.28"/>
<ellipse cx="1485.4" cy="545.1" rx="1.03" ry="1.02" opacity="0.43"/>
<ellipse cx="1582.3" cy="418.4" rx="0.79" ry="0.78" opacity="0.28"/>
<ellipse cx="1669.6" cy="566.7" rx="0.74" ry="0.78" opacity="0.28"/>
<ellipse cx="1512.5" cy="694.4" rx="0.98" ry="0.47" opacity="0.68"/>
<ellipse cx="1693.5" cy="284.9" rx="1.24" ry="0.96" opacity="0.29"/>
<ellipse cx="1474.8" cy="591.9" rx="0.78" ry="0.73" opacity="0.54"/>
<ellipse cx="1505.5" cy="319.3" rx="1.39" ry="1.14" opacity="0.52"/>
<ellipse cx="1461.1" cy="269.3" rx="0.64" ry="0.41" opacity="0.79"/>
<ellipse cx="1653.1" cy="552.5" rx="1.15" ry="1.18" opacity="0.28"/>
<ellipse cx="1496.6" cy="649.5" rx="4.03" ry="3.05" opacity="0.60"/>
<ellipse cx="1677.3" cy="689.2" rx="1.31" ry="0.73" opacity="0.39"/>
<ellipse cx="1542.1" cy="604.4" rx="0.79" ry="0.68" opacity="0.34"/>
<ellipse cx="1499.4" cy="489.4" rx="3.23" ry="3.27" opacity="0.33"/>
<ellipse cx="1469.3" cy="678.1" rx="1.45" ry="0.91" opacity="0.76"/>
<ellipse cx="1669.1" cy="518.2" rx="1.29" ry="1.39" opacity="0.28"/>
<ellipse cx="1468.3" cy="633.2" rx="1.59" ry="1.35" opacity="0.65"/>
<ellipse cx="1512.3" cy="316.8" rx="1.92" ry="1.55" opacity="0.51"/>
<ellipse cx="1448.3" cy="398.3" rx="1.88" ry="1.92" opacity="0.58"/>
<ellipse cx="1491.3" cy="686.9" rx="0.70" ry="0.39" opacity="0.72"/>
<ellipse cx="1425.7" cy="506.1" rx="0.71" ry="0.78" opacity="0.63"/>
<ellipse cx="1486.0" cy="314.0" rx="0.75" ry="0.62" opacity="0.60"/>
<ellipse cx="1503.3" cy="299.6" rx="2.92" ry="2.20" opacity="0.58"/>
<ellipse cx="1556.8" cy="573.7" rx="1.16" ry="1.07" opacity="0.28"/>
<ellipse cx="1615.1" cy="666.7" rx="1.38" ry="0.97" opacity="0.37"/>
<ellipse cx="1781.1" cy="397.7" rx="0.34" ry="0.65" opacity="0.28"/>
<ellipse cx="1448.1" cy="256.8" rx="0.57" ry="0.29" opacity="0.86"/>
<ellipse cx="1661.0" cy="267.5" rx="0.56" ry="0.33" opacity="0.37"/>
<ellipse cx="1544.8" cy="430.9" rx="0.88" ry="0.87" opacity="0.28"/>
<ellipse cx="1625.6" cy="253.1" rx="4.12" ry="1.83" opacity="0.46"/>
<ellipse cx="1577.7" cy="597.2" rx="0.78" ry="0.70" opacity="0.28"/>
<ellipse cx="1486.6" cy="689.9" rx="1.56" ry="0.82" opacity="0.74"/>
<ellipse cx="1623.9" cy="595.4" rx="1.04" ry="0.98" opacity="0.28"/>
<ellipse cx="1406.2" cy="359.6" rx="1.74" ry="1.84" opacity="0.79"/>
<ellipse cx="1693.8" cy="409.5" rx="2.66" ry="2.99" opacity="0.28"/>
<ellipse cx="1628.4" cy="699.4" rx="0.63" ry="0.28" opacity="0.47"/>
<ellipse cx="1494.3" cy="327.0" rx="0.74" ry="0.63" opacity="0.54"/>
<ellipse cx="1662.7" cy="397.5" rx="2.04" ry="2.13" opacity="0.28"/>
<ellipse cx="1583.1" cy="528.7" rx="2.53" ry="2.50" opacity="0.28"/>
<ellipse cx="1533.3" cy="697.1" rx="0.84" ry="0.37" opacity="0.64"/>
<ellipse cx="1598.9" cy="317.8" rx="3.79" ry="3.10" opacity="0.28"/>
<ellipse cx="1584.8" cy="549.7" rx="1.78" ry="1.73" opacity="0.28"/>
<ellipse cx="1526.5" cy="455.5" rx="0.80" ry="0.80" opacity="0.28"/>
<ellipse cx="1663.5" cy="305.4" rx="1.43" ry="1.22" opacity="0.28"/>
<ellipse cx="1688.0" cy="618.1" rx="0.60" ry="0.59" opacity="0.28"/>
<ellipse cx="1391.1" cy="438.7" rx="0.72" ry="0.86" opacity="0.77"/>
<ellipse cx="1537.0" cy="518.5" rx="1.06" ry="1.05" opacity="0.28"/>
<ellipse cx="1651.5" cy="477.0" rx="4.61" ry="4.97" opacity="0.28"/>
<ellipse cx="1466.6" cy="600.4" rx="1.26" ry="1.18" opacity="0.59"/>
<ellipse cx="1392.2" cy="307.5" rx="0.53" ry="0.51" opacity="0.70"/>
<ellipse cx="1425.1" cy="270.9" rx="1.25" ry="0.83" opacity="0.70"/>
<ellipse cx="1735.9" cy="502.2" rx="3.58" ry="4.77" opacity="0.28"/>
<ellipse cx="1562.9" cy="387.3" rx="0.79" ry="0.75" opacity="0.28"/>
<ellipse cx="1419.4" cy="493.6" rx="0.84" ry="0.94" opacity="0.65"/>
<ellipse cx="1604.9" cy="551.8" rx="0.85" ry="0.83" opacity="0.28"/>
<ellipse cx="1470.3" cy="443.2" rx="2.88" ry="2.96" opacity="0.46"/>
<ellipse cx="1408.9" cy="517.4" rx="2.24" ry="2.53" opacity="0.70"/>
<ellipse cx="1412.8" cy="490.6" rx="3.12" ry="3.56" opacity="0.68"/>
<ellipse cx="1519.4" cy="531.2" rx="1.13" ry="1.12" opacity="0.28"/>
<ellipse cx="1541.3" cy="348.6" rx="1.06" ry="0.91" opacity="0.34"/>
<ellipse cx="1565.6" cy="547.4" rx="2.13" ry="2.05" opacity="0.28"/>
<ellipse cx="1620.2" cy="393.4" rx="1.18" ry="1.17" opacity="0.28"/>
<ellipse cx="1418.9" cy="630.2" rx="3.79" ry="3.53" opacity="0.81"/>
<ellipse cx="1669.5" cy="465.0" rx="0.72" ry="0.80" opacity="0.28"/>
<ellipse cx="1612.8" cy="287.2" rx="3.63" ry="2.57" opacity="0.36"/>
<ellipse cx="1414.8" cy="626.8" rx="0.66" ry="0.63" opacity="0.82"/>
<ellipse cx="1516.7" cy="649.1" rx="0.95" ry="0.70" opacity="0.54"/>
<ellipse cx="1700.4" cy="536.4" rx="1.05" ry="1.20" opacity="0.28"/>
<ellipse cx="1676.9" cy="476.1" rx="3.97" ry="4.49" opacity="0.28"/>
<ellipse cx="1483.2" cy="389.0" rx="0.80" ry="0.79" opacity="0.46"/>
<ellipse cx="1583.6" cy="707.4" rx="1.59" ry="0.56" opacity="0.57"/>
<ellipse cx="1449.3" cy="517.7" rx="0.74" ry="0.77" opacity="0.55"/>
<ellipse cx="1432.0" cy="418.4" rx="0.81" ry="0.86" opacity="0.62"/>
<ellipse cx="1466.9" cy="499.8" rx="1.65" ry="1.71" opacity="0.47"/>
<ellipse cx="1635.1" cy="362.0" rx="0.97" ry="0.93" opacity="0.28"/>
<ellipse cx="1523.8" cy="467.1" rx="3.24" ry="3.25" opacity="0.28"/>
<ellipse cx="1564.3" cy="615.3" rx="1.06" ry="0.89" opacity="0.31"/>
<ellipse cx="1383.6" cy="344.4" rx="0.56" ry="0.62" opacity="0.70"/>
<ellipse cx="1637.3" cy="581.5" rx="0.78" ry="0.76" opacity="0.28"/>
<ellipse cx="1665.9" cy="659.4" rx="0.62" ry="0.49" opacity="0.28"/>
<ellipse cx="1629.0" cy="266.6" rx="0.65" ry="0.38" opacity="0.41"/>
<ellipse cx="1464.1" cy="419.8" rx="3.68" ry="3.76" opacity="0.50"/>
<ellipse cx="1382.4" cy="614.8" rx="0.77" ry="0.84" opacity="0.70"/>
<ellipse cx="1369.6" cy="462.1" rx="3.56" ry="4.66" opacity="0.85"/>
<ellipse cx="1438.7" cy="331.6" rx="2.82" ry="2.64" opacity="0.72"/>
<ellipse cx="1622.8" cy="465.7" rx="1.07" ry="1.10" opacity="0.28"/>
<ellipse cx="1581.7" cy="710.8" rx="1.35" ry="0.41" opacity="0.58"/>
<ellipse cx="1560.1" cy="257.9" rx="5.10" ry="2.44" opacity="0.56"/>
<ellipse cx="1593.1" cy="364.9" rx="0.76" ry="0.71" opacity="0.28"/>
<ellipse cx="1526.6" cy="629.2" rx="0.79" ry="0.63" opacity="0.46"/>
<ellipse cx="1446.0" cy="546.4" rx="0.92" ry="0.95" opacity="0.58"/>
<ellipse cx="1440.6" cy="345.1" rx="0.74" ry="0.71" opacity="0.69"/>
<ellipse cx="1773.7" cy="456.5" rx="0.58" ry="1.01" opacity="0.28"/>
<ellipse cx="1716.0" cy="357.5" rx="0.83" ry="0.94" opacity="0.28"/>
<ellipse cx="1614.8" cy="605.6" rx="0.73" ry="0.67" opacity="0.28"/>
<ellipse cx="1784.0" cy="563.5" rx="1.77" ry="3.39" opacity="0.28"/>
<ellipse cx="1633.0" cy="309.7" rx="4.18" ry="3.46" opacity="0.28"/>
<ellipse cx="1571.2" cy="488.1" rx="2.90" ry="2.91" opacity="0.28"/>
<ellipse cx="1620.5" cy="541.4" rx="4.95" ry="4.97" opacity="0.28"/>
<ellipse cx="1610.5" cy="693.5" rx="2.90" ry="1.49" opacity="0.47"/>
<ellipse cx="1519.7" cy="516.5" rx="2.98" ry="2.96" opacity="0.28"/>
<ellipse cx="1751.8" cy="621.7" rx="1.74" ry="2.33" opacity="0.28"/>
<ellipse cx="1378.6" cy="562.9" rx="0.71" ry="0.85" opacity="0.86"/>
<ellipse cx="1544.0" cy="493.9" rx="0.84" ry="0.83" opacity="0.28"/>
<ellipse cx="1688.8" cy="494.1" rx="1.09" ry="1.25" opacity="0.28"/>
<ellipse cx="1409.0" cy="459.8" rx="1.02" ry="1.18" opacity="0.69"/>
<ellipse cx="1432.0" cy="595.0" rx="1.34" ry="1.33" opacity="0.70"/>
<ellipse cx="1769.9" cy="567.4" rx="1.13" ry="1.79" opacity="0.28"/>
<ellipse cx="1657.9" cy="329.3" rx="0.65" ry="0.60" opacity="0.28"/>
<ellipse cx="1541.6" cy="556.6" rx="0.82" ry="0.78" opacity="0.28"/>
<ellipse cx="1568.6" cy="430.4" rx="2.15" ry="2.13" opacity="0.28"/>
<ellipse cx="1472.3" cy="321.1" rx="0.79" ry="0.68" opacity="0.63"/>
<ellipse cx="1493.1" cy="393.3" rx="0.78" ry="0.76" opacity="0.42"/>
<ellipse cx="1674.4" cy="617.3" rx="0.64" ry="0.61" opacity="0.28"/>
<ellipse cx="1488.0" cy="312.9" rx="1.09" ry="0.90" opacity="0.60"/>
<ellipse cx="1351.7" cy="531.8" rx="1.03" ry="1.42" opacity="0.70"/>
<ellipse cx="1436.2" cy="576.7" rx="0.69" ry="0.70" opacity="0.66"/>
<ellipse cx="1597.4" cy="278.7" rx="3.75" ry="2.43" opacity="0.41"/>
<ellipse cx="1473.7" cy="381.9" rx="0.74" ry="0.73" opacity="0.51"/>
<ellipse cx="1417.9" cy="292.1" rx="1.06" ry="0.87" opacity="0.87"/>
<ellipse cx="1582.0" cy="391.4" rx="0.78" ry="0.75" opacity="0.28"/>
<ellipse cx="1398.6" cy="294.1" rx="0.60" ry="0.53" opacity="0.70"/>
<ellipse cx="1383.2" cy="357.0" rx="0.57" ry="0.64" opacity="0.70"/>
<ellipse cx="1418.1" cy="536.9" rx="1.03" ry="1.12" opacity="0.68"/>
<ellipse cx="1610.5" cy="314.7" rx="1.57" ry="1.29" opacity="0.28"/>
<ellipse cx="1638.2" cy="695.1" rx="1.75" ry="0.87" opacity="0.44"/>
<ellipse cx="1477.6" cy="291.9" rx="3.24" ry="2.43" opacity="0.68"/>
<ellipse cx="1392.0" cy="325.2" rx="0.81" ry="0.82" opacity="0.70"/>
<ellipse cx="1426.2" cy="633.2" rx="0.61" ry="0.55" opacity="0.79"/>
<ellipse cx="1374.8" cy="369.7" rx="0.81" ry="0.95" opacity="0.70"/>
<ellipse cx="1440.3" cy="368.7" rx="1.03" ry="1.03" opacity="0.65"/>
<ellipse cx="1461.9" cy="301.6" rx="3.04" ry="2.46" opacity="0.71"/>
<ellipse cx="1684.9" cy="572.1" rx="0.77" ry="0.82" opacity="0.28"/>
<ellipse cx="1692.9" cy="548.0" rx="1.36" ry="1.51" opacity="0.28"/>
<ellipse cx="1355.0" cy="402.0" rx="0.56" ry="0.74" opacity="0.70"/>
<ellipse cx="1644.9" cy="461.1" rx="1.65" ry="1.75" opacity="0.28"/>
<ellipse cx="1433.1" cy="595.4" rx="1.01" ry="1.00" opacity="0.70"/>
<ellipse cx="1464.6" cy="290.6" rx="1.96" ry="1.48" opacity="0.72"/>
<ellipse cx="1660.7" cy="680.0" rx="0.57" ry="0.37" opacity="0.36"/>
<ellipse cx="1375.1" cy="468.6" rx="0.62" ry="0.79" opacity="0.83"/>
<ellipse cx="1517.7" cy="254.1" rx="4.61" ry="2.17" opacity="0.67"/>
<ellipse cx="1449.2" cy="546.8" rx="0.73" ry="0.75" opacity="0.57"/>
<ellipse cx="1437.6" cy="425.5" rx="1.94" ry="2.06" opacity="0.60"/>
<ellipse cx="1468.5" cy="395.8" rx="1.58" ry="1.58" opacity="0.51"/>
<ellipse cx="1508.7" cy="459.9" rx="1.14" ry="1.14" opacity="0.30"/>
<ellipse cx="1419.3" cy="672.0" rx="0.51" ry="0.36" opacity="0.70"/>
<ellipse cx="1505.0" cy="631.6" rx="1.66" ry="1.35" opacity="0.53"/>
<ellipse cx="1415.4" cy="275.8" rx="0.81" ry="0.58" opacity="0.70"/>
<ellipse cx="1572.0" cy="405.0" rx="5.28" ry="5.12" opacity="0.28"/>
<ellipse cx="1774.4" cy="562.0" rx="2.12" ry="3.53" opacity="0.28"/>
<ellipse cx="1409.5" cy="649.2" rx="2.32" ry="2.03" opacity="0.70"/>
<ellipse cx="1666.0" cy="366.2" rx="0.80" ry="0.81" opacity="0.28"/>
<ellipse cx="1369.9" cy="552.2" rx="3.66" ry="4.54" opacity="0.70"/>
<ellipse cx="1546.4" cy="293.3" rx="0.88" ry="0.60" opacity="0.48"/>
<ellipse cx="1799.8" cy="530.7" rx="0.63" ry="1.61" opacity="0.28"/>
<ellipse cx="1415.2" cy="399.3" rx="3.11" ry="3.36" opacity="0.71"/>
<ellipse cx="1635.9" cy="299.1" rx="0.81" ry="0.64" opacity="0.28"/>
<ellipse cx="1372.3" cy="339.1" rx="1.94" ry="2.20" opacity="0.70"/>
<ellipse cx="1479.8" cy="273.4" rx="2.81" ry="1.82" opacity="0.72"/>
<ellipse cx="1653.9" cy="599.0" rx="3.62" ry="3.51" opacity="0.28"/>
<ellipse cx="1413.1" cy="371.8" rx="0.66" ry="0.70" opacity="0.75"/>
<ellipse cx="1442.9" cy="385.3" rx="4.65" ry="4.74" opacity="0.62"/>
<ellipse cx="1806.6" cy="475.6" rx="0.26" ry="0.82" opacity="0.28"/>
<ellipse cx="1452.8" cy="421.3" rx="1.83" ry="1.90" opacity="0.54"/>
<ellipse cx="1532.5" cy="608.3" rx="2.38" ry="2.04" opacity="0.38"/>
<ellipse cx="1719.7" cy="555.0" rx="0.90" ry="1.07" opacity="0.28"/>
<ellipse cx="1566.1" cy="303.2" rx="1.78" ry="1.31" opacity="0.40"/>
<ellipse cx="1397.4" cy="517.7" rx="3.74" ry="4.34" opacity="0.75"/>
<ellipse cx="1368.9" cy="400.5" rx="1.37" ry="1.69" opacity="0.70"/>
<ellipse cx="1470.8" cy="330.0" rx="0.72" ry="0.64" opacity="0.61"/>
<ellipse cx="1483.6" cy="654.4" rx="0.70" ry="0.52" opacity="0.65"/>
<ellipse cx="1664.4" cy="557.5" rx="1.90" ry="1.98" opacity="0.28"/>
<ellipse cx="1586.2" cy="507.6" rx="1.08" ry="1.08" opacity="0.28"/>
<ellipse cx="1544.8" cy="571.6" rx="0.80" ry="0.74" opacity="0.28"/>
<ellipse cx="1356.0" cy="520.1" rx="0.58" ry="0.78" opacity="0.70"/>
<ellipse cx="1533.1" cy="643.3" rx="0.88" ry="0.66" opacity="0.48"/>
<ellipse cx="1449.7" cy="457.6" rx="0.77" ry="0.82" opacity="0.53"/>
<ellipse cx="1431.2" cy="502.6" rx="0.96" ry="1.05" opacity="0.61"/>
<ellipse cx="1381.6" cy="613.8" rx="0.51" ry="0.56" opacity="0.70"/>
<ellipse cx="1693.6" cy="411.0" rx="0.98" ry="1.10" opacity="0.28"/>
<ellipse cx="1672.0" cy="650.2" rx="1.16" ry="0.99" opacity="0.28"/>
<ellipse cx="1435.1" cy="480.5" rx="0.76" ry="0.84" opacity="0.59"/>
<ellipse cx="1575.0" cy="243.3" rx="0.85" ry="0.29" opacity="0.58"/>
<ellipse cx="1406.7" cy="402.6" rx="3.54" ry="3.91" opacity="0.74"/>
<ellipse cx="1516.3" cy="607.5" rx="0.86" ry="0.75" opacity="0.43"/>
<ellipse cx="1683.7" cy="474.7" rx="4.27" ry="4.92" opacity="0.28"/>
<ellipse cx="1730.0" cy="525.9" rx="0.63" ry="0.79" opacity="0.28"/>
<ellipse cx="1576.7" cy="437.4" rx="4.59" ry="4.57" opacity="0.28"/>
<ellipse cx="1431.3" cy="408.1" rx="0.70" ry="0.75" opacity="0.64"/>
<ellipse cx="1396.6" cy="472.9" rx="2.40" ry="2.90" opacity="0.74"/>
<ellipse cx="1461.4" cy="277.9" rx="0.65" ry="0.45" opacity="0.77"/>
<ellipse cx="1679.0" cy="631.2" rx="1.63" ry="1.52" opacity="0.28"/>
<ellipse cx="1545.2" cy="640.5" rx="8.75" ry="6.51" opacity="0.43"/>
<ellipse cx="1569.7" cy="553.2" rx="0.79" ry="0.76" opacity="0.28"/>
<ellipse cx="1707.4" cy="504.9" rx="6.59" ry="7.87" opacity="0.28"/>
<ellipse cx="1514.6" cy="404.4" rx="0.93" ry="0.91" opacity="0.32"/>
<ellipse cx="1619.7" cy="651.6" rx="0.70" ry="0.54" opacity="0.30"/>
<ellipse cx="1669.2" cy="607.9" rx="1.95" ry="1.91" opacity="0.28"/>
<ellipse cx="1725.5" cy="615.0" rx="2.05" ry="2.31" opacity="0.28"/>
<ellipse cx="1568.5" cy="698.0" rx="0.95" ry="0.42" opacity="0.56"/>
<ellipse cx="1526.0" cy="706.3" rx="2.86" ry="1.00" opacity="0.69"/>
<ellipse cx="1402.0" cy="468.5" rx="2.47" ry="2.92" opacity="0.72"/>
<ellipse cx="1552.0" cy="349.5" rx="5.20" ry="4.49" opacity="0.30"/>
<ellipse cx="1422.0" cy="640.3" rx="2.97" ry="2.64" opacity="0.82"/>
<ellipse cx="1373.9" cy="588.9" rx="0.74" ry="0.87" opacity="0.70"/>
<ellipse cx="1615.6" cy="597.2" rx="0.75" ry="0.69" opacity="0.28"/>
<ellipse cx="1499.8" cy="322.2" rx="1.20" ry="1.01" opacity="0.54"/>
<ellipse cx="1413.7" cy="666.5" rx="1.36" ry="1.02" opacity="0.70"/>
<ellipse cx="1585.6" cy="503.5" rx="0.79" ry="0.79" opacity="0.28"/>
<ellipse cx="1663.0" cy="364.0" rx="0.72" ry="0.73" opacity="0.28"/>
<ellipse cx="1397.8" cy="438.1" rx="1.15" ry="1.33" opacity="0.75"/>
<ellipse cx="1613.0" cy="331.1" rx="0.73" ry="0.64" opacity="0.28"/>
<ellipse cx="1479.6" cy="341.1" rx="6.48" ry="5.88" opacity="0.56"/>
<ellipse cx="1564.0" cy="385.8" rx="0.82" ry="0.78" opacity="0.28"/>
<ellipse cx="1576.3" cy="316.6" rx="0.77" ry="0.61" opacity="0.33"/>
<ellipse cx="1632.5" cy="618.8" rx="0.78" ry="0.70" opacity="0.28"/>
<ellipse cx="1399.6" cy="352.2" rx="2.27" ry="2.40" opacity="0.83"/>
<ellipse cx="1563.8" cy="600.8" rx="1.02" ry="0.89" opacity="0.28"/>
<ellipse cx="1525.1" cy="258.7" rx="1.57" ry="0.79" opacity="0.64"/>
<ellipse cx="1392.8" cy="635.1" rx="0.56" ry="0.55" opacity="0.70"/>
<ellipse cx="1656.8" cy="452.7" rx="0.79" ry="0.85" opacity="0.28"/>
<ellipse cx="1473.1" cy="422.1" rx="1.27" ry="1.29" opacity="0.46"/>
<ellipse cx="1537.5" cy="347.5" rx="2.50" ry="2.16" opacity="0.35"/>
<ellipse cx="1417.6" cy="491.9" rx="0.73" ry="0.82" opacity="0.66"/>
<ellipse cx="1634.2" cy="485.4" rx="4.77" ry="4.99" opacity="0.28"/>
<ellipse cx="1558.9" cy="573.6" rx="0.79" ry="0.73" opacity="0.28"/>
<ellipse cx="1582.8" cy="239.1" rx="0.71" ry="0.20" opacity="0.58"/>
<ellipse cx="1665.5" cy="402.2" rx="0.71" ry="0.74" opacity="0.28"/>
<ellipse cx="1538.3" cy="286.3" rx="2.99" ry="1.96" opacity="0.52"/>
<ellipse cx="1440.9" cy="439.7" rx="1.92" ry="2.05" opacity="0.57"/>
<ellipse cx="1527.7" cy="633.6" rx="0.80" ry="0.63" opacity="0.46"/>
<ellipse cx="1570.5" cy="352.8" rx="2.45" ry="2.17" opacity="0.28"/>
<ellipse cx="1632.8" cy="501.6" rx="0.76" ry="0.79" opacity="0.28"/>
<ellipse cx="1520.6" cy="236.0" rx="0.73" ry="0.18" opacity="0.72"/>
<ellipse cx="1581.8" cy="648.8" rx="1.99" ry="1.48" opacity="0.37"/>
<ellipse cx="1712.8" cy="495.6" rx="1.95" ry="2.39" opacity="0.28"/>
<ellipse cx="1393.9" cy="610.9" rx="0.74" ry="0.78" opacity="0.87"/>
<ellipse cx="1670.0" cy="368.3" rx="1.37" ry="1.41" opacity="0.28"/>
<ellipse cx="1593.3" cy="641.0" rx="0.74" ry="0.59" opacity="0.32"/>
<ellipse cx="1455.4" cy="509.0" rx="1.21" ry="1.26" opacity="0.52"/>
<ellipse cx="1609.7" cy="365.0" rx="1.09" ry="1.03" opacity="0.28"/>
<ellipse cx="1536.9" cy="655.8" rx="3.13" ry="2.16" opacity="0.50"/>
<ellipse cx="1375.8" cy="375.4" rx="3.09" ry="3.63" opacity="0.70"/>
<ellipse cx="1448.5" cy="339.2" rx="0.70" ry="0.66" opacity="0.67"/>
<ellipse cx="1558.5" cy="627.1" rx="0.90" ry="0.71" opacity="0.36"/>
<ellipse cx="1581.9" cy="467.4" rx="0.80" ry="0.80" opacity="0.28"/>
<ellipse cx="1550.2" cy="694.9" rx="0.80" ry="0.36" opacity="0.59"/>
<ellipse cx="1385.1" cy="615.8" rx="0.66" ry="0.71" opacity="0.70"/>
<ellipse cx="1525.0" cy="338.4" rx="2.62" ry="2.24" opacity="0.42"/>
<ellipse cx="1509.7" cy="539.2" rx="1.15" ry="1.13" opacity="0.33"/>
<ellipse cx="1649.4" cy="415.5" rx="1.47" ry="1.53" opacity="0.28"/>
<ellipse cx="1619.7" cy="255.2" rx="0.83" ry="0.40" opacity="0.46"/>
<ellipse cx="1729.8" cy="507.2" rx="0.59" ry="0.76" opacity="0.28"/>
<ellipse cx="1604.0" cy="682.1" rx="0.85" ry="0.51" opacity="0.44"/>
<ellipse cx="1547.2" cy="366.3" rx="1.11" ry="1.00" opacity="0.28"/>
<ellipse cx="1614.7" cy="486.4" rx="1.96" ry="2.01" opacity="0.28"/>
<ellipse cx="1786.8" cy="539.4" rx="1.00" ry="1.95" opacity="0.28"/>
<ellipse cx="1521.4" cy="570.2" rx="4.59" ry="4.32" opacity="0.34"/>
<ellipse cx="1551.5" cy="317.4" rx="2.14" ry="1.64" opacity="0.39"/>
<ellipse cx="1517.2" cy="486.4" rx="0.87" ry="0.88" opacity="0.28"/>
<ellipse cx="1489.3" cy="656.7" rx="3.32" ry="2.44" opacity="0.64"/>
<ellipse cx="1583.3" cy="636.9" rx="4.51" ry="3.57" opacity="0.33"/>
<ellipse cx="1551.2" cy="448.0" rx="0.80" ry="0.80" opacity="0.28"/>
<ellipse cx="1404.2" cy="464.4" rx="0.99" ry="1.16" opacity="0.71"/>
<ellipse cx="1633.6" cy="652.1" rx="2.57" ry="2.04" opacity="0.28"/>
<ellipse cx="1534.9" cy="615.2" rx="4.61" ry="3.85" opacity="0.39"/>
<ellipse cx="1722.3" cy="528.5" rx="0.65" ry="0.80" opacity="0.28"/>
<ellipse cx="1537.7" cy="687.3" rx="1.04" ry="0.54" opacity="0.60"/>
<ellipse cx="1373.4" cy="471.9" rx="3.41" ry="4.45" opacity="0.83"/>
<ellipse cx="1740.5" cy="598.7" rx="1.75" ry="2.18" opacity="0.28"/>
<ellipse cx="1512.7" cy="370.6" rx="0.78" ry="0.73" opacity="0.39"/>
<ellipse cx="1710.6" cy="392.4" rx="1.84" ry="2.13" opacity="0.28"/>
<ellipse cx="1480.8" cy="687.2" rx="3.99" ry="2.20" opacity="0.75"/>
<ellipse cx="1501.6" cy="418.7" rx="0.78" ry="0.77" opacity="0.35"/>
<ellipse cx="1526.8" cy="306.3" rx="4.31" ry="3.25" opacity="0.50"/>
<ellipse cx="1805.4" cy="542.6" rx="0.31" ry="0.98" opacity="0.28"/>
<ellipse cx="1518.2" cy="342.2" rx="0.82" ry="0.71" opacity="0.43"/>
<ellipse cx="1702.2" cy="366.2" rx="2.28" ry="2.51" opacity="0.28"/>
<ellipse cx="1776.4" cy="570.9" rx="0.36" ry="0.61" opacity="0.28"/>
<ellipse cx="1570.9" cy="469.2" rx="1.73" ry="1.73" opacity="0.28"/>
<ellipse cx="1706.0" cy="592.7" rx="1.51" ry="1.65" opacity="0.28"/>
<ellipse cx="1578.5" cy="283.9" rx="2.61" ry="1.72" opacity="0.43"/>
<ellipse cx="1411.6" cy="421.5" rx="0.68" ry="0.75" opacity="0.70"/>
<ellipse cx="1414.6" cy="535.7" rx="0.72" ry="0.79" opacity="0.70"/>
<ellipse cx="1381.3" cy="486.3" rx="0.63" ry="0.79" opacity="0.80"/>
<ellipse cx="1448.7" cy="607.1" rx="4.25" ry="4.01" opacity="0.66"/>
<ellipse cx="1518.0" cy="523.3" rx="3.47" ry="3.44" opacity="0.28"/>
<ellipse cx="1387.9" cy="304.9" rx="0.91" ry="0.87" opacity="0.70"/>
<ellipse cx="1785.3" cy="549.9" rx="0.46" ry="0.88" opacity="0.28"/>
<ellipse cx="1606.3" cy="375.3" rx="2.97" ry="2.84" opacity="0.28"/>
<ellipse cx="1550.8" cy="435.3" rx="2.90" ry="2.87" opacity="0.28"/>
<ellipse cx="1449.3" cy="447.3" rx="1.41" ry="1.49" opacity="0.54"/>
<ellipse cx="1786.4" cy="580.6" rx="0.44" ry="0.96" opacity="0.28"/>
<ellipse cx="1417.3" cy="479.9" rx="1.47" ry="1.68" opacity="0.66"/>
<ellipse cx="1556.4" cy="509.2" rx="1.33" ry="1.32" opacity="0.28"/>
<ellipse cx="1625.0" cy="453.8" rx="1.84" ry="1.90" opacity="0.28"/>
<ellipse cx="1600.0" cy="593.8" rx="1.70" ry="1.56" opacity="0.28"/>
<ellipse cx="1551.8" cy="670.6" rx="3.99" ry="2.43" opacity="0.51"/>
<ellipse cx="1536.5" cy="594.9" rx="0.87" ry="0.77" opacity="0.34"/>
<ellipse cx="1422.9" cy="606.9" rx="0.63" ry="0.62" opacity="0.76"/>
<ellipse cx="1686.9" cy="483.1" rx="1.28" ry="1.47" opacity="0.28"/>
<ellipse cx="1391.8" cy="567.3" rx="0.61" ry="0.70" opacity="0.81"/>
<ellipse cx="1611.8" cy="601.5" rx="2.82" ry="2.58" opacity="0.28"/>
<ellipse cx="1425.5" cy="364.6" rx="0.67" ry="0.68" opacity="0.71"/>
<ellipse cx="1567.3" cy="365.6" rx="1.48" ry="1.34" opacity="0.28"/>
<ellipse cx="1607.0" cy="494.5" rx="1.36" ry="1.38" opacity="0.28"/>
<ellipse cx="1578.2" cy="631.7" rx="1.01" ry="0.81" opacity="0.32"/>
<ellipse cx="1356.6" cy="497.8" rx="3.05" ry="4.21" opacity="0.70"/>
<ellipse cx="1594.4" cy="423.8" rx="4.50" ry="4.48" opacity="0.28"/>
<ellipse cx="1795.7" cy="553.6" rx="0.36" ry="0.88" opacity="0.28"/>
<ellipse cx="1616.5" cy="306.8" rx="3.22" ry="2.57" opacity="0.28"/>
<ellipse cx="1750.7" cy="325.6" rx="0.32" ry="0.45" opacity="0.28"/>
<ellipse cx="1594.5" cy="402.3" rx="1.24" ry="1.21" opacity="0.28"/>
<ellipse cx="1665.9" cy="522.1" rx="0.72" ry="0.77" opacity="0.28"/>
<ellipse cx="1516.5" cy="350.3" rx="2.84" ry="2.53" opacity="0.42"/>
<ellipse cx="1610.8" cy="275.7" rx="2.50" ry="1.60" opacity="0.40"/>
<ellipse cx="1747.5" cy="549.0" rx="0.78" ry="1.05" opacity="0.28"/>
<ellipse cx="1511.6" cy="258.0" rx="0.76" ry="0.39" opacity="0.68"/>
<ellipse cx="1521.6" cy="702.1" rx="1.84" ry="0.73" opacity="0.68"/>
<ellipse cx="1780.2" cy="417.1" rx="0.38" ry="0.70" opacity="0.28"/>
<ellipse cx="1393.1" cy="496.8" rx="0.66" ry="0.79" opacity="0.76"/>
<ellipse cx="1424.0" cy="317.4" rx="1.96" ry="1.81" opacity="0.80"/>
<ellipse cx="1526.0" cy="714.3" rx="1.57" ry="0.38" opacity="0.71"/>
<ellipse cx="1420.9" cy="405.1" rx="1.01" ry="1.09" opacity="0.68"/>
<ellipse cx="1422.8" cy="335.3" rx="0.75" ry="0.73" opacity="0.77"/>
<ellipse cx="1526.9" cy="544.8" rx="0.79" ry="0.77" opacity="0.28"/>
<ellipse cx="1660.0" cy="402.3" rx="1.02" ry="1.06" opacity="0.28"/>
<ellipse cx="1554.1" cy="618.2" rx="0.84" ry="0.68" opacity="0.35"/>
<ellipse cx="1672.1" cy="487.1" rx="0.85" ry="0.94" opacity="0.28"/>
<ellipse cx="1553.3" cy="396.0" rx="4.94" ry="4.69" opacity="0.28"/>
<ellipse cx="1543.6" cy="659.3" rx="5.29" ry="3.53" opacity="0.49"/>
<ellipse cx="1660.9" cy="605.0" rx="0.94" ry="0.91" opacity="0.28"/>
<ellipse cx="1618.6" cy="385.3" rx="0.93" ry="0.91" opacity="0.28"/>
<ellipse cx="1401.2" cy="415.2" rx="0.79" ry="0.89" opacity="0.75"/>
<ellipse cx="1546.4" cy="369.6" rx="1.39" ry="1.26" opacity="0.28"/>
<ellipse cx="1458.8" cy="645.6" rx="3.68" ry="2.99" opacity="0.71"/>
<ellipse cx="1442.1" cy="355.4" rx="4.26" ry="4.18" opacity="0.67"/>
<ellipse cx="1602.9" cy="570.5" rx="0.78" ry="0.75" opacity="0.28"/>
<ellipse cx="1443.0" cy="349.0" rx="3.88" ry="3.75" opacity="0.67"/>
<ellipse cx="1694.6" cy="481.5" rx="0.68" ry="0.80" opacity="0.28"/>
<ellipse cx="1550.8" cy="597.8" rx="2.32" ry="2.02" opacity="0.30"/>
<ellipse cx="1793.6" cy="535.7" rx="0.31" ry="0.68" opacity="0.28"/>
<ellipse cx="1628.7" cy="349.7" rx="1.21" ry="1.13" opacity="0.28"/>
<ellipse cx="1510.3" cy="536.5" rx="1.64" ry="1.62" opacity="0.33"/>
<ellipse cx="1692.0" cy="334.9" rx="1.31" ry="1.32" opacity="0.28"/>
<ellipse cx="1648.0" cy="581.0" rx="0.71" ry="0.70" opacity="0.28"/>
<ellipse cx="1551.6" cy="484.8" rx="4.06" ry="4.06" opacity="0.28"/>
<ellipse cx="1455.1" cy="354.8" rx="3.74" ry="3.60" opacity="0.62"/>
<ellipse cx="1503.3" cy="389.7" rx="1.60" ry="1.55" opacity="0.39"/>
<ellipse cx="1626.4" cy="480.8" rx="0.77" ry="0.80" opacity="0.28"/>
<ellipse cx="1371.2" cy="420.7" rx="0.59" ry="0.74" opacity="0.86"/>
<ellipse cx="1521.3" cy="504.1" rx="0.79" ry="0.79" opacity="0.28"/>
<ellipse cx="1745.9" cy="491.2" rx="0.65" ry="0.93" opacity="0.28"/>
<ellipse cx="1396.4" cy="361.8" rx="0.70" ry="0.76" opacity="0.82"/>
<ellipse cx="1617.3" cy="403.1" rx="3.35" ry="3.34" opacity="0.28"/>
<ellipse cx="1586.8" cy="423.0" rx="0.78" ry="0.78" opacity="0.28"/>
<ellipse cx="1586.6" cy="441.0" rx="0.79" ry="0.79" opacity="0.28"/>
<ellipse cx="1616.7" cy="265.5" rx="0.86" ry="0.49" opacity="0.43"/>
<ellipse cx="1666.5" cy="481.0" rx="0.74" ry="0.81" opacity="0.28"/>
<ellipse cx="1599.1" cy="431.8" rx="1.17" ry="1.17" opacity="0.28"/>
<ellipse cx="1555.3" cy="513.1" rx="0.82" ry="0.81" opacity="0.28"/>
<ellipse cx="1507.5" cy="345.8" rx="1.84" ry="1.63" opacity="0.46"/>
<ellipse cx="1436.3" cy="507.2" rx="1.20" ry="1.29" opacity="0.59"/>
<ellipse cx="1667.1" cy="388.9" rx="3.72" ry="3.89" opacity="0.28"/>
<ellipse cx="1557.0" cy="630.3" rx="1.78" ry="1.40" opacity="0.37"/>
<ellipse cx="1504.6" cy="630.5" rx="0.88" ry="0.72" opacity="0.53"/>
<ellipse cx="1510.6" cy="281.9" rx="0.87" ry="0.58" opacity="0.61"/>
<ellipse cx="1638.6" cy="565.0" rx="2.61" ry="2.61" opacity="0.28"/>
<ellipse cx="1604.8" cy="244.8" rx="2.43" ry="0.85" opacity="0.52"/>
<ellipse cx="1417.9" cy="605.3" rx="1.34" ry="1.35" opacity="0.77"/>
</g>
<rect x="1270" y="220" width="560" height="510" fill="url(#moonlight)"/>
<rect x="1270" y="220" width="560" height="510" filter="url(#moonblotch)" style="mix-blend-mode:overlay" opacity="0.14"/>
<rect x="1270" y="220" width="560" height="510" filter="url(#moontex)" style="mix-blend-mode:overlay" opacity="0.34"/>
<rect x="1270" y="220" width="560" height="510" fill="url(#moonshade)"/>
</g>
<defs>
<pattern id="cells" patternUnits="userSpaceOnUse" width="6" height="6" patternTransform="rotate(-9.2)">
<rect width="6" height="6" fill="#2a2a2d"/>
<path d="M0 0H6M0 0V6" stroke="#5a554e" stroke-width="1.5"/>
</pattern>
<linearGradient id="coneg" gradientUnits="userSpaceOnUse" x1="530" y1="480" x2="640" y2="430">
<stop offset="0" stop-color="#6f7483"/>
<stop offset="0.45" stop-color="#5c616f"/>
<stop offset="1" stop-color="#464b59"/>
</linearGradient>
<linearGradient id="flareg" gradientUnits="userSpaceOnUse" x1="470" y1="470" x2="640" y2="360">
<stop offset="0" stop-color="#b9b8ae"/>
<stop offset="0.18" stop-color="#dcdbd0"/>
<stop offset="0.5" stop-color="#f0efe4"/>
<stop offset="0.85" stop-color="#e6e5da"/>
<stop offset="1" stop-color="#c8c7bc"/>
</linearGradient>
<linearGradient id="ringg" gradientUnits="userSpaceOnUse" x1="465" y1="440" x2="625" y2="350">
<stop offset="0" stop-color="#aeada4"/>
<stop offset="0.3" stop-color="#cdccc2"/>
<stop offset="0.7" stop-color="#c9c8be"/>
<stop offset="1" stop-color="#b4b3aa"/>
</linearGradient>
<linearGradient id="cylg" gradientUnits="userSpaceOnUse" x1="450" y1="400" x2="600" y2="320">
<stop offset="0" stop-color="#8f8e87"/>
<stop offset="0.22" stop-color="#c3c2b8"/>
<stop offset="0.55" stop-color="#efeee2"/>
<stop offset="1" stop-color="#e8e7db"/>
</linearGradient>
<linearGradient id="nozg" gradientUnits="userSpaceOnUse" x1="452" y1="300" x2="500" y2="290">
<stop offset="0" stop-color="#2c2c2b"/>
<stop offset="0.6" stop-color="#3b3b3a"/>
<stop offset="1" stop-color="#454544"/>
</linearGradient>
<filter id="cb" x="-5%" y="-5%" width="110%" height="110%"><feGaussianBlur stdDeviation="0.45"/></filter>
</defs>
<g id="craft" filter="url(#cb)">
<path d="M654 40L666.8 66.7L593.4 258.8L574.4 251.8Z" fill="#151413"/>
<path d="M654 40L666.8 66.7L593.4 258.8" fill="none" stroke="#4a3f38" stroke-width="0.6"/>
<path d="M626 112L640 136M601 180L613 206" stroke="#5a4b40" stroke-width="0.6"/>
<path d="M258.3 171L288.5 173.4L450.6 302.9L426.8 302.9Z" fill="#2b2826"/>
<path d="M268 172L436 303M279 173L444 303" stroke="#4a3b32" stroke-width="0.7" fill="none"/>
<path d="M314 212L340 214M371 258L396 260" stroke="#3d3430" stroke-width="0.8"/>
<path d="M428 303L447 315M450 303L450 316M440 303L449 314" stroke="#4b403c" stroke-width="1.6" fill="none"/>
<path d="M166.6 387.7L402.8 349.7L410.7 405.8L178.4 444.5Z" fill="url(#cells)"/>
<path d="M166.6 387.7L402.8 349.7L410.7 405.8L178.4 444.5Z" fill="#4a4038" opacity="0.18"/>
<path d="M170.5 404.2L404.3 367.1M176 432.7L409 392.4" stroke="#806a5a" stroke-width="1.7" opacity="0.8" fill="none"/>
<path d="M173.2 418.5L406.6 379.8" stroke="#6b5a4e" stroke-width="1" opacity="0.45" fill="none"/>
<path d="M245.6 375L255 432.7M325.4 361.6L333.3 419.3" stroke="#0d0d0f" stroke-width="1.6"/>
<path d="M404 352L408 372M411 384L415 404M408 362L420 364L431 373M413 394L421 388L431 373L441 371" stroke="#67574f" stroke-width="3.6" fill="none" stroke-linejoin="round"/>
<path d="M527.6 482.7C524.9 486.7 538.1 486.9 543.9 488.8C549.7 490.7 556.1 492.5 562.2 493.9C568.3 495.2 575.4 496.0 580.5 496.9C585.6 497.8 589.0 499.0 592.7 499.0C596.4 499.0 599.5 498.4 602.9 497.0C606.3 495.6 609.6 493.9 613.0 490.8C616.4 487.7 620.2 483.3 623.2 478.6C626.2 473.9 629.3 468.5 631.3 462.4C633.3 456.3 634.4 448.8 635.4 442.0C636.4 435.2 637.1 429.1 637.4 421.7C637.7 414.2 643.6 395.9 637.4 397.3C631.2 398.7 612.9 418.7 600.0 430.0C587.1 441.3 572.1 456.2 560.0 465.0C547.9 473.8 530.3 478.7 527.6 482.7Z" fill="url(#coneg)"/>
<path d="M460.5 425.8C458.9 428.4 459.6 432.5 460.1 435.9C460.6 439.3 461.8 442.9 463.6 446.1C465.4 449.3 467.8 452.1 470.7 455.2C473.6 458.2 477.4 461.7 480.8 464.4C484.2 467.1 485.9 469.0 491.0 471.5C496.1 474.0 505.3 477.7 511.4 479.6C517.5 481.5 522.2 483.0 527.6 482.7C533.0 482.4 536.4 481.0 543.9 477.6C551.4 474.2 562.6 469.0 572.4 462.4C582.2 455.8 594.1 446.1 602.9 438.0C611.7 429.9 619.5 420.4 625.2 413.6C631.0 406.8 634.8 402.7 637.4 397.3C640.0 391.9 640.5 386.1 640.9 381.0C641.2 375.9 640.8 371.9 639.5 366.8C638.2 361.7 636.1 355.2 633.4 350.5C630.7 345.8 628.8 338.4 623.2 338.3C617.6 338.2 625.5 336.4 600.0 350.0C574.5 363.6 493.2 407.4 470.0 420.0C446.8 432.6 462.1 423.2 460.5 425.8Z" fill="url(#flareg)"/>
<path d="M460.6 425.5C460.2 430.5 460.6 433.1 462.1 436.9C463.7 440.7 466.5 445.0 469.9 448.3C473.3 451.6 477.9 455.0 482.7 456.8C487.4 458.6 492.9 459.0 498.4 458.9C503.9 458.8 508.9 458.1 515.5 456.1C522.1 454.1 531.2 450.2 538.3 446.8C545.4 443.4 551.3 439.7 558.2 435.4C565.1 431.1 574.3 424.8 579.6 421.2C584.9 417.6 586.1 417.4 590.0 414.1C593.9 410.8 598.0 407.6 602.9 401.4C607.8 395.2 615.5 384.0 619.1 376.9C622.8 369.8 624.1 365.0 624.8 358.6C625.5 352.2 625.3 343.1 623.2 338.3C621.1 333.5 622.5 329.7 612.0 330.0C601.5 330.3 584.6 327.2 560.0 340.0C535.4 352.8 480.8 392.8 464.2 407.0C447.6 421.2 461.0 420.5 460.6 425.5Z" fill="url(#ringg)" stroke="#2a2a28" stroke-width="0.8"/>
<path d="M436.8 349.9C421.8 361.2 437.5 352.6 440.0 358.0C442.5 363.4 448.0 373.8 452.0 382.0C456.0 390.2 461.9 402.1 464.2 407.0C466.5 411.9 464.2 408.4 465.6 411.2C467.0 414.0 469.1 420.7 472.7 424.0C476.3 427.3 480.4 430.5 487.0 431.2C493.6 431.9 502.9 431.3 512.6 428.3C522.3 425.3 535.2 419.6 545.4 413.4C555.6 407.2 566.5 398.4 573.9 391.3C581.3 384.2 585.6 377.2 590.0 370.6C594.4 364.1 597.0 358.8 600.0 352.0C603.0 345.2 612.2 338.7 608.0 330.0C603.8 321.3 588.0 306.7 575.0 300.0C562.0 293.3 553.0 281.7 530.0 290.0C507.0 298.3 451.8 338.6 436.8 349.9Z" fill="url(#cylg)"/>
<path d="M444 366L452 373L463 377.5L474.9 378.4L489.1 374.1L509 365.6L519.7 357L536.1 344.6" fill="none" stroke="#3a3a36" stroke-width="0.9" stroke-dasharray="5 1.2"/>
<path d="M489 391.5L496.2 388.4L518.3 378.4" fill="none" stroke="#55554f" stroke-width="1.1"/>
<path d="M512 364L545 413M488 375L512 428M519 379L550 410" stroke="#c9c8bd" stroke-width="1" fill="none"/>
<path d="M551 357L576 390" stroke="#8f8e86" stroke-width="1.6" fill="none"/>
<path d="M436.8 349.9L439.2 359.9L446.4 366.3L454.9 369.1L464.9 368.4L479.1 364.2L493.4 358.5L506.9 350.6L517.6 342.8L524.7 336.4L528.0 342.0L521.0 349.0L510.0 357.0L496.5 365.0L482.0 370.7L468.0 375.0L457.0 375.5L448.0 372.5L441.0 365.5L437.5 357.0Z" fill="#c2c1b8"/>
<path d="M436.0 344.2C436.6 341.6 438.2 338.2 440.1 334.4C442.0 330.6 444.5 325.5 447.4 321.4C450.2 317.3 453.7 313.5 457.2 310.0C460.7 306.5 464.5 303.2 468.6 300.2C472.7 297.2 476.2 295.2 481.6 292.1C487.0 289.0 495.7 283.9 501.1 281.5C506.5 279.1 509.3 278.5 514.2 277.4C519.1 276.3 526.4 275.2 530.4 275.0C534.4 274.8 536.2 274.5 538.0 276.0C539.8 277.5 540.8 280.0 541.0 284.0C541.2 288.0 540.3 294.0 539.0 300.0C537.7 306.0 535.4 313.9 533.0 320.0C530.6 326.1 527.3 332.6 524.7 336.4C522.1 340.2 520.6 340.4 517.6 342.8C514.6 345.2 510.9 348.0 506.9 350.6C502.9 353.2 498.0 356.2 493.4 358.5C488.8 360.8 483.9 362.6 479.1 364.2C474.4 365.8 468.9 367.6 464.9 368.4C460.9 369.2 458.0 369.5 454.9 369.1C451.8 368.8 449.0 367.8 446.4 366.3C443.8 364.8 440.8 362.6 439.2 359.9C437.6 357.2 437.3 352.5 436.8 349.9C436.3 347.3 435.4 346.8 436.0 344.2Z" fill="#b3b2ab"/>
<g fill="#5d5d5a">
<path d="M497.2 284.3L515.5 278.2L509.4 292.5L496.2 296.5Z"/>
<path d="M496.2 299.6L505.4 296.5L516.6 297.6L521.1 305.7L519.6 315.9L506.4 318.9L502.3 312.8L498.2 307.7Z"/>
<path d="M463.7 328.1L470.8 322.0L482.0 325.0L486.0 331.1L482.0 339.3L473.8 345.4L467.7 342.3L462.6 335.2Z"/>
<path d="M471.8 349.4L484.0 344.3L488.1 348.4L482.0 359.6L467.7 363.7Z"/>
<path d="M449.4 322.0L457.6 321.0L448.4 338.2L444.3 339.3Z"/>
<path d="M492.1 328.1L500.3 330.1L496.2 340.3L490.1 338.2Z"/>
<path d="M500.3 323.0L508.4 322.0L512.5 326.0L506.4 334.2Z"/>
</g>
<path d="M500 316L517 298M501 317L521 305M502 318L519.5 313M484 330L466 325M485 332L463 333M484 334L469 343" stroke="#b3b2ab" stroke-width="1.1" fill="none"/>
<g fill="#4c4c4a">
<path d="M503.5 322.0L509.0 321.0L515.5 335.0L509.5 339.0Z"/>
<path d="M485.0 333.5L491.5 333.0L498.5 347.0L492.0 351.5Z"/>
<path d="M450.0 343.0L456.5 343.0L462.5 356.0L456.0 360.5Z"/>
<path d="M439.5 340.0L446.0 340.0L451.5 352.0L445.0 357.0Z"/>
<path d="M511.0 267.0L517.0 270.0L524.5 280.0L519.5 283.5Z"/>
<path d="M524.0 272.0L531.0 274.0L527.0 284.0L521.5 282.0Z"/>
</g><g fill="#2b2b2a">
<ellipse cx="512.5" cy="337.6" rx="5.2" ry="4.2" transform="rotate(-25 512.5 337.6)"/>
<ellipse cx="495.2" cy="350.2" rx="5.2" ry="4.2" transform="rotate(-25 495.2 350.2)"/>
<ellipse cx="459.3" cy="358.8" rx="5" ry="4" transform="rotate(-25 459.3 358.8)"/>
<ellipse cx="448.4" cy="354.8" rx="4.6" ry="3.8" transform="rotate(-25 448.4 354.8)"/>
<ellipse cx="522.9" cy="283" rx="4.4" ry="3.4" transform="rotate(-25 522.9 283)"/>
</g>
<path d="M450.9 295.5C451.7 291.2 451.6 288.6 455.5 283.3C459.4 278.0 459.7 278.3 465.7 275.7C471.7 273.1 472.5 273.2 477.9 273.6C483.3 274.0 483.4 275.1 486.0 277.2C488.6 279.3 485.4 275.3 487.6 281.3C489.8 287.3 490.7 290.4 494.2 299.6C497.7 308.8 499.4 309.9 500.8 315.9C502.2 321.9 501.6 319.3 499.3 322.0C497.0 324.7 495.4 325.2 492.1 326.0C488.8 326.8 496.0 330.7 487.1 325.0C478.2 319.3 467.8 311.5 458.6 304.7C449.4 297.9 454.6 302.1 452.5 299.6C450.4 297.1 450.1 299.8 450.9 295.5Z" fill="url(#nozg)"/>
<path d="M451.4 379.2L487 425.5" stroke="#4a4a47" stroke-width="2"/>
<path d="M452.6 378.6L488 424.6" stroke="#c9c8be" stroke-width="0.7"/>
<path d="M467.3 409.1C467.1 410.4 465.9 414.2 466.3 416.9C466.7 419.6 468.1 422.6 469.9 425.5C471.7 428.4 474.9 431.9 477.0 434.0C479.1 436.1 479.4 437.7 482.7 438.3C486.0 438.9 492.0 437.8 497.0 437.6C502.0 437.4 508.3 438.0 512.6 436.9C516.9 435.8 519.8 433.1 522.6 431.2C525.5 429.3 527.3 426.8 529.7 425.5C532.1 424.2 534.9 423.2 536.8 423.3C538.7 423.4 540.0 424.9 541.1 426.2C542.2 427.5 542.9 430.4 543.2 431.2" fill="none" stroke="#b86a1c" stroke-width="1"/>
<path d="M482.7 431.2L478.4 452.5M485.5 431.5L481.5 453M546.8 416.9L556.8 436.9M549.5 415.5L559.6 435.5" stroke="#a3a29a" stroke-width="0.7"/>
<ellipse cx="478.4" cy="387" rx="7" ry="6.2" fill="#e9e8df" stroke="#8d8c85" stroke-width="0.8"/>
<path d="M472.4 390l6 -1l1 4l-6 1z" fill="#3a3428"/><path d="M473.9 390.2l3 -0.6l0.6 2.6l-3 0.6z" fill="#c9982c"/>
<path d="M475.4 394l-2 7M479.4 393l2 7" stroke="#3c3c3a" stroke-width="1.6"/>
<ellipse cx="499.8" cy="420.5" rx="7" ry="6.2" fill="#e9e8df" stroke="#8d8c85" stroke-width="0.8"/>
<path d="M493.8 423.5l6 -1l1 4l-6 1z" fill="#3a3428"/><path d="M495.3 423.7l3 -0.6l0.6 2.6l-3 0.6z" fill="#c9982c"/>
<path d="M496.8 427.5l-2 7M500.8 426.5l2 7" stroke="#3c3c3a" stroke-width="1.6"/>
<ellipse cx="430.5" cy="350.5" rx="4.6" ry="3.2" fill="#dddcd3" transform="rotate(-25 430.5 350.5)"/>
<ellipse cx="435" cy="370.5" rx="4.6" ry="3.2" fill="#dddcd3" transform="rotate(-25 435 370.5)"/>
<ellipse cx="459.5" cy="404.5" rx="4.199999999999999" ry="2.8" fill="#dddcd3" transform="rotate(-25 459.5 404.5)"/>
<path d="M600.5 332.5l3 1l-1 1.6l-2.4 -0.6z" fill="#c22a1e"/><path d="M604.8 344.5l2 0.4l-0.4 3l-1.6 -0.3z" fill="#24358c"/>
<path d="M543.3 245L618.7 267.4L584.8 348.7L515.6 333Z" fill="#1f1a18"/>
<path d="M543.3 245L618.7 267.4" stroke="#6a5a50" stroke-width="0.7"/>
<path d="M534 274.5L607.5 294.5M525 304L596 321.5" stroke="#4d4038" stroke-width="0.8"/>
<path d="M568 252.5L540 338.5M593 260L562 343.5" stroke="#3a2c26" stroke-width="2.2" opacity="0.8"/>
<path d="M531 337L545 343L556 340M545 343L548 348" stroke="#4a3f3a" stroke-width="1.6" fill="none"/>
</g>
<defs><filter id="tb" x="-2%" y="-2%" width="104%" height="104%"><feGaussianBlur stdDeviation="0.28"/></filter></defs><g filter="url(#tb)"><circle cx="320.5" cy="863" r="86" fill="url(#glow)" opacity="0.9"/>
<circle cx="469.3" cy="863" r="86" fill="url(#glow)" opacity="0.9"/>
<circle cx="618.0" cy="863" r="86" fill="url(#glow)" opacity="0.9"/>
<circle cx="766.7" cy="863" r="86" fill="url(#glow)" opacity="0.9"/>
<linearGradient id="ag0" gradientUnits="userSpaceOnUse" x1="320.5" y1="858.9" x2="260.6" y2="818.1"><stop offset="0" stop-color="#41787b"/><stop offset="1" stop-color="#9ac6c4"/></linearGradient>
<path d="M320.50 858.90A64.4 64.4 0 0 1 260.58 818.10" fill="none" stroke="url(#ag0)" stroke-width="8"/>
<circle cx="320.5" cy="794.5" r="60" fill="url(#disc)" stroke="#d8dcdc" stroke-width="1.1"/>
<text class="gv" x="0" y="0" font-size="28.6" text-anchor="middle" transform="translate(321.4 806.3) scale(0.842 1)">04:20:45</text>
<text class="gu" x="0" y="0" font-size="20.5" text-anchor="middle" letter-spacing="3.3" transform="translate(323.4 832.8) scale(0.74 1)">D:H:M</text>
<text class="gl" x="0" y="0" font-size="16" text-anchor="middle" letter-spacing="2.0" transform="translate(324.40 889.2) scale(0.872 1)" stroke="#fff" stroke-width="1.0" stroke-linejoin="round">MISSION</text>
<text class="gl" x="0" y="0" font-size="16" text-anchor="middle" letter-spacing="2.0" transform="translate(324.05 907.2) scale(0.851 1)" stroke="#fff" stroke-width="1.0" stroke-linejoin="round">ELAPSED TIME</text>
<linearGradient id="ag1" gradientUnits="userSpaceOnUse" x1="469.3" y1="858.9" x2="452.1" y2="856.6"><stop offset="0" stop-color="#41787b"/><stop offset="1" stop-color="#9ac6c4"/></linearGradient>
<path d="M469.30 858.90A64.4 64.4 0 0 1 452.09 856.56" fill="none" stroke="url(#ag1)" stroke-width="8"/>
<circle cx="469.3" cy="794.5" r="60" fill="url(#disc)" stroke="#d8dcdc" stroke-width="1.1"/>
<text class="gv" x="0" y="0" font-size="28.6" text-anchor="middle" transform="translate(470.0 808) scale(0.875 1)">1,047</text>
<text class="gu" x="0" y="0" font-size="20.5" text-anchor="middle" letter-spacing="3.3" transform="translate(471.7 832.8) scale(0.74 1)">MPH</text>
<text class="gl" x="0" y="0" font-size="16" text-anchor="middle" letter-spacing="2.0" transform="translate(471.80 889.2) scale(0.825 1)" stroke="#fff" stroke-width="1.0" stroke-linejoin="round">VELOCITY</text>
<linearGradient id="ag2" gradientUnits="userSpaceOnUse" x1="618.0" y1="858.9" x2="637.3" y2="730.1"><stop offset="0" stop-color="#41787b"/><stop offset="1" stop-color="#9ac6c4"/></linearGradient>
<path d="M618.00 858.90A64.4 64.4 0 1 1 663.54 748.96" fill="none" stroke="url(#ag2)" stroke-width="8"/>
<circle cx="618.0" cy="794.5" r="60" fill="url(#disc)" stroke="#d8dcdc" stroke-width="1.1"/>
<text class="gv" x="0" y="0" font-size="28.6" text-anchor="middle" transform="translate(616.9 808) scale(0.868 1)">250,122</text>
<text class="gu" x="0" y="0" font-size="20.5" text-anchor="middle" letter-spacing="3.3" transform="translate(618.9 832.8) scale(0.74 1)">MILES</text>
<text class="gl" x="0" y="0" font-size="16" text-anchor="middle" letter-spacing="2.0" transform="translate(619.95 889.2) scale(0.848 1)" stroke="#fff" stroke-width="1.0" stroke-linejoin="round">DISTANCE</text>
<text class="gl" x="0" y="0" font-size="16" text-anchor="middle" letter-spacing="2.0" transform="translate(619.60 907.2) scale(0.848 1)" stroke="#fff" stroke-width="1.0" stroke-linejoin="round">FROM EARTH</text>
<linearGradient id="ag3" gradientUnits="userSpaceOnUse" x1="766.7" y1="858.9" x2="757.1" y2="858.2"><stop offset="0" stop-color="#41787b"/><stop offset="1" stop-color="#9ac6c4"/></linearGradient>
<path d="M766.70 858.90A64.4 64.4 0 0 1 757.07 858.18" fill="none" stroke="url(#ag3)" stroke-width="8"/>
<circle cx="766.7" cy="794.5" r="60" fill="url(#disc)" stroke="#d8dcdc" stroke-width="1.1"/>
<text class="gv" x="0" y="0" font-size="28.6" text-anchor="middle" transform="translate(766.0 808) scale(0.865 1)">9,390</text>
<text class="gu" x="0" y="0" font-size="20.5" text-anchor="middle" letter-spacing="3.3" transform="translate(767.6 832.8) scale(0.74 1)">MILES</text>
<text class="gl" x="0" y="0" font-size="16" text-anchor="middle" letter-spacing="2.0" transform="translate(767.70 889.2) scale(0.845 1)" stroke="#fff" stroke-width="1.0" stroke-linejoin="round">DISTANCE</text>
<text class="gl" x="0" y="0" font-size="16" text-anchor="middle" letter-spacing="2.9" transform="translate(768.20 907.2) scale(0.848 1)" stroke="#fff" stroke-width="1.0" stroke-linejoin="round">TO MOON</text></g>
</svg>
<div id="bar">
<p id="desc">Moon is in the middle-distance in the center right, lit from the right. On-screen overlays read: Distance to Earth: 250122 mi, Distance to the Moon: 9390 mi, Velocity: 1047 mph, Mission Elapsed Time: 4D : 20H : 45M</p>
<h1 id="title">Artemis Real-time Orbit Website</h1>
</div>
</body>
</html>
